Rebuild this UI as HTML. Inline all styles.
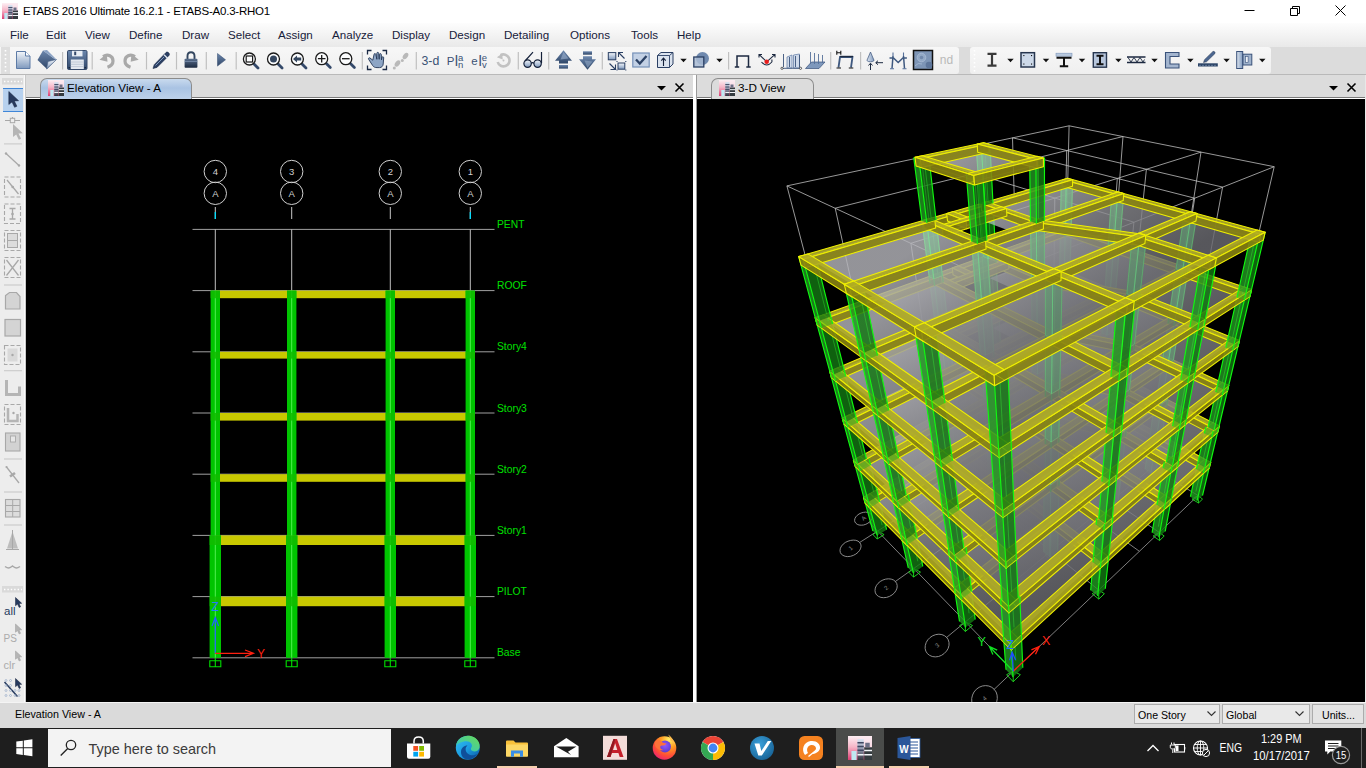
<!DOCTYPE html><html><head><meta charset="utf-8"><title>ETABS 2016 Ultimate 16.2.1 - ETABS-A0.3-RHO1</title><style>
*{box-sizing:border-box}
html,body{margin:0;padding:0}
body{width:1366px;height:768px;overflow:hidden;position:relative;background:#dcdcdc;font-family:"Liberation Sans",sans-serif;color:#000}
.abs{position:absolute}
#title{left:0;top:0;width:1366px;height:23px;background:#fff}
#title .t{left:23px;top:4.5px;font-size:11.5px;white-space:nowrap;color:#000;letter-spacing:-.216px}
#menu{left:0;top:23px;width:1366px;height:24px;background:linear-gradient(#fdfdfd,#f3f3f3 50%,#e9e9e9)}
#menu span{position:absolute;top:4.5px;font-size:11.6px;white-space:nowrap;color:#16203a;transform-origin:0 50%}
#tbar{left:0;top:47px;width:1366px;height:27px;background:#dcdcdc}
#tb1{left:0;top:0;width:959px;height:27px;background:linear-gradient(#f7f7f7,#efefef);border-radius:0 3px 3px 0}
#tb2{left:970px;top:0;width:301px;height:27px;background:linear-gradient(#f7f7f7,#efefef);border-radius:3px}
#tabline{left:0;top:74px;width:1366px;height:1px;background:#b9b9b9}
#strip{left:0;top:75px;width:1366px;height:24px;background:#dcdcdc}
.view{background:#000;overflow:hidden}
#lv{left:26px;top:99px;width:667px;height:603px}
#rv{left:697px;top:99px;width:668px;height:603px}
#split{left:693px;top:75px;width:4px;height:627px;background:#fff}
.tab{height:21px;top:78px;border:1px solid #8c8c8c;border-bottom:none;border-radius:7px 7px 0 0;font-size:11.7px;white-space:nowrap}
.tab span{position:absolute;top:1.5px}
#status{left:0;top:702px;width:1366px;height:26px;background:#dadada;border-top:1px solid #f4f4f4}
#task{left:0;top:728px;width:1366px;height:40px;background:#1e1e1e}
.cb{top:1px;height:20px;background:#e9e9e9;border:1px solid #acacac;font-size:10.6px;padding:3.5px 0 0 3px;white-space:nowrap}
</style></head><body>
<div id="title" class="abs"><svg class="abs" style="left:2px;top:3px" width="16" height="16" viewBox="0 0 16 16"><linearGradient id="ai" x1="0" y1="0" x2="0" y2="1"><stop offset="0" stop-color="#fdf0f4"/><stop offset=".45" stop-color="#f6b6c8"/><stop offset="1" stop-color="#de3f74"/></linearGradient><linearGradient id="aj" x1="0" y1="0" x2="0" y2="1"><stop offset="0" stop-color="#dfe8f6"/><stop offset=".5" stop-color="#8d93aa"/><stop offset="1" stop-color="#33363f"/></linearGradient><rect width="16" height="16" fill="url(#ai)"/><rect x="8" y="0" width="8" height="9" fill="#fbeaf1" opacity=".7"/><rect x="2.300" y="10" width="3.400" height="6" fill="#bfe8f2"/><rect x="6.300" y="2" width="4.200" height="14" fill="url(#aj)"/><rect x="10.800" y="7.500" width="5.200" height="8.500" fill="#343b3f"/><rect x="11.500" y="4.500" width="3" height="3" fill="#6c6f86"/><path d="M6.300 4.500h4.200M6.300 7h4.200M6.300 9.500h4.200" stroke="#3f4560" stroke-width=".9"/><path d="M10.800 9.700h5.200M10.800 12.500h5.200M6.300 12.500h4.200" stroke="#f2f4f8" stroke-width="1"/></svg><span class="abs t">ETABS 2016 Ultimate 16.2.1 - ETABS-A0.3-RHO1</span>
<svg class="abs" style="left:1220px;top:0" width="146" height="23"><path d="M24.5 10.5h10M70.5 8.5h7v7h-7zM72.5 8.5v-2h7v7h-2M115.5 5.5l10 10M125.5 5.5l-10 10" fill="none" stroke="#000" stroke-width="1"/></svg>
</div>
<div id="menu" class="abs"><span style="left:10px">File</span><span style="left:46px">Edit</span><span style="left:85px">View</span><span style="left:129px">Define</span><span style="left:182px">Draw</span><span style="left:228px">Select</span><span style="left:278px">Assign</span><span style="left:332px">Analyze</span><span style="left:392px">Display</span><span style="left:449px">Design</span><span style="left:504px">Detailing</span><span style="left:570px">Options</span><span style="left:631px">Tools</span><span style="left:677px">Help</span></div>
<div id="tbar" class="abs"><div id="tb1" class="abs"></div><div id="tb2" class="abs"></div><svg class="abs" style="left:0;top:0" width="1366" height="27" viewBox="0 47 1366 27" font-family="Liberation Sans, sans-serif"><defs>
<linearGradient id="sg" x1="0" y1="0" x2="0" y2="1"><stop offset="0" stop-color="#f4f7fb"/><stop offset="1" stop-color="#7f99bd"/></linearGradient>
<linearGradient id="sd" x1="0" y1="0" x2="0" y2="1"><stop offset="0" stop-color="#6c87ad"/><stop offset="1" stop-color="#2f4668"/></linearGradient>
<linearGradient id="sh" x1="0" y1="0" x2="1" y2="0"><stop offset="0" stop-color="#dfe7f1"/><stop offset="1" stop-color="#7f99bd"/></linearGradient>
<linearGradient id="sk" x1="0" y1="0" x2="0" y2="1"><stop offset="0" stop-color="#5a6f8e"/><stop offset="1" stop-color="#1c2a40"/></linearGradient><path id="dd" d="M-3.2 -1.6h6.4l-3.2 3.4z" fill="#111"/>
<g id="mag"><path d="M4.6 4.9l4 4" stroke="#34496a" stroke-width="2.8" stroke-linecap="round"/><circle r="6" fill="#fbfcfd" stroke="#1a1a1a" stroke-width="1.3"/></g>
<path id="ptr" d="M0 0v13l3.2-2.6l2.6 5.4l2.3-1.1l-2.6-5.2l4.3-.3z"/>
</defs><rect x="1" y="47" width="9" height="27" fill="#dedede"/><path d="M5.5 50v22" stroke="#fff" stroke-width="1.6" stroke-dasharray="1.6 2.4"/><path d="M974.5 50v22" stroke="#fff" stroke-width="1.6" stroke-dasharray="1.6 2.4"/><path d="M62.6 52v17.5" stroke="#c0c0c0" stroke-width="1.2"/><path d="M92.2 52v17.5" stroke="#c0c0c0" stroke-width="1.2"/><path d="M146.5 52v17.5" stroke="#c0c0c0" stroke-width="1.2"/><path d="M176.5 52v17.5" stroke="#c0c0c0" stroke-width="1.2"/><path d="M206.3 52v17.5" stroke="#c0c0c0" stroke-width="1.2"/><path d="M236.2 52v17.5" stroke="#c0c0c0" stroke-width="1.2"/><path d="M362.3 52v17.5" stroke="#c0c0c0" stroke-width="1.2"/><path d="M416.3 52v17.5" stroke="#c0c0c0" stroke-width="1.2"/><path d="M518.3 52v17.5" stroke="#c0c0c0" stroke-width="1.2"/><path d="M548.7 52v17.5" stroke="#c0c0c0" stroke-width="1.2"/><path d="M602.3 52v17.5" stroke="#c0c0c0" stroke-width="1.2"/><path d="M728.6 52v17.5" stroke="#c0c0c0" stroke-width="1.2"/><path d="M830.7 52v17.5" stroke="#c0c0c0" stroke-width="1.2"/><path d="M860.6 52v17.5" stroke="#c0c0c0" stroke-width="1.2"/><path d="M16.5 51.5h9l4.5 4.5v12.5h-13.5z" fill="url(#sg)" stroke="#5d7ba6" stroke-width="1"/><path d="M25.5 51.5v4.5h4.5" fill="#fff" stroke="#5d7ba6" stroke-width="1"/><path d="M37.5 60l5.5-9.5l13 9.5l-9 9z" fill="url(#sd)"/><path d="M43 50.5l4-.5l9.5 9.5l-.5 .5z" fill="#8aa2c4"/><path d="M46.5 69l1.5-7.5l8.5-2z" fill="url(#sg)" stroke="#4a6388" stroke-width=".6"/><rect x="67.5" y="50.5" width="19.5" height="19" rx="1.2" fill="url(#sd)" stroke="#34496a" stroke-width="1"/><rect x="72" y="50.8" width="10.5" height="5.6" fill="#e9eef5"/><rect x="74.2" y="51.6" width="2" height="3.6" fill="#34496a"/><rect x="70.8" y="59.5" width="13" height="9.5" fill="#e4e9f0"/><path d="M70.8 62h13M70.8 64.3h13M70.8 66.6h13" stroke="#b8c2d0" stroke-width=".8"/><rect x="68.6" y="67" width="1.3" height="1.3" fill="#16243a"/><rect x="84.6" y="67" width="1.3" height="1.3" fill="#16243a"/><path d="M103 56.5c5-3 10-.5 10 4.500c0 3-2 5-5.500 6.200" fill="none" stroke="#a9a9a9" stroke-width="3.2"/><path d="M99.500 59.800l7.200-6l.8 8z" fill="#a9a9a9"/><path d="M135 56.500c-5-3-10-.5-10 4.500c0 3 2 5 5.500 6.200" fill="none" stroke="#a9a9a9" stroke-width="3.200"/><path d="M138.700 59.800l-7.200-6l-.8 8z" fill="#a9a9a9"/><path d="M153 68.500l1.200-3.800l11.800-12.200c1.600-1.500 4.500 1.300 3 2.900l-12 12z" fill="#2b3f63" stroke="#1c2c48" stroke-width=".6"/><path d="M164 54.800l3.500 3.400" stroke="#dfe7f2" stroke-width="1.300"/><path d="M155.500 65.500l8.500-8.500" stroke="#7f97ba" stroke-width="1"/><path d="M187.500 59v-3c0-5 7-5 7 0v3" fill="none" stroke="#33465f" stroke-width="1.900"/><rect x="184.600" y="58.700" width="12.800" height="9" rx=".8" fill="url(#sk)"/><path d="M184.600 61.500h12.800" stroke="#8fa5c4" stroke-width=".8" opacity=".7"/><path d="M217.500 53.500l8 6.300l-8 6.300z" fill="url(#sd)" stroke="#30486c" stroke-width=".5"/><use href="#mag" x="249.400" y="59"/><rect x="246.200" y="56" width="6.400" height="6" fill="none" stroke="#1a1a1a" stroke-width="1.200"/><use href="#mag" x="273.500" y="59"/><circle cx="273.500" cy="59" r="3.500" fill="#34465f"/><use href="#mag" x="297.400" y="59"/><path d="M293 59l4-3.600v2.100h4.200v3h-4.200v2.100z" fill="#34465f"/><use href="#mag" x="321.700" y="58.700"/><path d="M317.900 58.700h7.600M321.700 54.900v7.600" stroke="#1a1a1a" stroke-width="1.300"/><use href="#mag" x="345.800" y="58.700"/><path d="M342 58.700h7.600" stroke="#1a1a1a" stroke-width="1.300"/><path d="M367.500 54.500v-4h4M382.500 50.500h4v4M386.500 65.500v4h-4M371.500 69.500h-4v-4" fill="none" stroke="#1b2a45" stroke-width="1.300"/><path d="M372.800 60.200l-2.800-2.200c-1-.7-2 .4-1.300 1.400l4 6.200c1 1.500 2.300 2 4.300 2h2.500c2.300 0 3.500-1.600 3.700-3.600l.5-6.200c.1-1.300-1.600-1.500-1.800-.2l-.4 2.300l-.2-5.300c0-1.300-1.800-1.300-1.900 0l-.2 4.700l-.5-6c-.1-1.300-1.900-1.200-1.900 .1l.1 5.900l-1.100-5c-.3-1.200-2-.8-1.800 .4z" fill="#8da5c5" stroke="#233655" stroke-width=".9"/><g fill="#b9b9b9"><ellipse cx="397.500" cy="63.500" rx="2.300" ry="3.600" transform="rotate(35 397.500 63.500)"/><circle cx="394.300" cy="68" r="1.500"/><ellipse cx="405.500" cy="56" rx="2.300" ry="3.600" transform="rotate(35 405.500 56)"/><circle cx="402.300" cy="60.500" r="1.500"/></g><text x="421.500" y="64.800" font-size="12.300" fill="#3b5275">3-d</text><text x="446.800" y="64.800" font-size="11.500" fill="#3b5275">P</text><text x="454.800" y="66.300" font-size="15" fill="#3b5275">l</text><text x="458" y="60.600" font-size="9.500" fill="#3b5275">a</text><text x="458" y="68.300" font-size="9.500" fill="#3b5275">n</text><text x="471.300" y="64.800" font-size="11.500" fill="#3b5275">e</text><text x="478.500" y="66.300" font-size="15" fill="#3b5275">l</text><text x="481.800" y="60.600" font-size="9.500" fill="#3b5275">e</text><text x="482" y="68.300" font-size="9.500" fill="#3b5275">v</text><path d="M500.500 55.200a6 6 0 1 1 -2.800 6.800" fill="none" stroke="#c2c2c2" stroke-width="2.600"/><path d="M496.800 57.300l5.500-3.800l.4 6z" fill="#c2c2c2"/><circle cx="503.500" cy="60.500" r="1" fill="#c2c2c2"/><circle cx="527.600" cy="63.600" r="3.700" fill="url(#sg)" stroke="#14203a" stroke-width="1.200"/><circle cx="537.600" cy="63.600" r="3.700" fill="url(#sg)" stroke="#14203a" stroke-width="1.200"/><path d="M531.300 63.300q1.300-1.300 2.600 0M525 61l8-8.800M541.500 63v-11" fill="none" stroke="#14203a" stroke-width="1.200"/><path d="M563.500 50.300l8.500 10.400h-4v2.800h-9v-2.800h-4z" fill="url(#sd)"/><rect x="559" y="65" width="9" height="3.600" fill="url(#sd)"/><path d="M563.500 52l5 6.500l-8 1z" fill="#9db3d0" opacity=".6"/><path d="M587.500 69.700l8.500-10.400h-4v-3h-9v3h-4z" fill="url(#sd)"/><rect x="583" y="51.300" width="9" height="3.400" fill="url(#sd)"/><path d="M587.500 68l5-6.500l-8-1z" fill="#9db3d0" opacity=".5"/><rect x="608.300" y="52.600" width="7.500" height="7.200" fill="url(#sg)" stroke="#2a3f63" stroke-width="1"/><rect x="618" y="63" width="6.800" height="6.200" fill="url(#sg)" stroke="#2a3f63" stroke-width="1"/><path d="M624.500 58.500l-5.500-5.500M618.500 57v-4.500h4.500M609.500 63.500l5.500 5.500M615.500 64.500v5h-5M617 62v-1M625.800 62v-1M617 70.500v-1M625.800 70.500v-1" fill="none" stroke="#2a3f63" stroke-width="1.100"/><rect x="632.800" y="53" width="16.400" height="14" fill="#c3d1e5" stroke="#7691b8" stroke-width="1.200"/><path d="M636 59.500l3.800 4l6.700-7.600" fill="none" stroke="#2c4265" stroke-width="2.300"/><path d="M657.500 55.500l3.500-3h12v11.500l-3.500 3.500h-12z" fill="#dbe3ee" stroke="#2a3f63" stroke-width="1"/><path d="M657.500 55.500h12v12M669.500 55.500l3.500-3" fill="none" stroke="#2a3f63" stroke-width=".9"/><path d="M663.500 66v-7M661.300 60.700l2.200-2.500l2.200 2.500" fill="none" stroke="#14203a" stroke-width="1.100"/><use href="#dd" x="683.500" y="60.400"/><circle cx="702.500" cy="58.500" r="6.500" fill="#6f89ae"/><rect x="693.800" y="57" width="10" height="10" fill="#a9bbd3" fill-opacity=".85" stroke="#2a3f63" stroke-width="1.300"/><use href="#dd" x="719.500" y="60.400"/><path d="M737 67v-11h11.500v11M734.800 67h4.400M746.300 67h4.400" fill="none" stroke="#1c2940" stroke-width="1.500"/><path d="M759.500 54.800l7.200 7l7.800-7M759 57.500v-3h3M772 54.500h3v3M761.500 62q5.200 6 10.400 0M771.900 62v-2.500" fill="none" stroke="#1c2940" stroke-width="1.100"/><circle cx="766.700" cy="61.800" r="2.300" fill="#e81c1c"/><path d="M787 68v-11l5-2v13zM793.500 68v-13l6-1v14z" fill="#cfdaea" stroke="#6d87ad" stroke-width=".8"/><path d="M782 68.300h18.500M783.500 54v13M789.500 57v10M795.500 56v11M799.500 55v12" fill="none" stroke="#3a527a" stroke-width=".9"/><circle cx="782" cy="68.300" r="1.100" fill="#fff" stroke="#222" stroke-width=".7"/><circle cx="800.500" cy="68.300" r="1.100" fill="#fff" stroke="#222" stroke-width=".7"/><path d="M805.500 68.500l6-6.500h13.500l-6 6.500z" fill="#7e98bc" stroke="#3a527a" stroke-width=".7"/><path d="M810.500 52v12M814.500 53v11M818.500 54v10M822.500 55v8" stroke="#56709a" stroke-width=".9"/><path d="M836.800 50.800v4M840.800 50.800v4M836.800 52.800h4" stroke="#111" stroke-width="1.100" fill="none"/><path d="M838.500 67.500l1.500-10.500h12.500l-1.500 10.500" fill="none" stroke="#3e587f" stroke-width="1.800"/><path d="M840 56.500h13" stroke="#1c2940" stroke-width="1.400"/><path d="M836.500 68h4.500M848.800 68h4.500" stroke="#111" stroke-width="1.200"/><path d="M870.500 52l3.600 8.500c-1.500 1.800-5.700 1.800-7.200 0z" fill="url(#sh)" stroke="#3a527a" stroke-width=".7"/><path d="M870.500 70v-6.500M868.500 65.500l2-2.300l2 2.300M883 62.700h-7M878 60.700l-2.300 2l2.300 2" fill="none" stroke="#1c2940" stroke-width="1"/><path d="M892 68.500l1-12.500M904.500 68.500l-1-12.500M889.500 58h4l4.700 4.500l4.700-4.500h4" fill="none" stroke="#3e587f" stroke-width="1.500"/><path d="M893 56v-3.500M903.500 56v-3.500M890 68.700h4M902.500 68.700h4" stroke="#56709a" stroke-width="1.100"/><rect x="913.500" y="50.500" width="19" height="19" fill="#7d95b6" stroke="#111" stroke-width="1.500"/><circle cx="921.500" cy="57.500" r="4.300" fill="#93a9c6" stroke="#a9bcd5" stroke-width=".8"/><circle cx="921.500" cy="57.500" r="1.800" fill="#7189ac"/><circle cx="929" cy="65" r="3.300" fill="#5e769b"/><path d="M915 66q3-4 7-2" stroke="#a9bcd5" stroke-width=".8" fill="none"/><text x="939.800" y="63.800" font-size="12" fill="#b9b9b9">nd</text><path d="M992 54v11.500M987.500 53.800h9M987.500 65.700h9" stroke="#3a3a3a" stroke-width="2.200" fill="none"/><use href="#dd" x="1010.500" y="60.400"/><rect x="1021" y="52.700" width="13.500" height="14.300" fill="#cdd9e9" stroke="#27364f" stroke-width="1.500"/><g fill="#111"><rect x="1023.300" y="55" width="1.100" height="1.100"/><rect x="1031" y="55" width="1.100" height="1.100"/><rect x="1023.300" y="63.500" width="1.100" height="1.100"/><rect x="1031" y="63.500" width="1.100" height="1.100"/></g><use href="#dd" x="1046" y="60.400"/><rect x="1056" y="53.200" width="16" height="3" fill="#b9c9de" stroke="#7e97bb" stroke-width=".6"/><path d="M1056.500 57.700h15M1064 58v8M1059.800 66.200h8.400" stroke="#111" stroke-width="2" fill="none"/><use href="#dd" x="1082" y="60.400"/><rect x="1093.300" y="52.700" width="13.200" height="14.500" fill="#b7c6dc" stroke="#27364f" stroke-width="1.400"/><path d="M1100 56v8M1096.500 55.800h7M1096.500 64.200h7" stroke="#111" stroke-width="2" fill="none"/><use href="#dd" x="1118.400" y="60.400"/><path d="M1127 57h18.500M1127 62.500h18.500" stroke="#1c2940" stroke-width="1.300"/><path d="M1128 57.500l3 4.500l3-4.500l3 4.500l3-4.500l3 4.500l1.500-2.500" fill="none" stroke="#1c2940" stroke-width=".9"/><use href="#dd" x="1154.500" y="60.400"/><path d="M1165.500 52.500h13.500v4h-9v7.500h9v4h-13.500z" fill="#a3b5cf" stroke="#3a527a" stroke-width="1.100"/><use href="#dd" x="1190.400" y="60.400"/><rect x="1198" y="63.300" width="19.800" height="3.200" fill="#2c4467"/><path d="M1200 66v-1.200M1203 66v-1.200M1206 66v-1.200M1209 66v-1.200M1212 66v-1.200M1215 66v-1.200" stroke="#9fb4d0" stroke-width=".8"/><path d="M1203.500 62.500l1-2.800l8.200-8c1.200-1.100 3.200 .8 2.100 2l-8.300 8.100z" fill="#4b6690" stroke="#27364f" stroke-width=".5"/><use href="#dd" x="1226.600" y="60.400"/><rect x="1236.700" y="51.500" width="6" height="17" fill="url(#sh)" stroke="#3a527a" stroke-width="1"/><rect x="1243" y="54.200" width="8.800" height="10.800" fill="#9fb2cc" stroke="#3a527a" stroke-width="1"/><rect x="1245.500" y="56.500" width="2.600" height="6" fill="#eef2f8" stroke="#3a527a" stroke-width=".6"/><use href="#dd" x="1262.300" y="60.400"/></svg></div>
<div id="tabline" class="abs"></div><div id="strip" class="abs"></div>
<div class="abs" style="left:0;top:75px;width:26px;height:627px;background:#e4e4e4"></div>
<svg class="abs" style="left:0;top:75px" width="26" height="627" viewBox="0 75 26 627" font-family="Liberation Sans, sans-serif"><rect x="0" y="75" width="25" height="627" fill="#ededed"/><path d="M24.500 75v627" stroke="#fafafa"/><path d="M25.500 75v627" stroke="#c8c8c8"/><rect x="2" y="78" width="21" height="6.500" fill="#dadada"/><path d="M4 81.500h18" stroke="#fff" stroke-width="1.400" stroke-dasharray="1.400 2"/><rect x="2" y="586" width="21" height="6.500" fill="#dadada"/><path d="M4 589.500h18" stroke="#fff" stroke-width="1.400" stroke-dasharray="1.400 2"/><rect x="3" y="88.500" width="20" height="23" fill="#b7d1ee"/><path d="M3 88.500h20M3 111.500h20" stroke="#3f86d8" stroke-width="1"/><use href="#ptr" x="8.800" y="91.500" fill="#263a5e" stroke="#16233d" stroke-width=".5"/><path d="M5 120.500h15M12.500 117v3" stroke="#a8a8a8" stroke-width="1.100"/><rect x="10.300" y="118.300" width="4.400" height="4.400" fill="#ededed" stroke="#a8a8a8"/><use href="#ptr" x="13" y="124" fill="#b5b5b5" transform="scale(1)" /><path d="M4 143.9h18" stroke="#c9c9c9" stroke-width="1.100"/><path d="M4 285.0h18" stroke="#c9c9c9" stroke-width="1.100"/><path d="M4 370.7h18" stroke="#c9c9c9" stroke-width="1.100"/><path d="M4 459.0h18" stroke="#c9c9c9" stroke-width="1.100"/><path d="M4 492.0h18" stroke="#c9c9c9" stroke-width="1.100"/><path d="M4 525.0h18" stroke="#c9c9c9" stroke-width="1.100"/><path d="M6 153.500l13 12" stroke="#a8a8a8" stroke-width="1.300"/><circle cx="6" cy="153.500" r="1.200" fill="#a8a8a8"/><circle cx="19" cy="165.500" r="1.200" fill="#a8a8a8"/><rect x="4.500" y="177.0" width="16" height="20.0" fill="none" stroke="#a8a8a8" stroke-width="1.100" stroke-dasharray="4 2"/><path d="M7 180l11.500 14" stroke="#a8a8a8" stroke-width="1.300"/><circle cx="12.700" cy="187" r="1.300" fill="#a8a8a8"/><rect x="4.500" y="204.0" width="16" height="19.5" fill="none" stroke="#a8a8a8" stroke-width="1.100" stroke-dasharray="4 2"/><path d="M12.500 208.500v10.500M9.500 208.500h6M9.500 219h6" stroke="#a8a8a8" stroke-width="1.300"/><circle cx="12.500" cy="214" r="1.300" fill="#a8a8a8"/><rect x="4.500" y="230.5" width="16" height="20.0" fill="none" stroke="#a8a8a8" stroke-width="1.100" stroke-dasharray="4 2"/><rect x="7.500" y="233.500" width="10" height="14" fill="#dcdcdc" stroke="#a8a8a8"/><path d="M7.500 240.500h10" stroke="#a8a8a8"/><rect x="4.500" y="257.5" width="16" height="20.0" fill="none" stroke="#a8a8a8" stroke-width="1.100" stroke-dasharray="4 2"/><path d="M6.500 260l12 15.500M18.500 260l-12 15.500" stroke="#a8a8a8" stroke-width="1.300"/><path d="M5.500 309v-13.500l4-3h7l3.500 4v12.500z" fill="#d4d4d4" stroke="#a8a8a8" stroke-width="1.200"/><rect x="5" y="319.500" width="15.500" height="16.500" fill="#d4d4d4" stroke="#a8a8a8" stroke-width="1.200"/><rect x="4.500" y="345.5" width="16" height="19.0" fill="none" stroke="#a8a8a8" stroke-width="1.100" stroke-dasharray="4 2"/><rect x="7.500" y="348.500" width="10" height="13" fill="#d9d9d9"/><circle cx="12.500" cy="355" r="1.200" fill="#a8a8a8"/><path d="M6.500 380v14.500h13v-8" fill="none" stroke="#b5b5b5" stroke-width="3"/><rect x="4.500" y="404.5" width="16" height="20.0" fill="none" stroke="#a8a8a8" stroke-width="1.100" stroke-dasharray="4 2"/><path d="M8 408v13h9.500v-7" fill="none" stroke="#b5b5b5" stroke-width="2.500"/><circle cx="13.500" cy="413" r="1.200" fill="#a8a8a8"/><rect x="5.500" y="433" width="14.500" height="18" fill="#d2d2d2" stroke="#a8a8a8" stroke-width="1.100"/><rect x="10.500" y="436" width="5" height="6" fill="#e6e6e6" stroke="#a8a8a8" stroke-width=".9"/><path d="M6.500 467l12.500 16" stroke="#a8a8a8" stroke-width="1.300"/><path d="M10 476.500l5-3.500" stroke="#a8a8a8" stroke-width="2.600"/><circle cx="6.500" cy="467" r="1.100" fill="#a8a8a8"/><rect x="5.500" y="499.500" width="14.500" height="17.500" fill="#dcdcdc" stroke="#a8a8a8" stroke-width="1.100"/><path d="M12.700 499.500v17.500M5.500 505.500h14.500M5.500 511.500h14.500" stroke="#a8a8a8" stroke-width="1"/><path d="M12.500 531.500l5.500 17h-11z" fill="#bdbdbd"/><path d="M12.500 530v20M6 549.500h13" stroke="#a8a8a8" stroke-width="1"/><path d="M5 566.500c3 2 4.500 2 7.500-.5c3 2.500 4.500 2.500 7.500 .5" fill="none" stroke="#a8a8a8" stroke-width="1.500"/><text x="4" y="615" font-size="11.500" fill="#263a5e">all</text><path d="M15.500 597.5v8.200l2-1.600l1.700 3.400l1.400-.7l-1.600-3.300l2.700-.2z" fill="#263a5e" stroke="#16233d" stroke-width=".5"/><text x="3.500" y="641.500" font-size="10" fill="#ababab">PS</text><path d="M15.500 624.0v8.200l2-1.600l1.700 3.400l1.400-.7l-1.600-3.300l2.700-.2z" fill="#b5b5b5" stroke="#9a9a9a" stroke-width=".5"/><text x="3.500" y="668.500" font-size="11" fill="#ababab">clr</text><path d="M15.500 651.0v8.200l2-1.600l1.700 3.400l1.400-.7l-1.600-3.300l2.700-.2z" fill="#b5b5b5" stroke="#9a9a9a" stroke-width=".5"/><path d="M4.500 682l13 14.500" stroke="#263a5e" stroke-width="1.500"/><g fill="none" stroke="#8fa5c4" stroke-width=".6"><circle cx="6" cy="680.500" r="1"/><circle cx="10.500" cy="680.500" r="1"/><circle cx="6" cy="685.500" r="1"/><circle cx="10.500" cy="685.500" r="1"/><circle cx="6" cy="690.500" r="1"/><circle cx="10.500" cy="690.500" r="1"/><circle cx="15" cy="690.500" r="1"/><circle cx="6" cy="695.500" r="1"/><circle cx="10.500" cy="695.500" r="1"/><circle cx="15" cy="695.500" r="1"/><circle cx="19" cy="695.500" r="1"/><circle cx="19" cy="690.500" r="1"/></g><path d="M15.500 678.5v8.200l2-1.600l1.700 3.400l1.400-.7l-1.600-3.300l2.700-.2z" fill="#263a5e" stroke="#16233d" stroke-width=".5"/></svg>
<div class="abs" style="left:26px;top:97px;width:667px;height:2px;background:#fff;border-top:1px solid #7a7a7a"></div>
<div class="abs" style="left:697px;top:97px;width:669px;height:2px;background:#fff;border-top:1px solid #7a7a7a"></div>
<div id="split" class="abs"></div><div class="abs" style="left:696px;top:75px;width:1px;height:627px;background:#9a9a9a"></div>
<div class="abs tab" style="left:40px;width:152px;background:linear-gradient(#c9daee,#a9c3e3 45%,#bcd1ea)"><svg class="abs" style="left:7px;top:0.5px" width="16" height="16" viewBox="0 0 16 16"><linearGradient id="ai" x1="0" y1="0" x2="0" y2="1"><stop offset="0" stop-color="#fdf0f4"/><stop offset=".45" stop-color="#f6b6c8"/><stop offset="1" stop-color="#de3f74"/></linearGradient><linearGradient id="aj" x1="0" y1="0" x2="0" y2="1"><stop offset="0" stop-color="#dfe8f6"/><stop offset=".5" stop-color="#8d93aa"/><stop offset="1" stop-color="#33363f"/></linearGradient><rect width="16" height="16" fill="url(#ai)"/><rect x="8" y="0" width="8" height="9" fill="#fbeaf1" opacity=".7"/><rect x="2.300" y="10" width="3.400" height="6" fill="#bfe8f2"/><rect x="6.300" y="2" width="4.200" height="14" fill="url(#aj)"/><rect x="10.800" y="7.500" width="5.200" height="8.500" fill="#343b3f"/><rect x="11.500" y="4.500" width="3" height="3" fill="#6c6f86"/><path d="M6.300 4.500h4.200M6.300 7h4.200M6.300 9.500h4.200" stroke="#3f4560" stroke-width=".9"/><path d="M10.800 9.700h5.200M10.800 12.500h5.200M6.300 12.500h4.200" stroke="#f2f4f8" stroke-width="1"/></svg><span style="left:26px">Elevation View - A</span></div>
<div class="abs tab" style="left:711px;width:103px;background:#dcdcdc"><svg class="abs" style="left:7px;top:0.5px" width="16" height="16" viewBox="0 0 16 16"><linearGradient id="ai" x1="0" y1="0" x2="0" y2="1"><stop offset="0" stop-color="#fdf0f4"/><stop offset=".45" stop-color="#f6b6c8"/><stop offset="1" stop-color="#de3f74"/></linearGradient><linearGradient id="aj" x1="0" y1="0" x2="0" y2="1"><stop offset="0" stop-color="#dfe8f6"/><stop offset=".5" stop-color="#8d93aa"/><stop offset="1" stop-color="#33363f"/></linearGradient><rect width="16" height="16" fill="url(#ai)"/><rect x="8" y="0" width="8" height="9" fill="#fbeaf1" opacity=".7"/><rect x="2.300" y="10" width="3.400" height="6" fill="#bfe8f2"/><rect x="6.300" y="2" width="4.200" height="14" fill="url(#aj)"/><rect x="10.800" y="7.500" width="5.200" height="8.500" fill="#343b3f"/><rect x="11.500" y="4.500" width="3" height="3" fill="#6c6f86"/><path d="M6.300 4.500h4.200M6.300 7h4.200M6.300 9.500h4.200" stroke="#3f4560" stroke-width=".9"/><path d="M10.800 9.700h5.200M10.800 12.500h5.200M6.300 12.500h4.200" stroke="#f2f4f8" stroke-width="1"/></svg><span style="left:26px">3-D View</span></div>
<svg class="abs" style="left:650px;top:80px" width="40" height="16"><path d="M7 6h9l-4.5 4.5z" fill="#000"/><path d="M25.5 3.5l8 8M33.5 3.5l-8 8" stroke="#000" stroke-width="1.6" fill="none"/></svg>
<svg class="abs" style="left:1322px;top:80px" width="40" height="16"><path d="M7 6h9l-4.5 4.5z" fill="#000"/><path d="M25.5 3.5l8 8M33.5 3.5l-8 8" stroke="#000" stroke-width="1.6" fill="none"/></svg>
<div id="lv" class="abs view"><svg class="ev" width="667" height="603" viewBox="26 99 667 603">
<style>.el{stroke:#a0a0a0;stroke-width:1}.et{font:10.3px "Liberation Sans",sans-serif;fill:#00e000}.bb{fill:none;stroke:#d0d0d0;stroke-width:1}.bt2{font:9.5px "Liberation Sans",sans-serif;fill:#d0d0d0;text-anchor:middle}</style>
<line class="el" x1="192.5" x2="494.5" y1="229.4" y2="229.4"/>
<line class="el" x1="192.5" x2="494.5" y1="290.6" y2="290.6"/>
<line class="el" x1="192.5" x2="494.5" y1="351.8" y2="351.8"/>
<line class="el" x1="192.5" x2="494.5" y1="413.0" y2="413.0"/>
<line class="el" x1="192.5" x2="494.5" y1="474.2" y2="474.2"/>
<line class="el" x1="192.5" x2="494.5" y1="535.4" y2="535.4"/>
<line class="el" x1="192.5" x2="494.5" y1="596.6" y2="596.6"/>
<line class="el" x1="192.5" x2="494.5" y1="657.8" y2="657.8"/>
<line class="el" x1="215.3" x2="215.3" y1="229.4" y2="657.8" style="stroke:#c0c0c0"/>
<line class="el" x1="291.7" x2="291.7" y1="229.4" y2="657.8" style="stroke:#c0c0c0"/>
<line class="el" x1="390.3" x2="390.3" y1="229.4" y2="657.8" style="stroke:#c0c0c0"/>
<line class="el" x1="470.3" x2="470.3" y1="229.4" y2="657.8" style="stroke:#c0c0c0"/>
<rect x="215.3" y="290.6" width="255.0" height="7.6" fill="#c8c800"/>
<rect x="215.3" y="351.8" width="255.0" height="6.8" fill="#c8c800"/>
<rect x="215.3" y="413.0" width="255.0" height="7.6" fill="#c8c800"/>
<rect x="215.3" y="474.2" width="255.0" height="7.6" fill="#c8c800"/>
<rect x="215.3" y="535.4" width="255.0" height="9.6" fill="#c8c800"/>
<rect x="215.3" y="596.6" width="255.0" height="9.6" fill="#c8c800"/>
<rect x="210.6" y="290.6" width="9.4" height="244.8" fill="#00c400"/>
<rect x="209.6" y="535.4" width="11.4" height="122.4" fill="#00c400"/>
<line x1="215.3" x2="215.3" y1="290.6" y2="657.8" stroke="#50f050" stroke-width="1"/>
<path d="M215.3 657.8v3M209.8 660.8h11v6h-11zM215.3 660.8v6" fill="none" stroke="#00e000" stroke-width="1.1"/>
<rect x="287.0" y="290.6" width="9.4" height="244.8" fill="#00c400"/>
<rect x="286.0" y="535.4" width="11.4" height="122.4" fill="#00c400"/>
<line x1="291.7" x2="291.7" y1="290.6" y2="657.8" stroke="#50f050" stroke-width="1"/>
<path d="M291.7 657.8v3M286.2 660.8h11v6h-11zM291.7 660.8v6" fill="none" stroke="#00e000" stroke-width="1.1"/>
<rect x="385.6" y="290.6" width="9.4" height="244.8" fill="#00c400"/>
<rect x="384.6" y="535.4" width="11.4" height="122.4" fill="#00c400"/>
<line x1="390.3" x2="390.3" y1="290.6" y2="657.8" stroke="#50f050" stroke-width="1"/>
<path d="M390.3 657.8v3M384.8 660.8h11v6h-11zM390.3 660.8v6" fill="none" stroke="#00e000" stroke-width="1.1"/>
<rect x="465.6" y="290.6" width="9.4" height="244.8" fill="#00c400"/>
<rect x="464.6" y="535.4" width="11.4" height="122.4" fill="#00c400"/>
<line x1="470.3" x2="470.3" y1="290.6" y2="657.8" stroke="#50f050" stroke-width="1"/>
<path d="M470.3 657.8v3M464.8 660.8h11v6h-11zM470.3 660.8v6" fill="none" stroke="#00e000" stroke-width="1.1"/>
<rect x="210.6" y="290.6" width="9.4" height="7.6" fill="#10bc00" opacity=".85"/>
<rect x="287.0" y="290.6" width="9.4" height="7.6" fill="#10bc00" opacity=".85"/>
<rect x="385.6" y="290.6" width="9.4" height="7.6" fill="#10bc00" opacity=".85"/>
<rect x="465.6" y="290.6" width="9.4" height="7.6" fill="#10bc00" opacity=".85"/>
<rect x="210.6" y="351.8" width="9.4" height="6.8" fill="#10bc00" opacity=".85"/>
<rect x="287.0" y="351.8" width="9.4" height="6.8" fill="#10bc00" opacity=".85"/>
<rect x="385.6" y="351.8" width="9.4" height="6.8" fill="#10bc00" opacity=".85"/>
<rect x="465.6" y="351.8" width="9.4" height="6.8" fill="#10bc00" opacity=".85"/>
<rect x="210.6" y="413.0" width="9.4" height="7.6" fill="#10bc00" opacity=".85"/>
<rect x="287.0" y="413.0" width="9.4" height="7.6" fill="#10bc00" opacity=".85"/>
<rect x="385.6" y="413.0" width="9.4" height="7.6" fill="#10bc00" opacity=".85"/>
<rect x="465.6" y="413.0" width="9.4" height="7.6" fill="#10bc00" opacity=".85"/>
<rect x="210.6" y="474.2" width="9.4" height="7.6" fill="#10bc00" opacity=".85"/>
<rect x="287.0" y="474.2" width="9.4" height="7.6" fill="#10bc00" opacity=".85"/>
<rect x="385.6" y="474.2" width="9.4" height="7.6" fill="#10bc00" opacity=".85"/>
<rect x="465.6" y="474.2" width="9.4" height="7.6" fill="#10bc00" opacity=".85"/>
<rect x="209.6" y="535.4" width="11.4" height="9.6" fill="#10bc00" opacity=".85"/>
<rect x="286.0" y="535.4" width="11.4" height="9.6" fill="#10bc00" opacity=".85"/>
<rect x="384.6" y="535.4" width="11.4" height="9.6" fill="#10bc00" opacity=".85"/>
<rect x="464.6" y="535.4" width="11.4" height="9.6" fill="#10bc00" opacity=".85"/>
<rect x="209.6" y="596.6" width="11.4" height="9.6" fill="#10bc00" opacity=".85"/>
<rect x="286.0" y="596.6" width="11.4" height="9.6" fill="#10bc00" opacity=".85"/>
<rect x="384.6" y="596.6" width="11.4" height="9.6" fill="#10bc00" opacity=".85"/>
<rect x="464.6" y="596.6" width="11.4" height="9.6" fill="#10bc00" opacity=".85"/>
<circle class="bb" cx="215.3" cy="171.5" r="11.2"/><circle class="bb" cx="215.3" cy="193.3" r="11.2"/>
<text class="bt2" x="215.3" y="174.9">4</text><text class="bt2" x="215.3" y="196.7">A</text>
<line x1="215.3" x2="215.3" y1="207" y2="219" stroke="#c8c8c8" stroke-width="1"/>
<circle class="bb" cx="291.7" cy="171.5" r="11.2"/><circle class="bb" cx="291.7" cy="193.3" r="11.2"/>
<text class="bt2" x="291.7" y="174.9">3</text><text class="bt2" x="291.7" y="196.7">A</text>
<line x1="291.7" x2="291.7" y1="207" y2="219" stroke="#c8c8c8" stroke-width="1"/>
<circle class="bb" cx="390.3" cy="171.5" r="11.2"/><circle class="bb" cx="390.3" cy="193.3" r="11.2"/>
<text class="bt2" x="390.3" y="174.9">2</text><text class="bt2" x="390.3" y="196.7">A</text>
<line x1="390.3" x2="390.3" y1="207" y2="219" stroke="#c8c8c8" stroke-width="1"/>
<circle class="bb" cx="470.3" cy="171.5" r="11.2"/><circle class="bb" cx="470.3" cy="193.3" r="11.2"/>
<text class="bt2" x="470.3" y="174.9">1</text><text class="bt2" x="470.3" y="196.7">A</text>
<line x1="470.3" x2="470.3" y1="207" y2="219" stroke="#c8c8c8" stroke-width="1"/>
<line x1="215.3" x2="215.3" y1="212" y2="219" stroke="#00e0ff" stroke-width="1.3"/>
<line x1="470.3" x2="470.3" y1="212" y2="219" stroke="#00e0ff" stroke-width="1.3"/>
<text class="et" x="497" y="227.9">PENT</text>
<text class="et" x="497" y="289.1">ROOF</text>
<text class="et" x="497" y="350.3">Story4</text>
<text class="et" x="497" y="411.5">Story3</text>
<text class="et" x="497" y="472.7">Story2</text>
<text class="et" x="497" y="533.9">Story1</text>
<text class="et" x="497" y="595.1">PILOT</text>
<text class="et" x="497" y="656.3">Base</text>
<path d="M215.3 653.3V618M212.0 626l3.3-8.5l3.3 8.5" fill="none" stroke="#2060ff" stroke-width="1.2"/>
<path d="M215.3 653.3H253M245 650.0l8.5 3.3l-8.5 3.3" fill="none" stroke="#ff2010" stroke-width="1.2"/>
<text x="211.5" y="611" style="font:12px 'Liberation Sans',sans-serif;fill:#2878ff">Z</text>
<text x="257" y="658" style="font:12px 'Liberation Sans',sans-serif;fill:#ff2010">Y</text>
</svg></div>
<div id="rv" class="abs view"><svg class="v3" width="669" height="603" viewBox="697 99 669 603"><style>
.gw{stroke:#bebebe;stroke-width:.8}
.gg{stroke:#8c8c8c;stroke-width:.9}
.cs{fill:rgba(34,150,34,.82)}
.ce{fill:rgba(18,118,18,.82)}
.cv{fill:none;stroke:#10f810;stroke-width:1.15}
.ct{fill:rgba(60,170,60,.8);stroke:#14f514;stroke-width:.9;stroke-linejoin:round}
.ch{fill:none;stroke:rgba(60,255,60,.45);stroke-width:.8}
.bs{fill:rgba(135,130,18,.9);stroke:#f0f000;stroke-width:1.05;stroke-linejoin:round}
.bt{fill:rgba(176,172,36,.9);stroke:#f0f000;stroke-width:1.05;stroke-linejoin:round}
.bh{fill:none;stroke:rgba(240,240,0,.4);stroke-width:.8}
.sl{fill-opacity:.82;stroke:none}
.bu{fill:none;stroke:#9a9a9a;stroke-width:.9}
.bx{font:6px "Liberation Sans",sans-serif;fill:#8a8a8a}
.su{fill:none;stroke:#20e020;stroke-width:.9}
.ax{font:12.5px "Liberation Sans",sans-serif}
.cj{fill:rgba(40,170,30,.5)}
.cg{fill:rgba(90,240,140,.15);stroke:rgba(120,255,160,.25);stroke-width:.8}
</style>
<line class="gw" x1="989.1" y1="279.6" x2="786.9" y2="185.9"/>
<line class="gw" x1="1133.9" y1="222.2" x2="921.3" y2="157.3"/>
<line class="gw" x1="1194.7" y1="198.2" x2="983" y2="144.1"/>
<line class="gw" x1="1222.6" y1="187.1" x2="1012.5" y2="137.8"/>
<line class="gw" x1="1274.2" y1="166.7" x2="1069.1" y2="125.8"/>
<line class="gw" x1="989.1" y1="279.6" x2="1274.2" y2="166.7"/>
<line class="gw" x1="910.9" y1="243.3" x2="1201" y2="152.1"/>
<line class="gw" x1="835.2" y1="208.2" x2="1123" y2="136.5"/>
<line class="gw" x1="786.9" y1="185.9" x2="1069.1" y2="125.8"/>
<line class="gw" x1="994.7" y1="369.8" x2="989.1" y2="279.6"/>
<line class="gw" x1="923" y1="326.9" x2="910.9" y2="243.3"/>
<line class="gw" x1="851.8" y1="284.3" x2="835.2" y2="208.2"/>
<line class="gw" x1="805.5" y1="256.6" x2="786.9" y2="185.9"/>
<line class="gw" x1="1126.3" y1="301.2" x2="1133.9" y2="222.2"/>
<line class="gw" x1="1054" y1="271.6" x2="1054.8" y2="198.1"/>
<line class="gw" x1="979.2" y1="241" x2="974.5" y2="173.5"/>
<line class="gw" x1="929" y1="220.4" x2="921.3" y2="157.3"/>
<line class="gw" x1="1183.2" y1="271.7" x2="1194.7" y2="198.2"/>
<line class="gw" x1="1112.2" y1="247" x2="1117.3" y2="178.4"/>
<line class="gw" x1="1037.5" y1="221.2" x2="1037.1" y2="157.9"/>
<line class="gw" x1="986.5" y1="203.5" x2="983" y2="144.1"/>
<line class="gw" x1="1209.6" y1="257.9" x2="1222.6" y2="187.1"/>
<line class="gw" x1="1139.5" y1="235.5" x2="1146.4" y2="169.3"/>
<line class="gw" x1="1065.3" y1="211.7" x2="1066.7" y2="150.5"/>
<line class="gw" x1="1014.2" y1="195.4" x2="1012.5" y2="137.8"/>
<line class="gw" x1="1259" y1="232.2" x2="1274.2" y2="166.7"/>
<line class="gw" x1="1191.4" y1="213.6" x2="1201" y2="152.1"/>
<line class="gw" x1="1118.6" y1="193.6" x2="1123" y2="136.5"/>
<line class="gw" x1="1067.8" y1="179.7" x2="1069.1" y2="125.8"/>
<line class="gg" x1="1013.3" y1="671.2" x2="869.2" y2="522.4"/>
<line class="gg" x1="1098.7" y1="590" x2="960.4" y2="478.3"/>
<line class="gg" x1="1139.4" y1="551.3" x2="1001.3" y2="452.1"/>
<line class="gg" x1="1159.3" y1="532.4" x2="1021.7" y2="439.2"/>
<line class="gg" x1="1198.1" y1="495.5" x2="1062.1" y2="413.4"/>
<line class="gg" x1="993.8" y1="689.7" x2="1198.1" y2="495.5"/>
<line class="gg" x1="946.3" y1="637.7" x2="1151.9" y2="467.6"/>
<line class="gg" x1="895.1" y1="581.7" x2="1099.8" y2="436.2"/>
<line class="gg" x1="859.3" y1="542.7" x2="1062.1" y2="413.4"/>
<polygon class="bu" points="994.2,689.3 991.8,687.3 988.8,686 985.6,685.6 982.3,686 979.1,687.3 976.3,689.3 974,692 972.5,695.1 971.7,698.5 971.8,702 972.8,705.2 974.5,708 977,710.2 980.1,711.5 983.4,712 986.8,711.5 990.1,710.1 992.9,708 995.2,705.2 996.7,701.9 997.3,698.5 997.1,695.1 996.1,692"/><text class="bx" x="983" y="700.5" transform="rotate(-42 984.5 698.5)">4</text>
<polygon class="bu" points="946.7,637.4 944.5,635.7 941.9,634.6 938.9,634.2 935.8,634.6 932.8,635.7 930.1,637.5 927.8,639.8 926.2,642.5 925.3,645.4 925.1,648.3 925.8,651.1 927.3,653.5 929.5,655.3 932.2,656.5 935.3,656.9 938.5,656.5 941.6,655.3 944.3,653.4 946.6,651 948.2,648.3 949,645.3 949,642.4 948.2,639.7"/><text class="bx" x="935.6" y="647.4" transform="rotate(-42 937.1 645.4)">3</text>
<polygon class="bu" points="895.4,581.5 893.6,580 891.2,579.1 888.5,578.8 885.7,579.1 882.9,580 880.2,581.5 878,583.4 876.3,585.7 875.3,588.1 875,590.6 875.4,592.9 876.6,594.9 878.5,596.4 880.9,597.4 883.6,597.7 886.6,597.4 889.5,596.4 892.1,594.9 894.4,592.9 896,590.5 897,588.1 897.2,585.7 896.7,583.4"/><text class="bx" x="884.6" y="590.1" transform="rotate(-42 886.1 588.1)">2</text>
<polygon class="bu" points="859.6,542.4 858,541.1 855.8,540.3 853.3,540.1 850.7,540.4 848,541.2 845.4,542.4 843.2,544.1 841.5,546.1 840.4,548.2 840,550.4 840.3,552.4 841.3,554.1 843,555.4 845.2,556.3 847.7,556.6 850.5,556.3 853.3,555.4 855.8,554.1 858,552.3 859.7,550.3 860.7,548.2 861.1,546.1 860.7,544.1"/><text class="bx" x="849.1" y="550.2" transform="rotate(-42 850.6 548.2)">1</text>
<polygon class="bu" points="870.9,514 869.5,513 867.6,512.4 865.6,512.1 863.3,512.4 861.1,513 859,514 857.2,515.4 855.8,516.9 854.9,518.6 854.6,520.3 854.9,521.9 855.8,523.2 857.2,524.3 859,525 861.2,525.2 863.5,525 865.8,524.3 867.9,523.2 869.7,521.9 871,520.3 871.9,518.6 872.1,516.9 871.8,515.3"/><text class="bx" x="861.9" y="520.6" transform="rotate(-42 863.4 518.6)">A</text>
<path class="su" d="M1013.2 681.7L1020.4 674.7L1013.3 671.2L1013.2 681.7L1006.6 674.7L1013.3 671.2"/>
<path class="su" d="M965.3 631.5L972.5 625.5L965.5 621.9L965.3 631.5L959.6 625.5L965.5 621.9"/>
<path class="su" d="M913.5 577.1L920.5 572.1L913.8 568.4L913.5 577.1L908.7 572.1L913.8 568.4"/>
<path class="su" d="M877.2 539L884.1 534.6L877.6 531L877.2 539L873 534.6L877.6 531"/>
<path class="su" d="M1098.8 599.1L1104.4 593.7L1098.7 590L1098.8 599.1L1092.2 593.7L1098.7 590"/>
<path class="su" d="M1050.8 559.7L1056.4 555L1050.8 551.3L1050.8 559.7L1045 555L1050.8 551.3"/>
<path class="su" d="M997.8 516.3L1003.5 512.2L997.9 508.6L997.8 516.3L992.9 512.2L997.9 508.6"/>
<path class="su" d="M960.2 485.4L965.8 481.8L960.4 478.3L960.2 485.4L955.8 481.8L960.4 478.3"/>
<path class="su" d="M1198.5 503L1202.5 499.1L1198.1 495.5L1198.5 503L1192.1 499.1L1198.1 495.5"/>
<path class="su" d="M1152.1 474.6L1156.2 471.1L1151.9 467.6L1152.1 474.6L1146.5 471.2L1151.9 467.6"/>
<path class="su" d="M1099.9 442.7L1104.1 439.7L1099.8 436.2L1099.9 442.7L1095 439.7L1099.8 436.2"/>
<path class="su" d="M1062.1 419.6L1066.3 416.8L1062.1 413.4L1062.1 419.6L1057.6 416.8L1062.1 413.4"/>
<path class="su" d="M1159.6 540.5L1164.2 536L1159.3 532.4L1159.6 540.5L1153.1 536L1159.3 532.4"/>
<path class="su" d="M1112.3 508L1117 504.1L1112.2 500.5L1112.3 508L1106.6 504.1L1112.2 500.5"/>
<path class="su" d="M1039.2 486.5L1044.2 482.9L1039.2 479.3L1039.2 486.5L1034.2 482.9L1039.2 479.3"/>
<path class="su" d="M1001.3 458.9L1006.3 455.6L1001.3 452.1L1001.3 458.9L996.8 455.6L1001.3 452.1"/>
<polygon class="cs" points="1056.2,414.8 1060.9,417.7 1061.7,386.6 1056.7,383.8"/><polygon class="ce" points="1060.9,417.7 1066.7,414 1067.6,383 1061.7,386.6"/><path class="cv" d="M1056.2 414.8L1056.7 383.8M1060.9 417.7L1061.7 386.6M1066.7 414L1067.6 383"/><path class="ch" d="M1062 411.2L1062.7 380.3"/>
<polygon class="cs" points="1093.3,437.4 1098.5,440.6 1100.9,408.9 1095.5,405.8"/><polygon class="ce" points="1098.5,440.6 1104.2,436.5 1106.9,404.9 1100.9,408.9"/><path class="cv" d="M1093.3 437.4L1095.5 405.8M1098.5 440.6L1100.9 408.9M1104.2 436.5L1106.9 404.9"/><path class="ch" d="M1099 433.4L1101.4 401.8"/>
<polygon class="cs" points="996,453 1000.7,456.4 998.8,424.2 993.9,420.8"/><polygon class="ce" points="1000.7,456.4 1007.5,452 1005.9,419.9 998.8,424.2"/><path class="cv" d="M996 453L993.9 420.8M1000.7 456.4L998.8 424.2M1007.5 452L1005.9 419.9"/><path class="ch" d="M1002.8 448.6L1001 416.6"/>
<polygon class="cs" points="1145.1,469 1151,472.6 1156.1,440.1 1149.8,436.5"/><polygon class="ce" points="1151,472.6 1156.6,468 1161.9,435.5 1156.1,440.1"/><path class="cv" d="M1145.1 469L1149.8 436.5M1151 472.6L1156.1 440.1M1156.6 468L1161.9 435.5"/><path class="ch" d="M1150.7 464.4L1155.6 432"/>
<polygon class="cs" points="954.7,479.2 959.3,483 955.2,450.1 950.4,446.4"/><polygon class="ce" points="959.3,483 966.9,478.1 963.3,445.4 955.2,450.1"/><path class="cv" d="M954.7 479.2L950.4 446.4M959.3 483L955.2 450.1M966.9 478.1L963.3 445.4"/><path class="ch" d="M962.3 474.3L958.4 441.7"/>
<polygon class="cs" points="1190.4,496.7 1197.1,500.7 1204.8,467.6 1197.7,463.6"/><polygon class="ce" points="1197.1,500.7 1202.5,495.5 1210.4,462.5 1204.8,467.6"/><path class="cv" d="M1190.4 496.7L1197.7 463.6M1197.1 500.7L1204.8 467.6M1202.5 495.5L1210.4 462.5"/><path class="ch" d="M1195.9 491.5L1203.4 458.6"/>
<polygon class="cs" points="1033.1,479.9 1038.4,483.7 1038.1,450.9 1032.6,447.1"/><polygon class="ce" points="1038.4,483.7 1045.2,478.8 1045.3,446.1 1038.1,450.9"/><path class="cv" d="M1033.1 479.9L1032.6 447.1M1038.4 483.7L1038.1 450.9M1045.2 478.8L1045.3 446.1"/><path class="ch" d="M1040 475L1039.8 442.4"/>
<polygon class="cs" points="1105.9,501.1 1112,505.2 1115.5,472 1109.1,467.9"/><polygon class="ce" points="1112,505.2 1118.4,499.9 1122.1,466.8 1115.5,472"/><path class="cv" d="M1105.9 501.1L1109.1 467.9M1112 505.2L1115.5 472M1118.4 499.9L1122.1 466.8"/><path class="ch" d="M1112.3 495.8L1115.7 462.8"/>
<polygon class="cs" points="872.9,531 877.3,535.6 868.4,502 863.8,497.4"/><polygon class="ce" points="877.3,535.6 886.6,529.7 878.3,496.1 868.4,502"/><path class="cv" d="M872.9 531L863.8 497.4M877.3 535.6L868.4 502M886.6 529.7L878.3 496.1"/><path class="ch" d="M882.1 525.1L873.6 491.6"/>
<polygon class="cs" points="991.5,509.2 996.7,513.5 994.3,480.2 988.8,476"/><polygon class="ce" points="996.7,513.5 1004.4,508 1002.4,474.8 994.3,480.2"/><path class="cv" d="M991.5 509.2L988.8 476M996.7 513.5L994.3 480.2M1004.4 508L1002.4 474.8"/><path class="ch" d="M999.2 503.8L996.9 470.6"/>
<polygon class="cs" points="1152.1,532.6 1158.9,537.3 1165.1,503.7 1157.9,499.1"/><polygon class="ce" points="1158.9,537.3 1165.2,531.3 1171.6,497.7 1165.1,503.7"/><path class="cv" d="M1152.1 532.6L1157.9 499.1M1158.9 537.3L1165.1 503.7M1165.2 531.3L1171.6 497.7"/><path class="ch" d="M1158.4 526.7L1164.4 493.2"/>
<polygon class="cs" points="908.3,567.9 913.4,573.2 905.9,539.3 900.6,534.1"/><polygon class="ce" points="913.4,573.2 922.8,566.4 916,532.6 905.9,539.3"/><path class="cv" d="M908.3 567.9L900.6 534.1M913.4 573.2L905.9 539.3M922.8 566.4L916 532.6"/><path class="ch" d="M917.8 561.3L910.7 527.4"/>
<polygon class="cs" points="1043.8,552 1050,557 1050.3,523.2 1043.8,518.3"/><polygon class="ce" points="1050,557 1057.7,550.6 1058.4,516.9 1050.3,523.2"/><path class="cv" d="M1043.8 552L1043.8 518.3M1050 557L1050.3 523.2M1057.7 550.6L1058.4 516.9"/><path class="ch" d="M1051.5 545.7L1052 512"/>
<polygon class="cs" points="1090.7,590.3 1097.7,596 1100.9,562.1 1093.5,556.4"/><polygon class="ce" points="1097.7,596 1105.3,588.7 1108.9,554.8 1100.9,562.1"/><path class="cv" d="M1090.7 590.3L1093.5 556.4M1097.7 596L1100.9 562.1M1105.3 588.7L1108.9 554.8"/><path class="ch" d="M1098.3 583.1L1101.5 549.2"/>
<polygon class="cs" points="959.5,621.3 965.5,627.6 960.6,593.8 954.2,587.4"/><polygon class="ce" points="965.5,627.6 975.2,619.5 970.9,585.6 960.6,593.8"/><path class="cv" d="M959.5 621.3L954.2 587.4M965.5 627.6L960.6 593.8M975.2 619.5L970.9 585.6"/><path class="ch" d="M969.1 613.3L964.5 579.5"/>
<polygon class="cs" points="1006,669.8 1013,677.1 1010.9,643.9 1003.5,636.5"/><polygon class="ce" points="1013,677.1 1022.8,667.7 1021.4,634.4 1010.9,643.9"/><path class="cv" d="M1006 669.8L1003.5 636.5M1013 677.1L1010.9 643.9M1022.8 667.7L1021.4 634.4"/><path class="ch" d="M1015.8 660.6L1014 627.2"/>
<clipPath id="k1"><polygon points="1011.2,637.9 1205.8,462.5 1156.9,435.2 960.7,588"/><polygon points="960.7,588 1051.1,517.6 995.6,475.4 906.4,534.6"/><polygon points="1051.1,517.6 1115.6,467.4 1156.9,435.2 1102.3,404.6 1039,446.6 995.6,475.4"/><polygon points="906.4,534.6 995.6,475.4 956.4,445.5 868.8,497.4"/><polygon points="1039,446.6 1102.3,404.6 1062.8,382.5 999.4,420.1"/><polygon points="1017.7,460.7 1039,446.6 1021.6,434.9 1000.4,448.3"/></clipPath>
<linearGradient id="g1" gradientUnits="userSpaceOnUse" x1="996.6" y1="421.7" x2="1059.6" y2="594.3"><stop offset="0" stop-color="#b4b4ba"/><stop offset=".55" stop-color="#85858a"/><stop offset="1" stop-color="#6a6a70"/></linearGradient>
<g class="sl" fill="url(#g1)"><polygon points="1011.2,637.9 1205.8,462.5 1156.9,435.2 960.7,588"/><polygon points="960.7,588 1051.1,517.6 995.6,475.4 906.4,534.6"/><polygon points="1051.1,517.6 1115.6,467.4 1156.9,435.2 1102.3,404.6 1039,446.6 995.6,475.4"/><polygon points="906.4,534.6 995.6,475.4 956.4,445.5 868.8,497.4"/><polygon points="1039,446.6 1102.3,404.6 1062.8,382.5 999.4,420.1"/><polygon points="1017.7,460.7 1039,446.6 1021.6,434.9 1000.4,448.3"/></g>
<g class="cg" clip-path="url(#k1)"><polygon points="1013,677.1 1022.8,667.7 1021.4,634.4 1010.9,643.9"/><polygon points="1006,669.8 1013,677.1 1010.9,643.9 1003.5,636.5"/><polygon points="965.5,627.6 975.2,619.5 970.9,585.6 960.6,593.8"/><polygon points="959.5,621.3 965.5,627.6 960.6,593.8 954.2,587.4"/><polygon points="913.4,573.2 922.8,566.4 916,532.6 905.9,539.3"/><polygon points="908.3,567.9 913.4,573.2 905.9,539.3 900.6,534.1"/><polygon points="877.3,535.6 886.6,529.7 878.3,496.1 868.4,502"/><polygon points="872.9,531 877.3,535.6 868.4,502 863.8,497.4"/><polygon points="1097.7,596 1105.3,588.7 1108.9,554.8 1100.9,562.1"/><polygon points="1090.7,590.3 1097.7,596 1100.9,562.1 1093.5,556.4"/><polygon points="1050,557 1057.7,550.6 1058.4,516.9 1050.3,523.2"/><polygon points="1043.8,552 1050,557 1050.3,523.2 1043.8,518.3"/><polygon points="996.7,513.5 1004.4,508 1002.4,474.8 994.3,480.2"/><polygon points="991.5,509.2 996.7,513.5 994.3,480.2 988.8,476"/><polygon points="959.3,483 966.9,478.1 963.3,445.4 955.2,450.1"/><polygon points="954.7,479.2 959.3,483 955.2,450.1 950.4,446.4"/><polygon points="1197.1,500.7 1202.5,495.5 1210.4,462.5 1204.8,467.6"/><polygon points="1190.4,496.7 1197.1,500.7 1204.8,467.6 1197.7,463.6"/><polygon points="1151,472.6 1156.6,468 1161.9,435.5 1156.1,440.1"/><polygon points="1145.1,469 1151,472.6 1156.1,440.1 1149.8,436.5"/><polygon points="1098.5,440.6 1104.2,436.5 1106.9,404.9 1100.9,408.9"/><polygon points="1093.3,437.4 1098.5,440.6 1100.9,408.9 1095.5,405.8"/><polygon points="1060.9,417.7 1066.7,414 1067.6,383 1061.7,386.6"/><polygon points="1056.2,414.8 1060.9,417.7 1061.7,386.6 1056.7,383.8"/><polygon points="1158.9,537.3 1165.2,531.3 1171.6,497.7 1165.1,503.7"/><polygon points="1152.1,532.6 1158.9,537.3 1165.1,503.7 1157.9,499.1"/><polygon points="1112,505.2 1118.4,499.9 1122.1,466.8 1115.5,472"/><polygon points="1105.9,501.1 1112,505.2 1115.5,472 1109.1,467.9"/><polygon points="1038.4,483.7 1045.2,478.8 1045.3,446.1 1038.1,450.9"/><polygon points="1033.1,479.9 1038.4,483.7 1038.1,450.9 1032.6,447.1"/><polygon points="1000.7,456.4 1007.5,452 1005.9,419.9 998.8,424.2"/><polygon points="996,453 1000.7,456.4 998.8,424.2 993.9,420.8"/></g>
<path class="bh" d="M1062.6 385.4L1058.6 387.7M1062.6 385.4L1106.2 409.9M1062.6 385.4L1062.7 380.2"/><polygon class="bs" points="1058.6,387.7 1102.2,412.6 1102.6,407.2 1058.7,382.5"/><polygon class="bt" points="1106.6,404.6 1062.7,380.2 1058.7,382.5 1102.6,407.2"/>
<path class="bh" d="M1062.6 385.4L995.3 425.5M1062.6 385.4L1066.8 387.7M1062.6 385.4L1062.7 380.2"/><polygon class="bs" points="999.5,428.3 1066.8,387.7 1066.9,382.5 999.1,422.9"/><polygon class="bt" points="999.1,422.9 1066.9,382.5 1062.7,380.2 994.9,420.1"/>
<path class="bh" d="M1101.5 407.3L1097.6 409.9M1101.5 407.3L1160.7 440.7M1101.5 407.3L1101.9 402"/><polygon class="bs" points="1097.6,409.9 1156.8,443.7 1157.7,438.2 1098,404.6"/><polygon class="bt" points="1161.6,435.2 1101.9,402 1098,404.6 1157.7,438.2"/>
<path class="bh" d="M1101.5 407.3L1034.3 452.2M1101.5 407.3L1106.2 409.9M1101.5 407.3L1101.9 402"/><polygon class="bs" points="1039,455.4 1106.2,409.9 1106.6,404.6 1038.9,449.8"/><polygon class="bt" points="1038.9,449.8 1106.6,404.6 1101.9,402 1034.2,446.6"/>
<path class="bh" d="M1000 422.7L952.3 451.1M1000 422.7L1004.2 425.5M1000 422.7L999.7 417.3"/><polygon class="bs" points="956.5,454.3 1004.2,425.5 1003.9,420.1 955.8,448.7"/><polygon class="bt" points="955.8,448.7 1003.9,420.1 999.7,417.3 951.6,445.5"/>
<path class="bh" d="M1000 422.7L995.3 425.5M1000 422.7L1043.7 452.2M1000 422.7L999.7 417.3"/><polygon class="bs" points="995.3,425.5 1039,455.4 1038.9,449.8 994.9,420.1"/><polygon class="bt" points="1043.7,446.6 999.7,417.3 994.9,420.1 1038.9,449.8"/>
<path class="bh" d="M1155.3 437.7L1151.5 440.7M1155.3 437.7L1209.3 468.1M1155.3 437.7L1156.2 432.2"/><polygon class="bs" points="1151.5,440.7 1205.6,471.5 1206.9,465.9 1152.3,435.2"/><polygon class="bt" points="1210.7,462.5 1156.2,432.2 1152.3,435.2 1206.9,465.9"/>
<path class="bh" d="M974.7 437.8L969.7 440.8M974.7 437.8L990.2 449M974.7 437.8L974.2 432.3"/><polygon class="bs" points="969.7,440.8 985.1,452.1 984.7,446.6 969.1,435.3"/><polygon class="bt" points="989.8,443.4 974.2,432.3 969.1,435.3 984.7,446.6"/>
<path class="bh" d="M1011.3 430.3L963.5 459.7M1011.3 430.3L1015.6 433.2M1011.3 430.3L1011 424.8"/><polygon class="bs" points="967.7,463 1015.6,433.2 1015.4,427.7 967.1,457.4"/><polygon class="bt" points="967.1,457.4 1015.4,427.7 1011,424.8 962.8,454.1"/>
<path class="bh" d="M1155.3 437.7L1110.1 473M1155.3 437.7L1160.7 440.7M1155.3 437.7L1156.2 432.2"/><polygon class="bs" points="1115.5,476.5 1160.7,440.7 1161.6,435.2 1116.1,470.8"/><polygon class="bt" points="1116.1,470.8 1161.6,435.2 1156.2,432.2 1110.6,467.4"/>
<path class="bh" d="M1037.2 449.2L1034.6 453.4M1037.2 449.2L1119.3 471.7M1037.2 449.2L1037.2 443.7"/><polygon class="bs" points="1034.6,453.4 1117.4,476.2 1118,470.6 1034.6,447.8"/><polygon class="bt" points="1034.6,447.8 1118,470.6 1119.9,466 1037.2,443.7"/>
<path class="bh" d="M957.6 448L952.3 451.1M957.6 448L1001 481M957.6 448L957 442.4"/><polygon class="bs" points="952.3,451.1 995.7,484.6 995.3,479 951.6,445.5"/><polygon class="bt" points="1000.7,475.4 957,442.4 951.6,445.5 995.3,479"/>
<path class="bh" d="M957.6 448L865 503.1M957.6 448L961.8 451.1M957.6 448L957 442.4"/><polygon class="bs" points="869,507.1 961.8,451.1 961.1,445.5 867.4,501.3"/><polygon class="bt" points="867.4,501.3 961.1,445.5 957,442.4 863.5,497.4"/>
<path class="bh" d="M1039 449L991 481M1039 449L1043.7 452.2M1039 449L1039 443.4"/><polygon class="bs" points="995.7,484.6 1043.7,452.2 1043.7,446.6 995.3,479"/><polygon class="bt" points="995.3,479 1043.7,446.6 1039,443.4 990.6,475.4"/>
<path class="bh" d="M1203.4 464.7L1159.2 504.6M1203.4 464.7L1209.3 468.1M1203.4 464.7L1204.6 459.1"/><polygon class="bs" points="1165.3,508.5 1209.3,468.1 1210.7,462.5 1166.4,502.8"/><polygon class="bt" points="1166.4,502.8 1210.7,462.5 1204.6,459.1 1160.2,498.8"/>
<path class="bh" d="M1114.5 469.6L1110.1 473M1114.5 469.6L1169.6 504.6M1114.5 469.6L1115.1 463.9"/><polygon class="bs" points="1110.1,473 1165.3,508.5 1166.4,502.8 1110.6,467.4"/><polygon class="bt" points="1170.7,498.8 1115.1,463.9 1110.6,467.4 1166.4,502.8"/>
<path class="bh" d="M1114.5 469.6L1045.7 523.3M1114.5 469.6L1119.9 473M1114.5 469.6L1115.1 463.9"/><polygon class="bs" points="1051.1,527.6 1119.9,473 1120.6,467.4 1051.2,521.8"/><polygon class="bt" points="1051.2,521.8 1120.6,467.4 1115.1,463.9 1045.7,517.6"/>
<path class="bh" d="M871.6 499.3L865 503.1M871.6 499.3L913.3 540.3M871.6 499.3L870.1 493.5"/><polygon class="bs" points="865,503.1 906.6,544.9 905.3,539.1 863.5,497.4"/><polygon class="bt" points="912.1,534.5 870.1,493.5 863.5,497.4 905.3,539.1"/>
<path class="bh" d="M996.4 477.5L991 481M996.4 477.5L1056.5 523.3M996.4 477.5L996 471.8"/><polygon class="bs" points="991,481 1051.1,527.6 1051.2,521.8 990.6,475.4"/><polygon class="bt" points="1056.6,517.6 996,471.8 990.6,475.4 1051.2,521.8"/>
<path class="bh" d="M996.4 477.5L902.1 540.4M996.4 477.5L1001 481M996.4 477.5L996 471.8"/><polygon class="bs" points="906.6,544.9 1001,481 1000.7,475.4 905.3,539.1"/><polygon class="bt" points="905.3,539.1 1000.7,475.4 996,471.8 900.8,534.6"/>
<path class="bh" d="M1163.5 500.7L1095.5 562M1163.5 500.7L1169.6 504.6M1163.5 500.7L1164.5 494.9"/><polygon class="bs" points="1101.8,566.8 1169.6,504.6 1170.7,498.8 1102.4,561"/><polygon class="bt" points="1102.4,561 1170.7,498.8 1164.5,494.9 1096,556.1"/>
<path class="bh" d="M1051 519.1L1045.7 523.3M1051 519.1L1107.2 561.9M1051 519.1L1051.1 513.4"/><polygon class="bs" points="1045.7,523.3 1101.8,566.8 1102.4,561 1045.7,517.6"/><polygon class="bt" points="1107.8,556.1 1051.1,513.4 1045.7,517.6 1102.4,561"/>
<path class="bh" d="M908.8 535.9L902.1 540.4M908.8 535.9L967.6 593.8M908.8 535.9L907.5 530.1"/><polygon class="bs" points="902.1,540.4 960.8,599.3 959.9,593.5 900.8,534.6"/><polygon class="bt" points="966.9,588 907.5,530.1 900.8,534.6 959.9,593.5"/>
<path class="bh" d="M1051 519.1L955.4 593.9M1051 519.1L1056.5 523.3M1051 519.1L1051.1 513.4"/><polygon class="bs" points="960.8,599.3 1056.5,523.3 1056.6,517.6 959.9,593.5"/><polygon class="bt" points="959.9,593.5 1056.6,517.6 1051.1,513.4 954.5,588"/>
<path class="bh" d="M1100.9 557.1L1005 643.7M1100.9 557.1L1107.2 561.9M1100.9 557.1L1101.4 551.3"/><polygon class="bs" points="1011.3,650 1107.2,561.9 1107.8,556.1 1010.9,644.3"/><polygon class="bt" points="1010.9,644.3 1107.8,556.1 1101.4,551.3 1004.5,637.9"/>
<path class="bh" d="M962.2 588.5L955.4 593.9M962.2 588.5L1018.2 643.6M962.2 588.5L961.4 582.7"/><polygon class="bs" points="955.4,593.9 1011.3,650 1010.9,644.3 954.5,588"/><polygon class="bt" points="1017.9,637.9 961.4,582.7 954.5,588 1010.9,644.3"/>
<polygon class="cj" points="1056.6,389.1 1061.5,391.9 1061.7,386.6 1056.7,383.8"/><polygon class="cj" points="1061.5,391.9 1067.5,388.3 1067.6,383 1061.7,386.6"/><path class="cv" d="M1056.6 389.1L1056.7 383.8M1061.5 391.9L1061.7 386.6M1067.5 388.3L1067.6 383"/><path class="ch" d="M1062.6 385.5L1062.7 380.3"/><polygon class="cj" points="1095.1,411.1 1100.5,414.2 1100.9,408.9 1095.5,405.8"/><polygon class="cj" points="1100.5,414.2 1106.4,410.2 1106.9,404.9 1100.9,408.9"/><path class="cv" d="M1095.1 411.1L1095.5 405.8M1100.5 414.2L1100.9 408.9M1106.4 410.2L1106.9 404.9"/><path class="ch" d="M1101 407.2L1101.4 401.8"/><polygon class="cj" points="994.2,426.3 999.1,429.6 998.8,424.2 993.9,420.8"/><polygon class="cj" points="999.1,429.6 1006.2,425.3 1005.9,419.9 998.8,424.2"/><path class="cv" d="M994.2 426.3L993.9 420.8M999.1 429.6L998.8 424.2M1006.2 425.3L1005.9 419.9"/><path class="ch" d="M1001.3 422.1L1001 416.6"/><polygon class="cj" points="1149,442 1155.2,445.6 1156.1,440.1 1149.8,436.5"/><polygon class="cj" points="1155.2,445.6 1161,441 1161.9,435.5 1156.1,440.1"/><path class="cv" d="M1149 442L1149.8 436.5M1155.2 445.6L1156.1 440.1M1161 441L1161.9 435.5"/><path class="ch" d="M1154.8 437.5L1155.6 432"/><polygon class="cj" points="951.1,452 955.9,455.7 955.2,450.1 950.4,446.4"/><polygon class="cj" points="955.9,455.7 963.9,450.9 963.3,445.4 955.2,450.1"/><path class="cv" d="M951.1 452L950.4 446.4M955.9 455.7L955.2 450.1M963.9 450.9L963.3 445.4"/><path class="ch" d="M959.1 447.3L958.4 441.7"/><polygon class="cj" points="1196.4,469.2 1203.4,473.2 1204.8,467.6 1197.7,463.6"/><polygon class="cj" points="1203.4,473.2 1209.1,468.1 1210.4,462.5 1204.8,467.6"/><path class="cv" d="M1196.4 469.2L1197.7 463.6M1203.4 473.2L1204.8 467.6M1209.1 468.1L1210.4 462.5"/><path class="ch" d="M1202.1 464.2L1203.4 458.6"/><polygon class="cj" points="1032.7,452.7 1038.2,456.4 1038.1,450.9 1032.6,447.1"/><polygon class="cj" points="1038.2,456.4 1045.3,451.6 1045.3,446.1 1038.1,450.9"/><path class="cv" d="M1032.7 452.7L1032.6 447.1M1038.2 456.4L1038.1 450.9M1045.3 451.6L1045.3 446.1"/><path class="ch" d="M1039.8 448L1039.8 442.4"/><polygon class="cj" points="1108.5,473.6 1114.9,477.7 1115.5,472 1109.1,467.9"/><polygon class="cj" points="1114.9,477.7 1121.5,472.4 1122.1,466.8 1115.5,472"/><path class="cv" d="M1108.5 473.6L1109.1 467.9M1114.9 477.7L1115.5 472M1121.5 472.4L1122.1 466.8"/><path class="ch" d="M1115.2 468.4L1115.7 462.8"/><polygon class="cj" points="865.3,503.1 869.9,507.7 868.4,502 863.8,497.4"/><polygon class="cj" points="869.9,507.7 879.7,501.8 878.3,496.1 868.4,502"/><path class="cv" d="M865.3 503.1L863.8 497.4M869.9 507.7L868.4 502M879.7 501.8L878.3 496.1"/><path class="ch" d="M875.1 497.3L873.6 491.6"/><polygon class="cj" points="989.3,481.6 994.7,485.9 994.3,480.2 988.8,476"/><polygon class="cj" points="994.7,485.9 1002.7,480.4 1002.4,474.8 994.3,480.2"/><path class="cv" d="M989.3 481.6L988.8 476M994.7 485.9L994.3 480.2M1002.7 480.4L1002.4 474.8"/><path class="ch" d="M997.3 476.3L996.9 470.6"/><polygon class="cj" points="1156.9,504.8 1164.1,509.4 1165.1,503.7 1157.9,499.1"/><polygon class="cj" points="1164.1,509.4 1170.5,503.5 1171.6,497.7 1165.1,503.7"/><path class="cv" d="M1156.9 504.8L1157.9 499.1M1164.1 509.4L1165.1 503.7M1170.5 503.5L1171.6 497.7"/><path class="ch" d="M1163.4 498.9L1164.4 493.2"/><polygon class="cj" points="901.9,539.9 907.2,545.1 905.9,539.3 900.6,534.1"/><polygon class="cj" points="907.2,545.1 917.2,538.3 916,532.6 905.9,539.3"/><path class="cv" d="M901.9 539.9L900.6 534.1M907.2 545.1L905.9 539.3M917.2 538.3L916 532.6"/><path class="ch" d="M911.9 533.2L910.7 527.4"/><polygon class="cj" points="1043.8,524 1050.2,529 1050.3,523.2 1043.8,518.3"/><polygon class="cj" points="1050.2,529 1058.3,522.6 1058.4,516.9 1050.3,523.2"/><path class="cv" d="M1043.8 524L1043.8 518.3M1050.2 529L1050.3 523.2M1058.3 522.6L1058.4 516.9"/><path class="ch" d="M1051.9 517.8L1052 512"/><polygon class="cj" points="1093,562.2 1100.3,567.9 1100.9,562.1 1093.5,556.4"/><polygon class="cj" points="1100.3,567.9 1108.3,560.6 1108.9,554.8 1100.9,562.1"/><path class="cv" d="M1093 562.2L1093.5 556.4M1100.3 567.9L1100.9 562.1M1108.3 560.6L1108.9 554.8"/><path class="ch" d="M1101 555L1101.5 549.2"/><polygon class="cj" points="955.1,593.3 961.4,599.6 960.6,593.8 954.2,587.4"/><polygon class="cj" points="961.4,599.6 971.7,591.5 970.9,585.6 960.6,593.8"/><path class="cv" d="M955.1 593.3L954.2 587.4M961.4 599.6L960.6 593.8M971.7 591.5L970.9 585.6"/><path class="ch" d="M965.3 585.3L964.5 579.5"/><polygon class="cj" points="1003.9,642.3 1011.3,649.7 1010.9,643.9 1003.5,636.5"/><polygon class="cj" points="1011.3,649.7 1021.7,640.2 1021.4,634.4 1010.9,643.9"/><path class="cv" d="M1003.9 642.3L1003.5 636.5M1011.3 649.7L1010.9 643.9M1021.7 640.2L1021.4 634.4"/><path class="ch" d="M1014.3 633L1014 627.2"/>
<polygon class="cs" points="1056.7,383.8 1061.7,386.6 1062.4,352.8 1057.3,350.2"/><polygon class="ce" points="1061.7,386.6 1067.6,383 1068.7,349.4 1062.4,352.8"/><path class="cv" d="M1056.7 383.8L1057.3 350.2M1061.7 386.6L1062.4 352.8M1067.6 383L1068.7 349.4"/><path class="ch" d="M1062.7 380.3L1063.5 346.8"/>
<polygon class="cs" points="1095.5,405.8 1100.9,408.9 1103.6,374.2 1097.8,371.2"/><polygon class="ce" points="1100.9,408.9 1106.9,404.9 1109.8,370.3 1103.6,374.2"/><path class="cv" d="M1095.5 405.8L1097.8 371.2M1100.9 408.9L1103.6 374.2M1106.9 404.9L1109.8 370.3"/><path class="ch" d="M1101.4 401.8L1104 367.4"/>
<polygon class="cs" points="993.9,420.8 998.8,424.2 996.6,388.9 991.5,385.7"/><polygon class="ce" points="998.8,424.2 1005.9,419.9 1004.1,384.8 996.6,388.9"/><path class="cv" d="M993.9 420.8L991.5 385.7M998.8 424.2L996.6 388.9M1005.9 419.9L1004.1 384.8"/><path class="ch" d="M1001 416.6L999 381.6"/>
<polygon class="cs" points="1149.8,436.5 1156.1,440.1 1161.7,404.3 1155,400.8"/><polygon class="ce" points="1156.1,440.1 1161.9,435.5 1167.7,399.8 1161.7,404.3"/><path class="cv" d="M1149.8 436.5L1155 400.8M1156.1 440.1L1161.7 404.3M1161.9 435.5L1167.7 399.8"/><path class="ch" d="M1155.6 432L1161.1 396.5"/>
<polygon class="cs" points="950.4,446.4 955.2,450.1 950.8,414 945.7,410.4"/><polygon class="ce" points="955.2,450.1 963.3,445.4 959.2,409.4 950.8,414"/><path class="cv" d="M950.4 446.4L945.7 410.4M955.2 450.1L950.8 414M963.3 445.4L959.2 409.4"/><path class="ch" d="M958.4 441.7L954.2 405.8"/>
<polygon class="cs" points="1197.7,463.6 1204.8,467.6 1213.2,431 1205.7,427.1"/><polygon class="ce" points="1204.8,467.6 1210.4,462.5 1219.1,426 1213.2,431"/><path class="cv" d="M1197.7 463.6L1205.7 427.1M1204.8 467.6L1213.2 431M1210.4 462.5L1219.1 426"/><path class="ch" d="M1203.4 458.6L1211.6 422.2"/>
<polygon class="cs" points="1032.6,447.1 1038.1,450.9 1037.9,414.7 1032.1,411.1"/><polygon class="ce" points="1038.1,450.9 1045.3,446.1 1045.4,410.1 1037.9,414.7"/><path class="cv" d="M1032.6 447.1L1032.1 411.1M1038.1 450.9L1037.9 414.7M1045.3 446.1L1045.4 410.1"/><path class="ch" d="M1039.8 442.4L1039.6 406.5"/>
<polygon class="cs" points="1109.1,467.9 1115.5,472 1119.3,435.3 1112.5,431.3"/><polygon class="ce" points="1115.5,472 1122.1,466.8 1126.2,430.2 1119.3,435.3"/><path class="cv" d="M1109.1 467.9L1112.5 431.3M1115.5 472L1119.3 435.3M1122.1 466.8L1126.2 430.2"/><path class="ch" d="M1115.7 462.8L1119.5 426.3"/>
<polygon class="cs" points="863.8,497.4 868.4,502 858.5,464.6 853.7,460.1"/><polygon class="ce" points="868.4,502 878.3,496.1 869,458.8 858.5,464.6"/><path class="cv" d="M863.8 497.4L853.7 460.1M868.4 502L858.5 464.6M878.3 496.1L869 458.8"/><path class="ch" d="M873.6 491.6L864.2 454.4"/>
<polygon class="cs" points="988.8,476 994.3,480.2 991.6,443.2 985.9,439.1"/><polygon class="ce" points="994.3,480.2 1002.4,474.8 1000.2,437.9 991.6,443.2"/><path class="cv" d="M988.8 476L985.9 439.1M994.3 480.2L991.6 443.2M1002.4 474.8L1000.2 437.9"/><path class="ch" d="M996.9 470.6L994.4 433.9"/>
<polygon class="cs" points="1157.9,499.1 1165.1,503.7 1172,466.2 1164.3,461.7"/><polygon class="ce" points="1165.1,503.7 1171.6,497.7 1178.8,460.4 1172,466.2"/><path class="cv" d="M1157.9 499.1L1164.3 461.7M1165.1 503.7L1172 466.2M1171.6 497.7L1178.8 460.4"/><path class="ch" d="M1164.4 493.2L1171.1 456"/>
<polygon class="cs" points="900.6,534.1 905.9,539.3 897.5,501.3 892,496.1"/><polygon class="ce" points="905.9,539.3 916,532.6 908.3,494.6 897.5,501.3"/><path class="cv" d="M900.6 534.1L892 496.1M905.9 539.3L897.5 501.3M916 532.6L908.3 494.6"/><path class="ch" d="M910.7 527.4L902.7 489.5"/>
<polygon class="cs" points="1043.8,518.3 1050.3,523.2 1050.7,485.4 1043.9,480.6"/><polygon class="ce" points="1050.3,523.2 1058.4,516.9 1059.3,479.2 1050.7,485.4"/><path class="cv" d="M1043.8 518.3L1043.9 480.6M1050.3 523.2L1050.7 485.4M1058.4 516.9L1059.3 479.2"/><path class="ch" d="M1052 512L1052.4 474.4"/>
<polygon class="cs" points="1093.5,556.4 1100.9,562.1 1104.5,523.9 1096.6,518.2"/><polygon class="ce" points="1100.9,562.1 1108.9,554.8 1113,516.6 1104.5,523.9"/><path class="cv" d="M1093.5 556.4L1096.6 518.2M1100.9 562.1L1104.5 523.9M1108.9 554.8L1113 516.6"/><path class="ch" d="M1101.5 549.2L1105.1 511.1"/>
<polygon class="cs" points="954.2,587.4 960.6,593.8 955,555.5 948.2,549.1"/><polygon class="ce" points="960.6,593.8 970.9,585.6 966.1,547.3 955,555.5"/><path class="cv" d="M954.2 587.4L948.2 549.1M960.6 593.8L955 555.5M970.9 585.6L966.1 547.3"/><path class="ch" d="M964.5 579.5L959.4 541.2"/>
<polygon class="cs" points="1003.5,636.5 1010.9,643.9 1008.5,605.9 1000.6,598.4"/><polygon class="ce" points="1010.9,643.9 1021.4,634.4 1019.8,596.3 1008.5,605.9"/><path class="cv" d="M1003.5 636.5L1000.6 598.4M1010.9 643.9L1008.5 605.9M1021.4 634.4L1019.8 596.3"/><path class="ch" d="M1014 627.2L1011.8 589"/>
<clipPath id="k2"><polygon points="1008.9,599.8 1214.2,426 1162.5,399.5 955.1,549.7"/><polygon points="955.1,549.7 1051.6,479.9 993,438.5 898.1,496.6"/><polygon points="1051.6,479.9 1119.4,430.8 1162.5,399.5 1104.9,370.1 1038.7,410.6 993,438.5"/><polygon points="898.1,496.6 993,438.5 952,409.5 858.9,460.1"/><polygon points="1038.7,410.6 1104.9,370.1 1063.7,348.9 997.3,384.9"/><polygon points="1016.4,424.3 1038.7,410.6 1020.5,399.3 998.2,412.3"/></clipPath>
<linearGradient id="g2" gradientUnits="userSpaceOnUse" x1="994.4" y1="386.5" x2="1060.7" y2="556"><stop offset="0" stop-color="#b4b4ba"/><stop offset=".55" stop-color="#85858a"/><stop offset="1" stop-color="#6a6a70"/></linearGradient>
<g class="sl" fill="url(#g2)"><polygon points="1008.9,599.8 1214.2,426 1162.5,399.5 955.1,549.7"/><polygon points="955.1,549.7 1051.6,479.9 993,438.5 898.1,496.6"/><polygon points="1051.6,479.9 1119.4,430.8 1162.5,399.5 1104.9,370.1 1038.7,410.6 993,438.5"/><polygon points="898.1,496.6 993,438.5 952,409.5 858.9,460.1"/><polygon points="1038.7,410.6 1104.9,370.1 1063.7,348.9 997.3,384.9"/><polygon points="1016.4,424.3 1038.7,410.6 1020.5,399.3 998.2,412.3"/></g>
<g class="cg" clip-path="url(#k2)"><polygon points="1010.9,643.9 1021.4,634.4 1019.8,596.3 1008.5,605.9"/><polygon points="1003.5,636.5 1010.9,643.9 1008.5,605.9 1000.6,598.4"/><polygon points="960.6,593.8 970.9,585.6 966.1,547.3 955,555.5"/><polygon points="954.2,587.4 960.6,593.8 955,555.5 948.2,549.1"/><polygon points="905.9,539.3 916,532.6 908.3,494.6 897.5,501.3"/><polygon points="900.6,534.1 905.9,539.3 897.5,501.3 892,496.1"/><polygon points="868.4,502 878.3,496.1 869,458.8 858.5,464.6"/><polygon points="863.8,497.4 868.4,502 858.5,464.6 853.7,460.1"/><polygon points="1100.9,562.1 1108.9,554.8 1113,516.6 1104.5,523.9"/><polygon points="1093.5,556.4 1100.9,562.1 1104.5,523.9 1096.6,518.2"/><polygon points="1050.3,523.2 1058.4,516.9 1059.3,479.2 1050.7,485.4"/><polygon points="1043.8,518.3 1050.3,523.2 1050.7,485.4 1043.9,480.6"/><polygon points="994.3,480.2 1002.4,474.8 1000.2,437.9 991.6,443.2"/><polygon points="988.8,476 994.3,480.2 991.6,443.2 985.9,439.1"/><polygon points="955.2,450.1 963.3,445.4 959.2,409.4 950.8,414"/><polygon points="950.4,446.4 955.2,450.1 950.8,414 945.7,410.4"/><polygon points="1204.8,467.6 1210.4,462.5 1219.1,426 1213.2,431"/><polygon points="1197.7,463.6 1204.8,467.6 1213.2,431 1205.7,427.1"/><polygon points="1156.1,440.1 1161.9,435.5 1167.7,399.8 1161.7,404.3"/><polygon points="1149.8,436.5 1156.1,440.1 1161.7,404.3 1155,400.8"/><polygon points="1100.9,408.9 1106.9,404.9 1109.8,370.3 1103.6,374.2"/><polygon points="1095.5,405.8 1100.9,408.9 1103.6,374.2 1097.8,371.2"/><polygon points="1061.7,386.6 1067.6,383 1068.7,349.4 1062.4,352.8"/><polygon points="1056.7,383.8 1061.7,386.6 1062.4,352.8 1057.3,350.2"/><polygon points="1165.1,503.7 1171.6,497.7 1178.8,460.4 1172,466.2"/><polygon points="1157.9,499.1 1165.1,503.7 1172,466.2 1164.3,461.7"/><polygon points="1115.5,472 1122.1,466.8 1126.2,430.2 1119.3,435.3"/><polygon points="1109.1,467.9 1115.5,472 1119.3,435.3 1112.5,431.3"/><polygon points="1038.1,450.9 1045.3,446.1 1045.4,410.1 1037.9,414.7"/><polygon points="1032.6,447.1 1038.1,450.9 1037.9,414.7 1032.1,411.1"/><polygon points="998.8,424.2 1005.9,419.9 1004.1,384.8 996.6,388.9"/><polygon points="993.9,420.8 998.8,424.2 996.6,388.9 991.5,385.7"/></g>
<path class="bh" d="M1063.4 352.4L1059.3 354.6M1063.4 352.4L1109 375.9M1063.4 352.4L1063.5 346.7"/><polygon class="bt" points="1109.5,370.1 1063.5,346.7 1059.4,348.9 1105.3,372.6"/><polygon class="bs" points="1059.3,354.6 1104.9,378.5 1105.3,372.6 1059.4,348.9"/>
<path class="bh" d="M1063.4 352.4L993 390.9M1063.4 352.4L1067.8 354.6M1063.4 352.4L1063.5 346.7"/><polygon class="bs" points="997.4,393.6 1067.8,354.6 1067.9,348.9 997,387.7"/><polygon class="bt" points="997,387.7 1067.9,348.9 1063.5,346.7 992.6,384.9"/>
<path class="bh" d="M1104.1 373.4L1100 375.9M1104.1 373.4L1166.4 405.6M1104.1 373.4L1104.5 367.6"/><polygon class="bt" points="1167.3,399.5 1104.5,367.6 1100.4,370.1 1163.3,402.5"/><polygon class="bs" points="1100,375.9 1162.4,408.5 1163.3,402.5 1100.4,370.1"/>
<path class="bh" d="M1104.1 373.4L1033.8 416.7M1104.1 373.4L1109 375.9M1104.1 373.4L1104.5 367.6"/><polygon class="bs" points="1038.7,419.8 1109,375.9 1109.5,370.1 1038.7,413.7"/><polygon class="bt" points="1038.7,413.7 1109.5,370.1 1104.5,367.6 1033.7,410.6"/>
<path class="bh" d="M998 388.2L947.8 415.7M998 388.2L1002.3 390.9M998 388.2L997.6 382.2"/><polygon class="bs" points="952.1,418.8 1002.3,390.9 1002,384.9 951.3,412.6"/><polygon class="bt" points="951.3,412.6 1002,384.9 997.6,382.2 947,409.5"/>
<path class="bh" d="M998 388.2L993 390.9M998 388.2L1043.7 416.7M998 388.2L997.6 382.2"/><polygon class="bs" points="993,390.9 1038.7,419.8 1038.7,413.7 992.6,384.9"/><polygon class="bt" points="1043.7,410.6 997.6,382.2 992.6,384.9 1038.7,413.7"/>
<path class="bh" d="M1160.7 402.7L1156.7 405.6M1160.7 402.7L1217.9 432.2M1160.7 402.7L1161.7 396.6"/><polygon class="bt" points="1219.4,426 1161.7,396.6 1157.6,399.5 1215.5,429.3"/><polygon class="bs" points="1156.7,405.6 1214,435.6 1215.5,429.3 1157.6,399.5"/>
<path class="bh" d="M971.4 402.7L966.1 405.7M971.4 402.7L987.6 413.6M971.4 402.7L970.8 396.7"/><polygon class="bs" points="966.1,405.7 982.2,416.7 981.7,410.6 965.5,399.6"/><polygon class="bt" points="987.1,407.5 970.8,396.7 965.5,399.6 981.7,410.6"/>
<path class="bh" d="M1009.7 395.5L959.4 424M1009.7 395.5L1014.2 398.3M1009.7 395.5L1009.5 389.5"/><polygon class="bs" points="963.8,427.2 1014.2,398.3 1014,392.3 963.2,421"/><polygon class="bt" points="963.2,421 1014,392.3 1009.5,389.5 958.7,417.8"/>
<path class="bh" d="M1160.7 402.7L1113.6 437M1160.7 402.7L1166.4 405.6M1160.7 402.7L1161.7 396.6"/><polygon class="bs" points="1119.3,440.4 1166.4,405.6 1167.3,399.5 1120,434.1"/><polygon class="bt" points="1120,434.1 1167.3,399.5 1161.7,396.6 1114.2,430.8"/>
<path class="bh" d="M1036.9 413.9L1034.2 417.9M1036.9 413.9L1123.3 435.7M1036.9 413.9L1036.8 407.8"/><polygon class="bt" points="1034.1,411.8 1122,433.9 1123.9,429.4 1036.8,407.8"/><polygon class="bs" points="1034.2,417.9 1121.3,440.1 1122,433.9 1034.1,411.8"/>
<path class="bh" d="M953.4 412.6L947.8 415.7M953.4 412.6L998.8 444.8M953.4 412.6L952.6 406.5"/><polygon class="bs" points="947.8,415.7 993.1,448.3 992.7,442 947,409.5"/><polygon class="bt" points="998.4,438.5 952.6,406.5 947,409.5 992.7,442"/>
<path class="bh" d="M953.4 412.6L855.1 466.4M953.4 412.6L957.7 415.7M953.4 412.6L952.6 406.5"/><polygon class="bs" points="859.2,470.3 957.7,415.7 957,409.5 857.5,463.9"/><polygon class="bt" points="857.5,463.9 957,409.5 952.6,406.5 853.4,460.1"/>
<path class="bh" d="M1038.8 413.6L988.2 444.8M1038.8 413.6L1043.7 416.7M1038.8 413.6L1038.8 407.5"/><polygon class="bs" points="993.1,448.3 1043.7,416.7 1043.7,410.6 992.7,442"/><polygon class="bt" points="992.7,442 1043.7,410.6 1038.8,407.5 987.7,438.5"/>
<path class="bh" d="M1211.5 428.9L1165.6 467.9M1211.5 428.9L1217.9 432.2M1211.5 428.9L1212.9 422.7"/><polygon class="bs" points="1172.1,471.8 1217.9,432.2 1219.4,426 1173.3,465.4"/><polygon class="bt" points="1173.3,465.4 1219.4,426 1212.9,422.7 1166.7,461.5"/>
<path class="bh" d="M1118.2 433.6L1113.6 437M1118.2 433.6L1176.6 467.9M1118.2 433.6L1118.8 427.4"/><polygon class="bs" points="1113.6,437 1172.1,471.8 1173.3,465.4 1114.2,430.8"/><polygon class="bt" points="1177.9,461.5 1118.8,427.4 1114.2,430.8 1173.3,465.4"/>
<path class="bh" d="M1118.2 433.6L1045.8 486.3M1118.2 433.6L1123.9 437M1118.2 433.6L1118.8 427.4"/><polygon class="bs" points="1051.6,490.5 1123.9,437 1124.6,430.7 1051.7,484"/><polygon class="bt" points="1051.7,484 1124.6,430.7 1118.8,427.4 1045.8,479.9"/>
<path class="bh" d="M862.1 462.6L855.1 466.4M862.1 462.6L905.5 503.1M862.1 462.6L860.4 456.3"/><polygon class="bs" points="855.1,466.4 898.3,507.6 896.9,501.1 853.4,460.1"/><polygon class="bt" points="904.1,496.6 860.4,456.3 853.4,460.1 896.9,501.1"/>
<path class="bh" d="M993.9 441.3L988.2 444.8M993.9 441.3L1057.2 486.3M993.9 441.3L993.4 435.1"/><polygon class="bs" points="988.2,444.8 1051.6,490.5 1051.7,484 987.7,438.5"/><polygon class="bt" points="1057.4,479.9 993.4,435.1 987.7,438.5 1051.7,484"/>
<path class="bh" d="M993.9 441.3L893.6 503.1M993.9 441.3L998.8 444.8M993.9 441.3L993.4 435.1"/><polygon class="bs" points="898.3,507.6 998.8,444.8 998.4,438.5 896.9,501.1"/><polygon class="bt" points="896.9,501.1 998.4,438.5 993.4,435.1 892.1,496.6"/>
<path class="bh" d="M1170.1 464L1098.8 524.5M1170.1 464L1176.6 467.9M1170.1 464L1171.3 457.7"/><polygon class="bs" points="1105.5,529.4 1176.6,467.9 1177.9,461.5 1106.1,522.8"/><polygon class="bt" points="1106.1,522.8 1177.9,461.5 1171.3,457.7 1099.3,518"/>
<path class="bh" d="M1051.4 482.2L1045.8 486.3M1051.4 482.2L1111.1 524.5M1051.4 482.2L1051.5 475.7"/><polygon class="bs" points="1045.8,486.3 1105.5,529.4 1106.1,522.8 1045.8,479.9"/><polygon class="bt" points="1111.8,518 1051.5,475.7 1045.8,479.9 1106.1,522.8"/>
<path class="bh" d="M900.8 498.7L893.6 503.1M900.8 498.7L962.6 556.3M900.8 498.7L899.4 492.2"/><polygon class="bs" points="893.6,503.1 955.3,561.8 954.3,555.2 892.1,496.6"/><polygon class="bt" points="961.7,549.7 899.4,492.2 892.1,496.6 954.3,555.2"/>
<path class="bh" d="M1051.4 482.2L949.5 556.3M1051.4 482.2L1057.2 486.3M1051.4 482.2L1051.5 475.7"/><polygon class="bs" points="955.3,561.8 1057.2,486.3 1057.4,479.9 954.3,555.2"/><polygon class="bt" points="954.3,555.2 1057.4,479.9 1051.5,475.7 948.5,549.7"/>
<path class="bh" d="M1104.4 519.8L1002.2 606.4M1104.4 519.8L1111.1 524.5M1104.4 519.8L1105 513.2"/><polygon class="bs" points="1008.9,612.9 1111.1,524.5 1111.8,518 1008.5,606.3"/><polygon class="bt" points="1008.5,606.3 1111.8,518 1105,513.2 1001.7,599.8"/>
<path class="bh" d="M956.9 551L949.5 556.3M956.9 551L1016.4 606.4M956.9 551L956 544.4"/><polygon class="bs" points="949.5,556.3 1008.9,612.9 1008.5,606.3 948.5,549.7"/><polygon class="bt" points="1016.1,599.8 956,544.4 948.5,549.7 1008.5,606.3"/>
<polygon class="cj" points="1057.2,355.9 1062.3,358.6 1062.4,352.8 1057.3,350.2"/><polygon class="cj" points="1062.3,358.6 1068.5,355.1 1068.7,349.4 1062.4,352.8"/><path class="cv" d="M1057.2 355.9L1057.3 350.2M1062.3 358.6L1062.4 352.8M1068.5 355.1L1068.7 349.4"/><path class="ch" d="M1063.4 352.5L1063.5 346.8"/><polygon class="cj" points="1097.4,377.1 1103.1,380 1103.6,374.2 1097.8,371.2"/><polygon class="cj" points="1103.1,380 1109.3,376.2 1109.8,370.3 1103.6,374.2"/><path class="cv" d="M1097.4 377.1L1097.8 371.2M1103.1 380L1103.6 374.2M1109.3 376.2L1109.8 370.3"/><path class="ch" d="M1103.6 373.3L1104 367.4"/><polygon class="cj" points="991.9,391.7 997,394.9 996.6,388.9 991.5,385.7"/><polygon class="cj" points="997,394.9 1004.4,390.7 1004.1,384.8 996.6,388.9"/><path class="cv" d="M991.9 391.7L991.5 385.7M997 394.9L996.6 388.9M1004.4 390.7L1004.1 384.8"/><path class="ch" d="M999.3 387.6L999 381.6"/><polygon class="cj" points="1154.1,406.9 1160.7,410.4 1161.7,404.3 1155,400.8"/><polygon class="cj" points="1160.7,410.4 1166.7,405.9 1167.7,399.8 1161.7,404.3"/><path class="cv" d="M1154.1 406.9L1155 400.8M1160.7 410.4L1161.7 404.3M1166.7 405.9L1167.7 399.8"/><path class="ch" d="M1160.2 402.5L1161.1 396.5"/><polygon class="cj" points="946.5,416.5 951.5,420.2 950.8,414 945.7,410.4"/><polygon class="cj" points="951.5,420.2 959.9,415.5 959.2,409.4 950.8,414"/><path class="cv" d="M946.5 416.5L945.7 410.4M951.5 420.2L950.8 414M959.9 415.5L959.2 409.4"/><path class="ch" d="M954.9 411.9L954.2 405.8"/><polygon class="cj" points="1204.4,433.3 1211.8,437.2 1213.2,431 1205.7,427.1"/><polygon class="cj" points="1211.8,437.2 1217.6,432.2 1219.1,426 1213.2,431"/><path class="cv" d="M1204.4 433.3L1205.7 427.1M1211.8 437.2L1213.2 431M1217.6 432.2L1219.1 426"/><path class="ch" d="M1210.2 428.4L1211.6 422.2"/><polygon class="cj" points="1032.2,417.2 1037.9,420.9 1037.9,414.7 1032.1,411.1"/><polygon class="cj" points="1037.9,420.9 1045.4,416.2 1045.4,410.1 1037.9,414.7"/><path class="cv" d="M1032.2 417.2L1032.1 411.1M1037.9 420.9L1037.9 414.7M1045.4 416.2L1045.4 410.1"/><path class="ch" d="M1039.6 412.6L1039.6 406.5"/><polygon class="cj" points="1111.9,437.6 1118.6,441.6 1119.3,435.3 1112.5,431.3"/><polygon class="cj" points="1118.6,441.6 1125.5,436.4 1126.2,430.2 1119.3,435.3"/><path class="cv" d="M1111.9 437.6L1112.5 431.3M1118.6 441.6L1119.3 435.3M1125.5 436.4L1126.2 430.2"/><path class="ch" d="M1118.8 432.5L1119.5 426.3"/><polygon class="cj" points="855.4,466.4 860.2,471 858.5,464.6 853.7,460.1"/><polygon class="cj" points="860.2,471 870.6,465.2 869,458.8 858.5,464.6"/><path class="cv" d="M855.4 466.4L853.7 460.1M860.2 471L858.5 464.6M870.6 465.2L869 458.8"/><path class="ch" d="M865.8 460.7L864.2 454.4"/><polygon class="cj" points="986.4,445.4 992.1,449.5 991.6,443.2 985.9,439.1"/><polygon class="cj" points="992.1,449.5 1000.6,444.2 1000.2,437.9 991.6,443.2"/><path class="cv" d="M986.4 445.4L985.9 439.1M992.1 449.5L991.6 443.2M1000.6 444.2L1000.2 437.9"/><path class="ch" d="M994.9 440.2L994.4 433.9"/><polygon class="cj" points="1163.2,468.1 1170.8,472.6 1172,466.2 1164.3,461.7"/><polygon class="cj" points="1170.8,472.6 1177.6,466.8 1178.8,460.4 1172,466.2"/><path class="cv" d="M1163.2 468.1L1164.3 461.7M1170.8 472.6L1172 466.2M1177.6 466.8L1178.8 460.4"/><path class="ch" d="M1170 462.4L1171.1 456"/><polygon class="cj" points="893.4,502.6 898.9,507.8 897.5,501.3 892,496.1"/><polygon class="cj" points="898.9,507.8 909.6,501.1 908.3,494.6 897.5,501.3"/><path class="cv" d="M893.4 502.6L892 496.1M898.9 507.8L897.5 501.3M909.6 501.1L908.3 494.6"/><path class="ch" d="M904.1 496L902.7 489.5"/><polygon class="cj" points="1043.9,487 1050.6,491.9 1050.7,485.4 1043.9,480.6"/><polygon class="cj" points="1050.6,491.9 1059.1,485.6 1059.3,479.2 1050.7,485.4"/><path class="cv" d="M1043.9 487L1043.9 480.6M1050.6 491.9L1050.7 485.4M1059.1 485.6L1059.3 479.2"/><path class="ch" d="M1052.4 480.8L1052.4 474.4"/><polygon class="cj" points="1096.1,524.8 1103.9,530.5 1104.5,523.9 1096.6,518.2"/><polygon class="cj" points="1103.9,530.5 1112.3,523.2 1113,516.6 1104.5,523.9"/><path class="cv" d="M1096.1 524.8L1096.6 518.2M1103.9 530.5L1104.5 523.9M1112.3 523.2L1113 516.6"/><path class="ch" d="M1104.5 517.7L1105.1 511.1"/><polygon class="cj" points="949.3,555.7 955.9,562.1 955,555.5 948.2,549.1"/><polygon class="cj" points="955.9,562.1 966.9,553.9 966.1,547.3 955,555.5"/><path class="cv" d="M949.3 555.7L948.2 549.1M955.9 562.1L955 555.5M966.9 553.9L966.1 547.3"/><path class="ch" d="M960.2 547.8L959.4 541.2"/><polygon class="cj" points="1001.1,605 1009,612.5 1008.5,605.9 1000.6,598.4"/><polygon class="cj" points="1009,612.5 1020.1,602.9 1019.8,596.3 1008.5,605.9"/><path class="cv" d="M1001.1 605L1000.6 598.4M1009 612.5L1008.5 605.9M1020.1 602.9L1019.8 596.3"/><path class="ch" d="M1012.2 595.6L1011.8 589"/>
<polygon class="cs" points="1058.2,349.7 1062.4,351.8 1063.2,315 1058.9,313"/><polygon class="ce" points="1062.4,351.8 1067.7,348.9 1068.8,312.3 1063.2,315"/><path class="cv" d="M1058.2 349.7L1058.9 313M1062.4 351.8L1063.2 315M1067.7 348.9L1068.8 312.3"/><path class="ch" d="M1063.5 346.8L1064.4 310.3"/>
<polygon class="cs" points="1099.3,370.9 1103.9,373.3 1106.8,335.3 1102,333.1"/><polygon class="ce" points="1103.9,373.3 1109.2,370.1 1112.3,332.3 1106.8,335.3"/><path class="cv" d="M1099.3 370.9L1102 333.1M1103.9 373.3L1106.8 335.3M1109.2 370.1L1112.3 332.3"/><path class="ch" d="M1104.6 367.7L1107.5 330"/>
<polygon class="cs" points="992.1,385.4 996.2,388 993.8,349.2 989.5,346.8"/><polygon class="ce" points="996.2,388 1002.6,384.5 1000.5,345.9 993.8,349.2"/><path class="cv" d="M992.1 385.4L989.5 346.8M996.2 388L993.8 349.2M1002.6 384.5L1000.5 345.9"/><path class="ch" d="M998.4 381.9L996.2 343.5"/>
<polygon class="cs" points="1156.5,400.5 1161.9,403.3 1168.1,363.8 1162.4,361.2"/><polygon class="ce" points="1161.9,403.3 1167.1,399.5 1173.4,360.2 1168.1,363.8"/><path class="cv" d="M1156.5 400.5L1162.4 361.2M1161.9 403.3L1168.1 363.8M1167.1 399.5L1173.4 360.2"/><path class="ch" d="M1161.7 396.8L1167.7 357.6"/>
<polygon class="cs" points="946.3,410.1 950.4,413 945.5,373 941.2,370.2"/><polygon class="ce" points="950.4,413 957.6,409 953.1,369.3 945.5,373"/><path class="cv" d="M946.3 410.1L941.2 370.2M950.4 413L945.5 373M957.6 409L953.1 369.3"/><path class="ch" d="M953.5 406.2L948.8 366.5"/>
<polygon class="cs" points="1208,427.1 1214.1,430.2 1223.6,389.6 1217.1,386.6"/><polygon class="ce" points="1214.1,430.2 1219.1,426 1228.7,385.5 1223.6,389.6"/><path class="cv" d="M1208 427.1L1217.1 386.6M1214.1 430.2L1223.6 389.6M1219.1 426L1228.7 385.5"/><path class="ch" d="M1213 422.9L1222.2 382.6"/>
<polygon class="cs" points="1033.2,411.1 1037.9,414 1037.5,374 1032.6,371.2"/><polygon class="ce" points="1037.9,414 1044.3,410.1 1044.3,370.2 1037.5,374"/><path class="cv" d="M1033.2 411.1L1032.6 371.2M1037.9 414L1037.5 374M1044.3 410.1L1044.3 370.2"/><path class="ch" d="M1039.6 407.2L1039.4 367.5"/>
<polygon class="cs" points="1113.7,431.3 1119.1,434.5 1123.4,393.7 1117.6,390.6"/><polygon class="ce" points="1119.1,434.5 1125.1,430.2 1129.6,389.5 1123.4,393.7"/><path class="cv" d="M1113.7 431.3L1117.6 390.6M1119.1 434.5L1123.4 393.7M1125.1 430.2L1129.6 389.5"/><path class="ch" d="M1119.6 427L1123.8 386.5"/>
<polygon class="cs" points="853.7,460.1 857.5,463.7 846.4,421.8 842.4,418.3"/><polygon class="ce" points="857.5,463.7 866.5,458.8 856,417 846.4,421.8"/><path class="cv" d="M853.7 460.1L842.4 418.3M857.5 463.7L846.4 421.8M866.5 458.8L856 417"/><path class="ch" d="M862.7 455.2L852 413.6"/>
<polygon class="cs" points="987.1,439.1 991.7,442.4 988.8,401.3 983.9,398.1"/><polygon class="ce" points="991.7,442.4 999,437.9 996.5,397 988.8,401.3"/><path class="cv" d="M987.1 439.1L983.9 398.1M991.7 442.4L988.8 401.3M999 437.9L996.5 397"/><path class="ch" d="M994.3 434.7L991.6 393.8"/>
<polygon class="cs" points="1166.3,462.1 1172.5,465.8 1180.3,423.9 1173.6,420.3"/><polygon class="ce" points="1172.5,465.8 1178.3,460.8 1186.3,419.1 1180.3,423.9"/><path class="cv" d="M1166.3 462.1L1173.6 420.3M1172.5 465.8L1180.3 423.9M1178.3 460.8L1186.3 419.1"/><path class="ch" d="M1172.1 457.3L1179.7 415.6"/>
<polygon class="cs" points="892.5,496.6 896.9,500.8 887.4,457.9 882.8,453.7"/><polygon class="ce" points="896.9,500.8 906.2,495.1 897.4,452.3 887.4,457.9"/><path class="cv" d="M892.5 496.6L882.8 453.7M896.9 500.8L887.4 457.9M906.2 495.1L897.4 452.3"/><path class="ch" d="M901.7 491L892.7 448.3"/>
<polygon class="cs" points="1045.1,480.6 1050.7,484.5 1051.1,442 1045.2,438.2"/><polygon class="ce" points="1050.7,484.5 1058,479.2 1058.9,436.8 1051.1,442"/><path class="cv" d="M1045.1 480.6L1045.2 438.2M1050.7 484.5L1051.1 442M1058 479.2L1058.9 436.8"/><path class="ch" d="M1052.5 475.3L1053 433"/>
<polygon class="cs" points="1098.7,518.8 1105.1,523.4 1109.3,480 1102.4,475.5"/><polygon class="ce" points="1105.1,523.4 1112.4,517.2 1117,473.9 1109.3,480"/><path class="cv" d="M1098.7 518.8L1102.4 475.5M1105.1 523.4L1109.3 480M1112.4 517.2L1117 473.9"/><path class="ch" d="M1106 512.7L1110.1 469.5"/>
<polygon class="cs" points="948.9,549.7 954.3,554.9 947.9,511 942.1,505.9"/><polygon class="ce" points="954.3,554.9 963.8,547.9 958.1,504.2 947.9,511"/><path class="cv" d="M948.9 549.7L942.1 505.9M954.3 554.9L947.9 511M963.8 547.9L958.1 504.2"/><path class="ch" d="M958.4 542.9L952.4 499.2"/>
<polygon class="cs" points="1002.1,599.8 1008.5,605.9 1005.8,561.9 998.8,555.8"/><polygon class="ce" points="1008.5,605.9 1018.2,597.7 1016.2,553.7 1005.8,561.9"/><path class="cv" d="M1002.1 599.8L998.8 555.8M1008.5 605.9L1005.8 561.9M1018.2 597.7L1016.2 553.7"/><path class="ch" d="M1011.7 591.8L1009.2 547.8"/>
<clipPath id="k3"><polygon points="1006.2,555.8 1223.6,385.5 1168.6,360.2 948.8,505.9"/><polygon points="948.8,505.9 1052.1,437.5 990.2,397.5 888.8,453.7"/><polygon points="1052.1,437.5 1123.6,390.1 1168.6,360.2 1107.9,332.3 1038.5,370.7 990.2,397.5"/><polygon points="888.8,453.7 990.2,397.5 947.2,369.7 848,418.3"/><polygon points="1038.5,370.7 1107.9,332.3 1064.5,312.3 995,346.3"/><polygon points="1014.9,383.8 1038.5,370.7 1019.3,360 995.7,372.3"/></clipPath>
<linearGradient id="g3" gradientUnits="userSpaceOnUse" x1="991.9" y1="347.8" x2="1061.9" y2="512.2"><stop offset="0" stop-color="#b4b4ba"/><stop offset=".55" stop-color="#85858a"/><stop offset="1" stop-color="#6a6a70"/></linearGradient>
<g class="sl" fill="url(#g3)"><polygon points="1006.2,555.8 1223.6,385.5 1168.6,360.2 948.8,505.9"/><polygon points="948.8,505.9 1052.1,437.5 990.2,397.5 888.8,453.7"/><polygon points="1052.1,437.5 1123.6,390.1 1168.6,360.2 1107.9,332.3 1038.5,370.7 990.2,397.5"/><polygon points="888.8,453.7 990.2,397.5 947.2,369.7 848,418.3"/><polygon points="1038.5,370.7 1107.9,332.3 1064.5,312.3 995,346.3"/><polygon points="1014.9,383.8 1038.5,370.7 1019.3,360 995.7,372.3"/></g>
<g class="cg" clip-path="url(#k3)"><polygon points="1008.5,605.9 1018.2,597.7 1016.2,553.7 1005.8,561.9"/><polygon points="1002.1,599.8 1008.5,605.9 1005.8,561.9 998.8,555.8"/><polygon points="954.3,554.9 963.8,547.9 958.1,504.2 947.9,511"/><polygon points="948.9,549.7 954.3,554.9 947.9,511 942.1,505.9"/><polygon points="896.9,500.8 906.2,495.1 897.4,452.3 887.4,457.9"/><polygon points="892.5,496.6 896.9,500.8 887.4,457.9 882.8,453.7"/><polygon points="857.5,463.7 866.5,458.8 856,417 846.4,421.8"/><polygon points="853.7,460.1 857.5,463.7 846.4,421.8 842.4,418.3"/><polygon points="1105.1,523.4 1112.4,517.2 1117,473.9 1109.3,480"/><polygon points="1098.7,518.8 1105.1,523.4 1109.3,480 1102.4,475.5"/><polygon points="1050.7,484.5 1058,479.2 1058.9,436.8 1051.1,442"/><polygon points="1045.1,480.6 1050.7,484.5 1051.1,442 1045.2,438.2"/><polygon points="991.7,442.4 999,437.9 996.5,397 988.8,401.3"/><polygon points="987.1,439.1 991.7,442.4 988.8,401.3 983.9,398.1"/><polygon points="950.4,413 957.6,409 953.1,369.3 945.5,373"/><polygon points="946.3,410.1 950.4,413 945.5,373 941.2,370.2"/><polygon points="1214.1,430.2 1219.1,426 1228.7,385.5 1223.6,389.6"/><polygon points="1208,427.1 1214.1,430.2 1223.6,389.6 1217.1,386.6"/><polygon points="1161.9,403.3 1167.1,399.5 1173.4,360.2 1168.1,363.8"/><polygon points="1156.5,400.5 1161.9,403.3 1168.1,363.8 1162.4,361.2"/><polygon points="1103.9,373.3 1109.2,370.1 1112.3,332.3 1106.8,335.3"/><polygon points="1099.3,370.9 1103.9,373.3 1106.8,335.3 1102,333.1"/><polygon points="1062.4,351.8 1067.7,348.9 1068.8,312.3 1063.2,315"/><polygon points="1058.2,349.7 1062.4,351.8 1063.2,315 1058.9,313"/><polygon points="1172.5,465.8 1178.3,460.8 1186.3,419.1 1180.3,423.9"/><polygon points="1166.3,462.1 1172.5,465.8 1180.3,423.9 1173.6,420.3"/><polygon points="1119.1,434.5 1125.1,430.2 1129.6,389.5 1123.4,393.7"/><polygon points="1113.7,431.3 1119.1,434.5 1123.4,393.7 1117.6,390.6"/><polygon points="1037.9,414 1044.3,410.1 1044.3,370.2 1037.5,374"/><polygon points="1033.2,411.1 1037.9,414 1037.5,374 1032.6,371.2"/><polygon points="996.2,388 1002.6,384.5 1000.5,345.9 993.8,349.2"/><polygon points="992.1,385.4 996.2,388 993.8,349.2 989.5,346.8"/></g>
<path class="bh" d="M1064.3 315.3L1060.2 317.3M1064.3 315.3L1111.9 337.4M1064.3 315.3L1064.4 310.3"/><polygon class="bt" points="1112.3,332.3 1064.4,310.3 1060.3,312.3 1108.3,334.5"/><polygon class="bs" points="1060.2,317.3 1107.9,339.7 1108.3,334.5 1060.3,312.3"/>
<path class="bh" d="M1064.3 315.3L990.7 351.6M1064.3 315.3L1068.6 317.3M1064.3 315.3L1064.4 310.3"/><polygon class="bt" points="994.7,348.8 1068.8,312.3 1064.4,310.3 990.4,346.3"/><polygon class="bs" points="995,354.1 1068.6,317.3 1068.8,312.3 994.7,348.8"/>
<path class="bh" d="M1107.1 335.2L1103 337.4M1107.1 335.2L1172.6 365.6M1107.1 335.2L1107.5 330"/><polygon class="bt" points="1173.4,360.2 1107.5,330 1103.4,332.3 1169.5,362.9"/><polygon class="bs" points="1103,337.4 1168.6,368.2 1169.5,362.9 1103.4,332.3"/>
<path class="bh" d="M1107.1 335.2L1033.6 376.2M1107.1 335.2L1111.9 337.4M1107.1 335.2L1107.5 330"/><polygon class="bt" points="1038.4,373.5 1112.3,332.3 1107.5,330 1033.5,370.7"/><polygon class="bs" points="1038.5,379 1111.9,337.4 1112.3,332.3 1038.4,373.5"/>
<path class="bh" d="M995.7 349.2L942.9 375.2M995.7 349.2L1000 351.6M995.7 349.2L995.3 343.9"/><polygon class="bt" points="946.5,372.5 999.7,346.3 995.3,343.9 942.2,369.7"/><polygon class="bs" points="947.1,378 1000,351.6 999.7,346.3 946.5,372.5"/>
<path class="bh" d="M995.7 349.2L990.7 351.6M995.7 349.2L1043.4 376.2M995.7 349.2L995.3 343.9"/><polygon class="bt" points="1043.4,370.7 995.3,343.9 990.4,346.3 1038.4,373.5"/><polygon class="bs" points="990.7,351.6 1038.5,379 1038.4,373.5 990.4,346.3"/>
<path class="bh" d="M1166.9 363L1163 365.6M1166.9 363L1227.4 391.1M1166.9 363L1167.7 357.6"/><polygon class="bt" points="1228.7,385.5 1167.7,357.6 1163.8,360.2 1224.9,388.5"/><polygon class="bs" points="1163,365.6 1223.6,394.1 1224.9,388.5 1163.8,360.2"/>
<path class="bh" d="M967.6 363L962.3 365.6M967.6 363L984.3 373.2M967.6 363L967.1 357.6"/><polygon class="bs" points="962.3,365.6 978.9,376 978.5,370.5 961.7,360.3"/><polygon class="bt" points="983.8,367.8 967.1,357.6 961.7,360.3 978.5,370.5"/>
<path class="bh" d="M1008 356.1L955 383.2M1008 356.1L1012.4 358.6M1008 356.1L1007.7 350.8"/><polygon class="bt" points="958.8,380.6 1012.2,353.3 1007.7,350.8 954.4,377.7"/><polygon class="bs" points="959.4,386.1 1012.4,358.6 1012.2,353.3 958.8,380.6"/>
<path class="bh" d="M1166.9 363L1117.8 395.6M1166.9 363L1172.6 365.6M1166.9 363L1167.7 357.6"/><polygon class="bs" points="1123.6,398.7 1172.6,365.6 1173.4,360.2 1124.2,393.1"/><polygon class="bt" points="1124.2,393.1 1173.4,360.2 1167.7,357.6 1118.4,390.1"/>
<path class="bh" d="M1036.6 373.6L1033.9 377.3M1036.6 373.6L1127.5 394.4M1036.6 373.6L1036.6 368.2"/><polygon class="bt" points="1033.9,371.8 1126.2,392.9 1128.1,388.9 1036.6,368.2"/><polygon class="bs" points="1033.9,377.3 1125.6,398.5 1126.2,392.9 1033.9,371.8"/>
<path class="bh" d="M948.5 372.4L942.9 375.2M948.5 372.4L995.8 403.1M948.5 372.4L947.8 367"/><polygon class="bs" points="942.9,375.2 990.2,406.3 989.8,400.7 942.2,369.7"/><polygon class="bt" points="995.5,397.5 947.8,367 942.2,369.7 989.8,400.7"/>
<path class="bh" d="M948.5 372.4L843.9 424M948.5 372.4L952.7 375.2M948.5 372.4L947.8 367"/><polygon class="bt" points="846.4,421.8 952.1,369.7 947.8,367 842.4,418.3"/><polygon class="bs" points="847.9,427.5 952.7,375.2 952.1,369.7 846.4,421.8"/>
<path class="bh" d="M1038.5 373.4L985.3 403.1M1038.5 373.4L1043.4 376.2M1038.5 373.4L1038.5 368"/><polygon class="bt" points="989.8,400.7 1043.4,370.7 1038.5,368 984.9,397.5"/><polygon class="bs" points="990.2,406.3 1043.4,376.2 1043.4,370.7 989.8,400.7"/>
<path class="bh" d="M1221 388.1L1173.4 425.4M1221 388.1L1227.4 391.1M1221 388.1L1222.2 382.6"/><polygon class="bs" points="1180,429 1227.4,391.1 1228.7,385.5 1181.1,423.2"/><polygon class="bt" points="1181.1,423.2 1228.7,385.5 1222.2,382.6 1174.4,419.7"/>
<path class="bh" d="M1122.4 392.6L1117.8 395.6M1122.4 392.6L1184.4 425.4M1122.4 392.6L1123 387"/><polygon class="bt" points="1185.5,419.7 1123,387 1118.4,390.1 1181.1,423.2"/><polygon class="bs" points="1117.8,395.6 1180,429 1181.1,423.2 1118.4,390.1"/>
<path class="bh" d="M1122.4 392.6L1046.2 443.3M1122.4 392.6L1128.2 395.6M1122.4 392.6L1123 387"/><polygon class="bs" points="1052.1,447.2 1128.2,395.6 1128.8,390.1 1052.1,441.3"/><polygon class="bt" points="1052.1,441.3 1128.8,390.1 1123,387 1046.3,437.5"/>
<path class="bh" d="M851 420.5L843.9 424M851 420.5L896 459.6M851 420.5L849.5 414.8"/><polygon class="bs" points="843.9,424 888.7,463.8 887.4,457.9 842.4,418.3"/><polygon class="bt" points="894.8,453.7 849.5,414.8 842.4,418.3 887.4,457.9"/>
<path class="bh" d="M991 400L985.3 403.1M991 400L1057.8 443.3M991 400L990.6 394.4"/><polygon class="bs" points="985.3,403.1 1052.1,447.2 1052.1,441.3 984.9,397.5"/><polygon class="bt" points="1057.9,437.5 990.6,394.4 984.9,397.5 1052.1,441.3"/>
<path class="bh" d="M991 400L884.1 459.7M991 400L995.8 403.1M991 400L990.6 394.4"/><polygon class="bt" points="887.4,457.9 995.5,397.5 990.6,394.4 882.8,453.7"/><polygon class="bs" points="888.7,463.8 995.8,403.1 995.5,397.5 887.4,457.9"/>
<path class="bh" d="M1177.8 421.9L1102.9 480.7M1177.8 421.9L1184.4 425.4M1177.8 421.9L1178.9 416.2"/><polygon class="bs" points="1109.7,485.2 1184.4,425.4 1185.5,419.7 1110.3,479.2"/><polygon class="bt" points="1110.3,479.2 1185.5,419.7 1178.9,416.2 1103.4,474.7"/>
<path class="bh" d="M1051.9 439.5L1046.2 443.3M1051.9 439.5L1115.4 480.7M1051.9 439.5L1052 433.7"/><polygon class="bs" points="1046.2,443.3 1109.7,485.2 1110.3,479.2 1046.3,437.5"/><polygon class="bt" points="1116,474.7 1052,433.7 1046.3,437.5 1110.3,479.2"/>
<path class="bh" d="M891.4 455.6L884.1 459.7M891.4 455.6L956.3 512M891.4 455.6L890.1 449.7"/><polygon class="bs" points="884.1,459.7 948.8,517.1 947.9,511 882.8,453.7"/><polygon class="bt" points="955.5,505.9 890.1,449.7 882.8,453.7 947.9,511"/>
<path class="bh" d="M1051.9 439.5L943.1 512M1051.9 439.5L1057.8 443.3M1051.9 439.5L1052 433.7"/><polygon class="bs" points="948.8,517.1 1057.8,443.3 1057.9,437.5 947.9,511"/><polygon class="bt" points="947.9,511 1057.9,437.5 1052,433.7 942.1,505.9"/>
<path class="bh" d="M1108.6 476.3L999.3 562M1108.6 476.3L1115.4 480.7M1108.6 476.3L1109.1 470.3"/><polygon class="bs" points="1006.1,568.1 1115.4,480.7 1116,474.7 1005.8,561.9"/><polygon class="bt" points="1005.8,561.9 1116,474.7 1109.1,470.3 998.8,555.8"/>
<path class="bh" d="M950.6 507L943.1 512M950.6 507L1013.8 561.9M950.6 507L949.7 501"/><polygon class="bs" points="943.1,512 1006.1,568.1 1005.8,561.9 942.1,505.9"/><polygon class="bt" points="1013.5,555.8 949.7,501 942.1,505.9 1005.8,561.9"/>
<polygon class="cj" points="1058.8,318 1063.1,320 1063.2,315 1058.9,313"/><polygon class="cj" points="1063.1,320 1068.6,317.3 1068.8,312.3 1063.2,315"/><path class="cv" d="M1058.8 318L1058.9 313M1063.1 320L1063.2 315M1068.6 317.3L1068.8 312.3"/><path class="ch" d="M1064.3 315.3L1064.4 310.3"/><polygon class="cj" points="1101.6,338.2 1106.4,340.5 1106.8,335.3 1102,333.1"/><polygon class="cj" points="1106.4,340.5 1111.9,337.4 1112.3,332.3 1106.8,335.3"/><path class="cv" d="M1101.6 338.2L1102 333.1M1106.4 340.5L1106.8 335.3M1111.9 337.4L1112.3 332.3"/><path class="ch" d="M1107.1 335.2L1107.5 330"/><polygon class="cj" points="989.8,352 994.1,354.5 993.8,349.2 989.5,346.8"/><polygon class="cj" points="994.1,354.5 1000.8,351.2 1000.5,345.9 993.8,349.2"/><path class="cv" d="M989.8 352L989.5 346.8M994.1 354.5L993.8 349.2M1000.8 351.2L1000.5 345.9"/><path class="ch" d="M996.5 348.7L996.2 343.5"/><polygon class="cj" points="1161.6,366.5 1167.2,369.2 1168.1,363.8 1162.4,361.2"/><polygon class="cj" points="1167.2,369.2 1172.6,365.6 1173.4,360.2 1168.1,363.8"/><path class="cv" d="M1161.6 366.5L1162.4 361.2M1167.2 369.2L1168.1 363.8M1172.6 365.6L1173.4 360.2"/><path class="ch" d="M1166.9 363L1167.7 357.6"/><polygon class="cj" points="941.9,375.7 946.1,378.5 945.5,373 941.2,370.2"/><polygon class="cj" points="946.1,378.5 953.7,374.7 953.1,369.3 945.5,373"/><path class="cv" d="M941.9 375.7L941.2 370.2M946.1 378.5L945.5 373M953.7 374.7L953.1 369.3"/><path class="ch" d="M949.5 371.9L948.8 366.5"/><polygon class="cj" points="1215.8,392.1 1222.3,395.2 1223.6,389.6 1217.1,386.6"/><polygon class="cj" points="1222.3,395.2 1227.4,391.1 1228.7,385.5 1223.6,389.6"/><path class="cv" d="M1215.8 392.1L1217.1 386.6M1222.3 395.2L1223.6 389.6M1227.4 391.1L1228.7 385.5"/><path class="ch" d="M1221 388.1L1222.2 382.6"/><polygon class="cj" points="1032.7,376.7 1037.6,379.5 1037.5,374 1032.6,371.2"/><polygon class="cj" points="1037.6,379.5 1044.3,375.7 1044.3,370.2 1037.5,374"/><path class="cv" d="M1032.7 376.7L1032.6 371.2M1037.6 379.5L1037.5 374M1044.3 375.7L1044.3 370.2"/><path class="ch" d="M1039.4 372.9L1039.4 367.5"/><polygon class="cj" points="1117,396.2 1122.8,399.3 1123.4,393.7 1117.6,390.6"/><polygon class="cj" points="1122.8,399.3 1129,395.1 1129.6,389.5 1123.4,393.7"/><path class="cv" d="M1117 396.2L1117.6 390.6M1122.8 399.3L1123.4 393.7M1129 395.1L1129.6 389.5"/><path class="ch" d="M1123.2 392.1L1123.8 386.5"/><polygon class="cj" points="843.9,424 847.9,427.5 846.4,421.8 842.4,418.3"/><polygon class="cj" points="847.9,427.5 857.5,422.8 856,417 846.4,421.8"/><path class="cv" d="M843.9 424L842.4 418.3M847.9 427.5L846.4 421.8M857.5 422.8L856 417"/><path class="ch" d="M853.5 419.3L852 413.6"/><polygon class="cj" points="984.3,403.7 989.2,406.9 988.8,401.3 983.9,398.1"/><polygon class="cj" points="989.2,406.9 996.8,402.6 996.5,397 988.8,401.3"/><path class="cv" d="M984.3 403.7L983.9 398.1M989.2 406.9L988.8 401.3M996.8 402.6L996.5 397"/><path class="ch" d="M992 399.4L991.6 393.8"/><polygon class="cj" points="1172.6,426.1 1179.2,429.6 1180.3,423.9 1173.6,420.3"/><polygon class="cj" points="1179.2,429.6 1185.2,424.8 1186.3,419.1 1180.3,423.9"/><path class="cv" d="M1172.6 426.1L1173.6 420.3M1179.2 429.6L1180.3 423.9M1185.2 424.8L1186.3 419.1"/><path class="ch" d="M1178.6 421.3L1179.7 415.6"/><polygon class="cj" points="884.1,459.7 888.7,463.8 887.4,457.9 882.8,453.7"/><polygon class="cj" points="888.7,463.8 898.6,458.2 897.4,452.3 887.4,457.9"/><path class="cv" d="M884.1 459.7L882.8 453.7M888.7 463.8L887.4 457.9M898.6 458.2L897.4 452.3"/><path class="ch" d="M893.9 454.2L892.7 448.3"/><polygon class="cj" points="1045.2,444 1051.1,447.8 1051.1,442 1045.2,438.2"/><polygon class="cj" points="1051.1,447.8 1058.8,442.6 1058.9,436.8 1051.1,442"/><path class="cv" d="M1045.2 444L1045.2 438.2M1051.1 447.8L1051.1 442M1058.8 442.6L1058.9 436.8"/><path class="ch" d="M1052.9 438.9L1053 433"/><polygon class="cj" points="1101.9,481.5 1108.7,486 1109.3,480 1102.4,475.5"/><polygon class="cj" points="1108.7,486 1116.4,479.9 1117,473.9 1109.3,480"/><path class="cv" d="M1101.9 481.5L1102.4 475.5M1108.7 486L1109.3 480M1116.4 479.9L1117 473.9"/><path class="ch" d="M1109.5 475.5L1110.1 469.5"/><polygon class="cj" points="943.1,512 948.8,517.1 947.9,511 942.1,505.9"/><polygon class="cj" points="948.8,517.1 958.9,510.2 958.1,504.2 947.9,511"/><path class="cv" d="M943.1 512L942.1 505.9M948.8 517.1L947.9 511M958.9 510.2L958.1 504.2"/><path class="ch" d="M953.2 505.3L952.4 499.2"/><polygon class="cj" points="999.3,562 1006.1,568.1 1005.8,561.9 998.8,555.8"/><polygon class="cj" points="1006.1,568.1 1016.4,559.8 1016.2,553.7 1005.8,561.9"/><path class="cv" d="M999.3 562L998.8 555.8M1006.1 568.1L1005.8 561.9M1016.4 559.8L1016.2 553.7"/><path class="ch" d="M1009.6 553.9L1009.2 547.8"/>
<polygon class="cs" points="1058.9,313 1063.2,315 1064.2,274.8 1059.6,272.9"/><polygon class="ce" points="1063.2,315 1068.8,312.3 1069.9,272.3 1064.2,274.8"/><path class="cv" d="M1058.9 313L1059.6 272.9M1063.2 315L1064.2 274.8M1068.8 312.3L1069.9 272.3"/><path class="ch" d="M1064.4 310.3L1065.4 270.4"/>
<polygon class="cs" points="1102,333.1 1106.8,335.3 1110,293.5 1104.9,291.4"/><polygon class="ce" points="1106.8,335.3 1112.3,332.3 1115.8,290.7 1110,293.5"/><path class="cv" d="M1102 333.1L1104.9 291.4M1106.8 335.3L1110 293.5M1112.3 332.3L1115.8 290.7"/><path class="ch" d="M1107.5 330L1110.6 288.6"/>
<polygon class="cs" points="989.5,346.8 993.8,349.2 991.2,306.4 986.7,304.1"/><polygon class="ce" points="993.8,349.2 1000.5,345.9 998.3,303.3 991.2,306.4"/><path class="cv" d="M989.5 346.8L986.7 304.1M993.8 349.2L991.2 306.4M1000.5 345.9L998.3 303.3"/><path class="ch" d="M996.2 343.5L993.8 301.1"/>
<polygon class="cs" points="1162.4,361.2 1168.1,363.8 1174.9,320 1168.8,317.5"/><polygon class="ce" points="1168.1,363.8 1173.4,360.2 1180.5,316.7 1174.9,320"/><path class="cv" d="M1162.4 361.2L1168.8 317.5M1168.1 363.8L1174.9 320M1173.4 360.2L1180.5 316.7"/><path class="ch" d="M1167.7 357.6L1174.4 314.2"/>
<polygon class="cs" points="941.2,370.2 945.5,373 939.9,328.6 935.5,326"/><polygon class="ce" points="945.5,373 953.1,369.3 948,325 939.9,328.6"/><path class="cv" d="M941.2 370.2L935.5 326M945.5 373L939.9 328.6M953.1 369.3L948 325"/><path class="ch" d="M948.8 366.5L943.6 322.5"/>
<polygon class="cs" points="1217.1,386.6 1223.6,389.6 1234.1,344.2 1227.2,341.3"/><polygon class="ce" points="1223.6,389.6 1228.7,385.5 1239.4,340.4 1234.1,344.2"/><path class="cv" d="M1217.1 386.6L1227.2 341.3M1223.6 389.6L1234.1 344.2M1228.7 385.5L1239.4 340.4"/><path class="ch" d="M1222.2 382.6L1232.5 337.6"/>
<polygon class="cs" points="1032.6,371.2 1037.5,374 1037.2,329.5 1032,326.9"/><polygon class="ce" points="1037.5,374 1044.3,370.2 1044.3,326 1037.2,329.5"/><path class="cv" d="M1032.6 371.2L1032 326.9M1037.5 374L1037.2 329.5M1044.3 370.2L1044.3 326"/><path class="ch" d="M1039.4 367.5L1039.1 323.4"/>
<polygon class="cs" points="1117.6,390.6 1123.4,393.7 1128.1,348 1121.9,345.1"/><polygon class="ce" points="1123.4,393.7 1129.6,389.5 1134.6,344.1 1128.1,348"/><path class="cv" d="M1117.6 390.6L1121.9 345.1M1123.4 393.7L1128.1 348M1129.6 389.5L1134.6 344.1"/><path class="ch" d="M1123.8 386.5L1128.5 341.3"/>
<polygon class="cs" points="842.4,418.3 846.4,421.8 833.8,374.5 829.7,371.2"/><polygon class="ce" points="846.4,421.8 856,417 844.2,370 833.8,374.5"/><path class="cv" d="M842.4 418.3L829.7 371.2M846.4 421.8L833.8 374.5M856 417L844.2 370"/><path class="ch" d="M852 413.6L840 366.7"/>
<polygon class="cs" points="983.9,398.1 988.8,401.3 985.4,355.1 980.3,352.1"/><polygon class="ce" points="988.8,401.3 996.5,397 993.7,351.1 985.4,355.1"/><path class="cv" d="M983.9 398.1L980.3 352.1M988.8 401.3L985.4 355.1M996.5 397L993.7 351.1"/><path class="ch" d="M991.6 393.8L988.5 348.1"/>
<polygon class="cs" points="1173.6,420.3 1180.3,423.9 1189,376.5 1181.8,373.2"/><polygon class="ce" points="1180.3,423.9 1186.3,419.1 1195.3,372 1189,376.5"/><path class="cv" d="M1173.6 420.3L1181.8 373.2M1180.3 423.9L1189 376.5M1186.3 419.1L1195.3 372"/><path class="ch" d="M1179.7 415.6L1188.2 368.7"/>
<polygon class="cs" points="882.8,453.7 887.4,457.9 876.6,409 871.7,405"/><polygon class="ce" points="887.4,457.9 897.4,452.3 887.4,403.6 876.6,409"/><path class="cv" d="M882.8 453.7L871.7 405M887.4 457.9L876.6 409M897.4 452.3L887.4 403.6"/><path class="ch" d="M892.7 448.3L882.4 399.8"/>
<polygon class="cs" points="1045.2,438.2 1051.1,442 1051.6,393.8 1045.3,390.1"/><polygon class="ce" points="1051.1,442 1058.9,436.8 1059.9,388.9 1051.6,393.8"/><path class="cv" d="M1045.2 438.2L1045.3 390.1M1051.1 442L1051.6 393.8M1058.9 436.8L1059.9 388.9"/><path class="ch" d="M1053 433L1053.6 385.3"/>
<polygon class="cs" points="1102.4,475.5 1109.3,480 1114.1,430.3 1106.6,425.9"/><polygon class="ce" points="1109.3,480 1117,473.9 1122.3,424.4 1114.1,430.3"/><path class="cv" d="M1102.4 475.5L1106.6 425.9M1109.3 480L1114.1 430.3M1117 473.9L1122.3 424.4"/><path class="ch" d="M1110.1 469.5L1114.8 420.2"/>
<polygon class="cs" points="942.1,505.9 947.9,511 940.4,460.4 934.3,455.4"/><polygon class="ce" points="947.9,511 958.1,504.2 951.6,453.7 940.4,460.4"/><path class="cv" d="M942.1 505.9L934.3 455.4M947.9 511L940.4 460.4M958.1 504.2L951.6 453.7"/><path class="ch" d="M952.4 499.2L945.4 448.9"/>
<polygon class="cs" points="998.8,555.8 1005.8,561.9 1002.5,510.3 995,504.3"/><polygon class="ce" points="1005.8,561.9 1016.2,553.7 1013.8,502.2 1002.5,510.3"/><path class="cv" d="M998.8 555.8L995 504.3M1005.8 561.9L1002.5 510.3M1016.2 553.7L1013.8 502.2"/><path class="ch" d="M1009.2 547.8L1006.4 496.4"/>
<clipPath id="k4"><polygon points="1003,504.3 1234,340.4 1175.4,316.7 941.5,455.4"/><polygon points="941.5,455.4 1052.6,389.5 987,351.6 878.1,405"/><polygon points="1052.6,389.5 1128.3,344.6 1175.4,316.7 1111.1,290.7 1038.2,326.5 987,351.6"/><polygon points="878.1,405 987,351.6 941.8,325.5 835.6,371.2"/><polygon points="1038.2,326.5 1111.1,290.7 1065.5,272.3 992.5,303.7"/><polygon points="1013.2,338.7 1038.2,326.5 1018,316.4 993.1,327.9"/></clipPath>
<linearGradient id="g4" gradientUnits="userSpaceOnUse" x1="989.2" y1="305.1" x2="1063.3" y2="461.5"><stop offset="0" stop-color="#b4b4ba"/><stop offset=".55" stop-color="#85858a"/><stop offset="1" stop-color="#6a6a70"/></linearGradient>
<g class="sl" fill="url(#g4)"><polygon points="1003,504.3 1234,340.4 1175.4,316.7 941.5,455.4"/><polygon points="941.5,455.4 1052.6,389.5 987,351.6 878.1,405"/><polygon points="1052.6,389.5 1128.3,344.6 1175.4,316.7 1111.1,290.7 1038.2,326.5 987,351.6"/><polygon points="878.1,405 987,351.6 941.8,325.5 835.6,371.2"/><polygon points="1038.2,326.5 1111.1,290.7 1065.5,272.3 992.5,303.7"/><polygon points="1013.2,338.7 1038.2,326.5 1018,316.4 993.1,327.9"/></g>
<g class="cg" clip-path="url(#k4)"><polygon points="1005.8,561.9 1016.2,553.7 1013.8,502.2 1002.5,510.3"/><polygon points="998.8,555.8 1005.8,561.9 1002.5,510.3 995,504.3"/><polygon points="947.9,511 958.1,504.2 951.6,453.7 940.4,460.4"/><polygon points="942.1,505.9 947.9,511 940.4,460.4 934.3,455.4"/><polygon points="887.4,457.9 897.4,452.3 887.4,403.6 876.6,409"/><polygon points="882.8,453.7 887.4,457.9 876.6,409 871.7,405"/><polygon points="846.4,421.8 856,417 844.2,370 833.8,374.5"/><polygon points="842.4,418.3 846.4,421.8 833.8,374.5 829.7,371.2"/><polygon points="1109.3,480 1117,473.9 1122.3,424.4 1114.1,430.3"/><polygon points="1102.4,475.5 1109.3,480 1114.1,430.3 1106.6,425.9"/><polygon points="1051.1,442 1058.9,436.8 1059.9,388.9 1051.6,393.8"/><polygon points="1045.2,438.2 1051.1,442 1051.6,393.8 1045.3,390.1"/><polygon points="988.8,401.3 996.5,397 993.7,351.1 985.4,355.1"/><polygon points="983.9,398.1 988.8,401.3 985.4,355.1 980.3,352.1"/><polygon points="945.5,373 953.1,369.3 948,325 939.9,328.6"/><polygon points="941.2,370.2 945.5,373 939.9,328.6 935.5,326"/><polygon points="1223.6,389.6 1228.7,385.5 1239.4,340.4 1234.1,344.2"/><polygon points="1217.1,386.6 1223.6,389.6 1234.1,344.2 1227.2,341.3"/><polygon points="1168.1,363.8 1173.4,360.2 1180.5,316.7 1174.9,320"/><polygon points="1162.4,361.2 1168.1,363.8 1174.9,320 1168.8,317.5"/><polygon points="1106.8,335.3 1112.3,332.3 1115.8,290.7 1110,293.5"/><polygon points="1102,333.1 1106.8,335.3 1110,293.5 1104.9,291.4"/><polygon points="1063.2,315 1068.8,312.3 1069.9,272.3 1064.2,274.8"/><polygon points="1058.9,313 1063.2,315 1064.2,274.8 1059.6,272.9"/><polygon points="1180.3,423.9 1186.3,419.1 1195.3,372 1189,376.5"/><polygon points="1173.6,420.3 1180.3,423.9 1189,376.5 1181.8,373.2"/><polygon points="1123.4,393.7 1129.6,389.5 1134.6,344.1 1128.1,348"/><polygon points="1117.6,390.6 1123.4,393.7 1128.1,348 1121.9,345.1"/><polygon points="1037.5,374 1044.3,370.2 1044.3,326 1037.2,329.5"/><polygon points="1032.6,371.2 1037.5,374 1037.2,329.5 1032,326.9"/><polygon points="993.8,349.2 1000.5,345.9 998.3,303.3 991.2,306.4"/><polygon points="989.5,346.8 993.8,349.2 991.2,306.4 986.7,304.1"/></g>
<path class="bh" d="M1065.3 275.9L1061 277.7M1065.3 275.9L1115.3 296.3M1065.3 275.9L1065.4 270.4"/><polygon class="bt" points="1115.8,290.7 1065.4,270.4 1061.1,272.3 1111.5,292.8"/><polygon class="bs" points="1061,277.7 1111.1,298.5 1111.5,292.8 1061.1,272.3"/>
<path class="bh" d="M1065.3 275.9L988 309.5M1065.3 275.9L1069.8 277.7M1065.3 275.9L1065.4 270.4"/><polygon class="bt" points="992.1,306 1069.9,272.3 1065.4,270.4 987.6,303.7"/><polygon class="bs" points="992.5,311.8 1069.8,277.7 1069.9,272.3 992.1,306"/>
<path class="bh" d="M1110.2 294.3L1106 296.3M1110.2 294.3L1179.5 322.6M1110.2 294.3L1110.6 288.6"/><polygon class="bt" points="1180.5,316.7 1110.6,288.6 1106.4,290.7 1176.3,319.1"/><polygon class="bs" points="1106,296.3 1175.4,325.1 1176.3,319.1 1106.4,290.7"/>
<path class="bh" d="M1110.2 294.3L1033 332.5M1110.2 294.3L1115.3 296.3M1110.2 294.3L1110.6 288.6"/><polygon class="bt" points="1038.1,329.1 1115.8,290.7 1110.6,288.6 1032.9,326.5"/><polygon class="bs" points="1038.2,335.2 1115.3,296.3 1115.8,290.7 1038.1,329.1"/>
<path class="bh" d="M993.2 307.2L937.3 331.6M993.2 307.2L997.7 309.5M993.2 307.2L992.8 301.4"/><polygon class="bt" points="941,328.1 997.4,303.7 992.8,301.4 936.5,325.5"/><polygon class="bs" points="941.8,334.2 997.7,309.5 997.4,303.7 941,328.1"/>
<path class="bh" d="M993.2 307.2L988 309.5M993.2 307.2L1043.4 332.5M993.2 307.2L992.8 301.4"/><polygon class="bt" points="1043.4,326.5 992.8,301.4 987.6,303.7 1038.1,329.1"/><polygon class="bs" points="988,309.5 1038.2,335.2 1038.1,329.1 987.6,303.7"/>
<path class="bh" d="M1173.5 320.2L1169.4 322.6M1173.5 320.2L1238 346.6M1173.5 320.2L1174.4 314.2"/><polygon class="bt" points="1239.4,340.4 1174.4,314.2 1170.3,316.7 1235.5,343.2"/><polygon class="bs" points="1169.4,322.6 1234.1,349.4 1235.5,343.2 1170.3,316.7"/>
<path class="bh" d="M963.5 320.2L957.9 322.6M963.5 320.2L981 329.7M963.5 320.2L963 314.2"/><polygon class="bt" points="980.5,323.7 963,314.2 957.3,316.6 974.8,326.3"/><polygon class="bs" points="957.9,322.6 975.3,332.3 974.8,326.3 957.3,316.6"/>
<path class="bh" d="M1006.1 313.7L950 339.1M1006.1 313.7L1010.8 316.1M1006.1 313.7L1005.8 307.9"/><polygon class="bt" points="954,335.6 1010.5,310.2 1005.8,307.9 949.3,332.9"/><polygon class="bs" points="954.6,341.8 1010.8,316.1 1010.5,310.2 954,335.6"/>
<path class="bh" d="M1173.5 320.2L1122.2 350.8M1173.5 320.2L1179.5 322.6M1173.5 320.2L1174.4 314.2"/><polygon class="bt" points="1129,347.5 1180.5,316.7 1174.4,314.2 1122.8,344.6"/><polygon class="bs" points="1128.3,353.8 1179.5,322.6 1180.5,316.7 1129,347.5"/>
<path class="bh" d="M1036.2 330.1L1033.4 333.5M1036.2 330.1L1132.4 349.7M1036.2 330.1L1036.2 324.1"/><polygon class="bt" points="1033.3,327.5 1131.1,347.3 1133.1,343.5 1036.2,324.1"/><polygon class="bs" points="1033.4,333.5 1130.4,353.5 1131.1,347.3 1033.3,327.5"/>
<path class="bh" d="M943.3 329L937.3 331.6M943.3 329L993 357.9M943.3 329L942.5 322.9"/><polygon class="bt" points="992.6,351.6 942.5,322.9 936.5,325.5 986.5,354.6"/><polygon class="bs" points="937.3,331.6 987,360.9 986.5,354.6 936.5,325.5"/>
<path class="bh" d="M943.3 329L831.4 377.7M943.3 329L947.7 331.6M943.3 329L942.5 322.9"/><polygon class="bt" points="833.8,374.5 947,325.5 942.5,322.9 829.7,371.2"/><polygon class="bs" points="835.6,381 947.7,331.6 947,325.5 833.8,374.5"/>
<path class="bh" d="M1038.3 329.9L981.8 357.9M1038.3 329.9L1043.4 332.5M1038.3 329.9L1038.2 323.9"/><polygon class="bt" points="986.5,354.6 1043.4,326.5 1038.2,323.9 981.3,351.6"/><polygon class="bs" points="987,360.9 1043.4,332.5 1043.4,326.5 986.5,354.6"/>
<path class="bh" d="M1231.1 343.7L1181.5 379.1M1231.1 343.7L1238 346.6M1231.1 343.7L1232.5 337.6"/><polygon class="bs" points="1188.6,382.5 1238,346.6 1239.4,340.4 1189.8,375.9"/><polygon class="bt" points="1189.8,375.9 1239.4,340.4 1232.5,337.6 1182.7,372.6"/>
<path class="bh" d="M1127 348L1122.2 350.8M1127 348L1193.3 379.1M1127 348L1127.6 341.8"/><polygon class="bt" points="1194.5,372.6 1127.6,341.8 1122.8,344.6 1189.8,375.9"/><polygon class="bs" points="1122.2,350.8 1188.6,382.5 1189.8,375.9 1122.8,344.6"/>
<path class="bh" d="M1127 348L1046.4 396.1M1127 348L1133.1 350.8M1127 348L1127.6 341.8"/><polygon class="bt" points="1052.7,393.1 1133.8,344.6 1127.6,341.8 1046.4,389.5"/><polygon class="bs" points="1052.6,399.8 1133.1,350.8 1133.8,344.6 1052.7,393.1"/>
<path class="bh" d="M839 374.4L831.4 377.7M839 374.4L886 411.8M839 374.4L837.4 367.9"/><polygon class="bs" points="831.4,377.7 878.1,415.7 876.6,409 829.7,371.2"/><polygon class="bt" points="884.6,405 837.4,367.9 829.7,371.2 876.6,409"/>
<path class="bh" d="M987.9 354.9L981.8 357.9M987.9 354.9L1058.7 396.1M987.9 354.9L987.4 348.6"/><polygon class="bt" points="1058.8,389.5 987.4,348.6 981.3,351.6 1052.7,393.1"/><polygon class="bs" points="981.8,357.9 1052.6,399.8 1052.7,393.1 981.3,351.6"/>
<path class="bh" d="M987.9 354.9L873.2 411.8M987.9 354.9L993 357.9M987.9 354.9L987.4 348.6"/><polygon class="bt" points="876.6,409 992.6,351.6 987.4,348.6 871.7,405"/><polygon class="bs" points="878.1,415.7 993,357.9 992.6,351.6 876.6,409"/>
<path class="bh" d="M1186.2 375.8L1107.1 432.1M1186.2 375.8L1193.3 379.1M1186.2 375.8L1187.4 369.3"/><polygon class="bs" points="1114.5,436.4 1193.3,379.1 1194.5,372.6 1115.2,429.5"/><polygon class="bt" points="1115.2,429.5 1194.5,372.6 1187.4,369.3 1107.7,425.2"/>
<path class="bh" d="M1052.5 392.5L1046.4 396.1M1052.5 392.5L1120.5 432.1M1052.5 392.5L1052.5 385.9"/><polygon class="bt" points="1121.2,425.2 1052.5,385.9 1046.4,389.5 1115.2,429.5"/><polygon class="bs" points="1046.4,396.1 1114.5,436.4 1115.2,429.5 1046.4,389.5"/>
<path class="bh" d="M881.1 407.9L873.2 411.8M881.1 407.9L949.7 462.5M881.1 407.9L879.7 401.1"/><polygon class="bs" points="873.2,411.8 941.5,467.4 940.4,460.4 871.7,405"/><polygon class="bt" points="948.7,455.4 879.7,401.1 871.7,405 940.4,460.4"/>
<path class="bh" d="M1052.5 392.5L935.4 462.5M1052.5 392.5L1058.7 396.1M1052.5 392.5L1052.5 385.9"/><polygon class="bt" points="940.4,460.4 1058.8,389.5 1052.5,385.9 934.3,455.4"/><polygon class="bs" points="941.5,467.4 1058.7,396.1 1058.8,389.5 940.4,460.4"/>
<path class="bh" d="M1113.1 427.8L995.6 511.5M1113.1 427.8L1120.5 432.1M1113.1 427.8L1113.8 420.9"/><polygon class="bs" points="1003,517.6 1120.5,432.1 1121.2,425.2 1002.5,510.3"/><polygon class="bt" points="1002.5,510.3 1121.2,425.2 1113.8,420.9 995,504.3"/>
<path class="bh" d="M943.6 457.6L935.4 462.5M943.6 457.6L1011.3 511.5M943.6 457.6L942.6 450.6"/><polygon class="bs" points="935.4,462.5 1003,517.6 1002.5,510.3 934.3,455.4"/><polygon class="bt" points="1010.9,504.3 942.6,450.6 934.3,455.4 1002.5,510.3"/>
<polygon class="cj" points="1059.5,278.4 1064,280.3 1064.2,274.8 1059.6,272.9"/><polygon class="cj" points="1064,280.3 1069.8,277.7 1069.9,272.3 1064.2,274.8"/><path class="cv" d="M1059.5 278.4L1059.6 272.9M1064 280.3L1064.2 274.8M1069.8 277.7L1069.9 272.3"/><path class="ch" d="M1065.3 275.9L1065.4 270.4"/><polygon class="cj" points="1104.5,297.1 1109.6,299.2 1110,293.5 1104.9,291.4"/><polygon class="cj" points="1109.6,299.2 1115.3,296.3 1115.8,290.7 1110,293.5"/><path class="cv" d="M1104.5 297.1L1104.9 291.4M1109.6 299.2L1110 293.5M1115.3 296.3L1115.8 290.7"/><path class="ch" d="M1110.2 294.3L1110.6 288.6"/><polygon class="cj" points="987,309.9 991.6,312.2 991.2,306.4 986.7,304.1"/><polygon class="cj" points="991.6,312.2 998.6,309.1 998.3,303.3 991.2,306.4"/><path class="cv" d="M987 309.9L986.7 304.1M991.6 312.2L991.2 306.4M998.6 309.1L998.3 303.3"/><path class="ch" d="M994.1 306.8L993.8 301.1"/><polygon class="cj" points="1167.9,323.5 1173.9,326 1174.9,320 1168.8,317.5"/><polygon class="cj" points="1173.9,326 1179.5,322.6 1180.5,316.7 1174.9,320"/><path class="cv" d="M1167.9 323.5L1168.8 317.5M1173.9 326L1174.9 320M1179.5 322.6L1180.5 316.7"/><path class="ch" d="M1173.5 320.2L1174.4 314.2"/><polygon class="cj" points="936.3,332 940.7,334.7 939.9,328.6 935.5,326"/><polygon class="cj" points="940.7,334.7 948.7,331.1 948,325 939.9,328.6"/><path class="cv" d="M936.3 332L935.5 326M940.7 334.7L939.9 328.6M948.7 331.1L948 325"/><path class="ch" d="M944.3 328.5L943.6 322.5"/><polygon class="cj" points="1225.8,347.6 1232.7,350.4 1234.1,344.2 1227.2,341.3"/><polygon class="cj" points="1232.7,350.4 1238,346.6 1239.4,340.4 1234.1,344.2"/><path class="cv" d="M1225.8 347.6L1227.2 341.3M1232.7 350.4L1234.1 344.2M1238 346.6L1239.4 340.4"/><path class="ch" d="M1231.1 343.7L1232.5 337.6"/><polygon class="cj" points="1032.1,333 1037.2,335.6 1037.2,329.5 1032,326.9"/><polygon class="cj" points="1037.2,335.6 1044.3,332.1 1044.3,326 1037.2,329.5"/><path class="cv" d="M1032.1 333L1032 326.9M1037.2 335.6L1037.2 329.5M1044.3 332.1L1044.3 326"/><path class="ch" d="M1039.2 329.5L1039.1 323.4"/><polygon class="cj" points="1121.3,351.4 1127.4,354.3 1128.1,348 1121.9,345.1"/><polygon class="cj" points="1127.4,354.3 1133.9,350.3 1134.6,344.1 1128.1,348"/><path class="cv" d="M1121.3 351.4L1121.9 345.1M1127.4 354.3L1128.1 348M1133.9 350.3L1134.6 344.1"/><path class="ch" d="M1127.8 347.5L1128.5 341.3"/><polygon class="cj" points="831.4,377.7 835.6,381 833.8,374.5 829.7,371.2"/><polygon class="cj" points="835.6,381 845.8,376.5 844.2,370 833.8,374.5"/><path class="cv" d="M831.4 377.7L829.7 371.2M835.6 381L833.8 374.5M845.8 376.5L844.2 370"/><path class="ch" d="M841.7 373.2L840 366.7"/><polygon class="cj" points="980.8,358.4 985.9,361.5 985.4,355.1 980.3,352.1"/><polygon class="cj" points="985.9,361.5 994,357.4 993.7,351.1 985.4,355.1"/><path class="cv" d="M980.8 358.4L980.3 352.1M985.9 361.5L985.4 355.1M994 357.4L993.7 351.1"/><path class="ch" d="M988.9 354.4L988.5 348.1"/><polygon class="cj" points="1180.7,379.7 1187.8,383.1 1189,376.5 1181.8,373.2"/><polygon class="cj" points="1187.8,383.1 1194.1,378.5 1195.3,372 1189,376.5"/><path class="cv" d="M1180.7 379.7L1181.8 373.2M1187.8 383.1L1189 376.5M1194.1 378.5L1195.3 372"/><path class="ch" d="M1187 375.2L1188.2 368.7"/><polygon class="cj" points="873.2,411.8 878.1,415.7 876.6,409 871.7,405"/><polygon class="cj" points="878.1,415.7 888.7,410.4 887.4,403.6 876.6,409"/><path class="cv" d="M873.2 411.8L871.7 405M878.1 415.7L876.6 409M888.7 410.4L887.4 403.6"/><path class="ch" d="M883.8 406.5L882.4 399.8"/><polygon class="cj" points="1045.3,396.8 1051.5,400.5 1051.6,393.8 1045.3,390.1"/><polygon class="cj" points="1051.5,400.5 1059.7,395.5 1059.9,388.9 1051.6,393.8"/><path class="cv" d="M1045.3 396.8L1045.3 390.1M1051.5 400.5L1051.6 393.8M1059.7 395.5L1059.9 388.9"/><path class="ch" d="M1053.5 391.9L1053.6 385.3"/><polygon class="cj" points="1106.1,432.8 1113.4,437.2 1114.1,430.3 1106.6,425.9"/><polygon class="cj" points="1113.4,437.2 1121.5,431.3 1122.3,424.4 1114.1,430.3"/><path class="cv" d="M1106.1 432.8L1106.6 425.9M1113.4 437.2L1114.1 430.3M1121.5 431.3L1122.3 424.4"/><path class="ch" d="M1114.2 427L1114.8 420.2"/><polygon class="cj" points="935.4,462.5 941.5,467.4 940.4,460.4 934.3,455.4"/><polygon class="cj" points="941.5,467.4 952.5,460.7 951.6,453.7 940.4,460.4"/><path class="cv" d="M935.4 462.5L934.3 455.4M941.5 467.4L940.4 460.4M952.5 460.7L951.6 453.7"/><path class="ch" d="M946.4 455.9L945.4 448.9"/><polygon class="cj" points="995.6,511.5 1003,517.6 1002.5,510.3 995,504.3"/><polygon class="cj" points="1003,517.6 1014.2,509.4 1013.8,502.2 1002.5,510.3"/><path class="cv" d="M995.6 511.5L995 504.3M1003 517.6L1002.5 510.3M1014.2 509.4L1013.8 502.2"/><path class="ch" d="M1006.8 503.6L1006.4 496.4"/>
<polygon class="cs" points="1059.6,272.9 1064.2,274.8 1065.2,230.5 1060.4,228.8"/><polygon class="ce" points="1064.2,274.8 1069.9,272.3 1071.2,228.3 1065.2,230.5"/><path class="cv" d="M1059.6 272.9L1060.4 228.8M1064.2 274.8L1065.2 230.5M1069.9 272.3L1071.2 228.3"/><path class="ch" d="M1065.4 270.4L1066.5 226.6"/>
<polygon class="cs" points="1104.9,291.4 1110,293.5 1113.6,247.2 1108.1,245.4"/><polygon class="ce" points="1110,293.5 1115.8,290.7 1119.6,244.7 1113.6,247.2"/><path class="cv" d="M1104.9 291.4L1108.1 245.4M1110 293.5L1113.6 247.2M1115.8 290.7L1119.6 244.7"/><path class="ch" d="M1110.6 288.6L1114.1 242.9"/>
<polygon class="cs" points="986.7,304.1 991.2,306.4 988.3,258.8 983.5,256.7"/><polygon class="ce" points="991.2,306.4 998.3,303.3 995.8,256 988.3,258.8"/><path class="cv" d="M986.7 304.1L983.5 256.7M991.2 306.4L988.3 258.8M998.3 303.3L995.8 256"/><path class="ch" d="M993.8 301.1L991 254"/>
<polygon class="cs" points="1168.8,317.5 1174.9,320 1182.5,271.1 1176,268.9"/><polygon class="ce" points="1174.9,320 1180.5,316.7 1188.3,268.1 1182.5,271.1"/><path class="cv" d="M1168.8 317.5L1176 268.9M1174.9 320L1182.5 271.1M1180.5 316.7L1188.3 268.1"/><path class="ch" d="M1174.4 314.2L1181.9 265.9"/>
<polygon class="cs" points="935.5,326 939.9,328.6 933.8,278.8 929.1,276.5"/><polygon class="ce" points="939.9,328.6 948,325 942.4,275.6 933.8,278.8"/><path class="cv" d="M935.5 326L929.1 276.5M939.9 328.6L933.8 278.8M948 325L942.4 275.6"/><path class="ch" d="M943.6 322.5L937.7 273.3"/>
<polygon class="cs" points="1227.2,341.3 1234.1,344.2 1246,293.1 1238.5,290.5"/><polygon class="ce" points="1234.1,344.2 1239.4,340.4 1251.5,289.6 1246,293.1"/><path class="cv" d="M1227.2 341.3L1238.5 290.5M1234.1 344.2L1246 293.1M1239.4 340.4L1251.5 289.6"/><path class="ch" d="M1232.5 337.6L1244.1 287.1"/>
<polygon class="cs" points="1032,326.9 1037.2,329.5 1036.8,279.7 1031.3,277.3"/><polygon class="ce" points="1037.2,329.5 1044.3,326 1044.4,276.5 1036.8,279.7"/><path class="cv" d="M1032 326.9L1031.3 277.3M1037.2 329.5L1036.8 279.7M1044.3 326L1044.4 276.5"/><path class="ch" d="M1039.1 323.4L1038.9 274.2"/>
<polygon class="cs" points="1121.9,345.1 1128.1,348 1133.4,296.6 1126.8,293.9"/><polygon class="ce" points="1128.1,348 1134.6,344.1 1140.3,293 1133.4,296.6"/><path class="cv" d="M1121.9 345.1L1126.8 293.9M1128.1 348L1133.4 296.6M1134.6 344.1L1140.3 293"/><path class="ch" d="M1128.5 341.3L1133.7 290.4"/>
<polygon class="cs" points="829.7,371.2 833.8,374.5 819.5,320.8 815.2,317.7"/><polygon class="ce" points="833.8,374.5 844.2,370 830.8,316.7 819.5,320.8"/><path class="cv" d="M829.7 371.2L815.2 317.7M833.8 374.5L819.5 320.8M844.2 370L830.8 316.7"/><path class="ch" d="M840 366.7L826.5 313.7"/>
<polygon class="cs" points="980.3,352.1 985.4,355.1 981.7,303 976.2,300.3"/><polygon class="ce" points="985.4,355.1 993.7,351.1 990.5,299.3 981.7,303"/><path class="cv" d="M980.3 352.1L976.2 300.3M985.4 355.1L981.7 303M993.7 351.1L990.5 299.3"/><path class="ch" d="M988.5 348.1L985 296.6"/>
<polygon class="cs" points="1181.8,373.2 1189,376.5 1198.9,322.8 1191.2,319.7"/><polygon class="ce" points="1189,376.5 1195.3,372 1205.6,318.6 1198.9,322.8"/><path class="cv" d="M1181.8 373.2L1191.2 319.7M1189 376.5L1198.9 322.8M1195.3 372L1205.6 318.6"/><path class="ch" d="M1188.2 368.7L1197.8 315.6"/>
<polygon class="cs" points="871.7,405 876.6,409 864.2,352.8 859,349.1"/><polygon class="ce" points="876.6,409 887.4,403.6 875.9,347.8 864.2,352.8"/><path class="cv" d="M871.7 405L859 349.1M876.6 409L864.2 352.8M887.4 403.6L875.9 347.8"/><path class="ch" d="M882.4 399.8L870.7 344.2"/>
<polygon class="cs" points="1045.3,390.1 1051.6,393.8 1052.2,338.7 1045.5,335.3"/><polygon class="ce" points="1051.6,393.8 1059.9,388.9 1061,334.1 1052.2,338.7"/><path class="cv" d="M1045.3 390.1L1045.5 335.3M1051.6 393.8L1052.2 338.7M1059.9 388.9L1061 334.1"/><path class="ch" d="M1053.6 385.3L1054.3 330.8"/>
<polygon class="cs" points="1106.6,425.9 1114.1,430.3 1119.6,372.8 1111.5,368.7"/><polygon class="ce" points="1114.1,430.3 1122.3,424.4 1128.3,367.3 1119.6,372.8"/><path class="cv" d="M1106.6 425.9L1111.5 368.7M1114.1 430.3L1119.6 372.8M1122.3 424.4L1128.3 367.3"/><path class="ch" d="M1114.8 420.2L1120.3 363.3"/>
<polygon class="cs" points="934.3,455.4 940.4,460.4 931.8,401.2 925.2,396.5"/><polygon class="ce" points="940.4,460.4 951.6,453.7 944,394.9 931.8,401.2"/><path class="cv" d="M934.3 455.4L925.2 396.5M940.4 460.4L931.8 401.2M951.6 453.7L944 394.9"/><path class="ch" d="M945.4 448.9L937.4 390.3"/>
<polygon class="cs" points="995,504.3 1002.5,510.3 998.6,449.1 990.5,443.3"/><polygon class="ce" points="1002.5,510.3 1013.8,502.2 1011.1,441.2 998.6,449.1"/><path class="cv" d="M995 504.3L990.5 443.3M1002.5 510.3L998.6 449.1M1013.8 502.2L1011.1 441.2"/><path class="ch" d="M1006.4 496.4L1002.9 435.6"/>
<clipPath id="k5"><polygon points="999.2,443.3 1245.7,289.6 1182.9,268.1 933,396.5"/><polygon points="933,396.5 1053.3,334.7 983.3,299.8 865.9,349.1"/><polygon points="1053.3,334.7 1133.6,293.5 1182.9,268.1 1114.6,244.7 1037.9,276.9 983.3,299.8"/><polygon points="865.9,349.1 983.3,299.8 935.8,276 821.6,317.7"/><polygon points="1037.9,276.9 1114.6,244.7 1066.6,228.3 989.7,256.4"/><polygon points="1011.3,288.1 1037.9,276.9 1016.5,267.8 990,278.3"/></clipPath>
<linearGradient id="g5" gradientUnits="userSpaceOnUse" x1="986.2" y1="257.6" x2="1065" y2="402.3"><stop offset="0" stop-color="#b4b4ba"/><stop offset=".55" stop-color="#85858a"/><stop offset="1" stop-color="#6a6a70"/></linearGradient>
<g class="sl" fill="url(#g5)"><polygon points="999.2,443.3 1245.7,289.6 1182.9,268.1 933,396.5"/><polygon points="933,396.5 1053.3,334.7 983.3,299.8 865.9,349.1"/><polygon points="1053.3,334.7 1133.6,293.5 1182.9,268.1 1114.6,244.7 1037.9,276.9 983.3,299.8"/><polygon points="865.9,349.1 983.3,299.8 935.8,276 821.6,317.7"/><polygon points="1037.9,276.9 1114.6,244.7 1066.6,228.3 989.7,256.4"/><polygon points="1011.3,288.1 1037.9,276.9 1016.5,267.8 990,278.3"/></g>
<g class="cg" clip-path="url(#k5)"><polygon points="1002.5,510.3 1013.8,502.2 1011.1,441.2 998.6,449.1"/><polygon points="995,504.3 1002.5,510.3 998.6,449.1 990.5,443.3"/><polygon points="940.4,460.4 951.6,453.7 944,394.9 931.8,401.2"/><polygon points="934.3,455.4 940.4,460.4 931.8,401.2 925.2,396.5"/><polygon points="876.6,409 887.4,403.6 875.9,347.8 864.2,352.8"/><polygon points="871.7,405 876.6,409 864.2,352.8 859,349.1"/><polygon points="833.8,374.5 844.2,370 830.8,316.7 819.5,320.8"/><polygon points="829.7,371.2 833.8,374.5 819.5,320.8 815.2,317.7"/><polygon points="1114.1,430.3 1122.3,424.4 1128.3,367.3 1119.6,372.8"/><polygon points="1106.6,425.9 1114.1,430.3 1119.6,372.8 1111.5,368.7"/><polygon points="1051.6,393.8 1059.9,388.9 1061,334.1 1052.2,338.7"/><polygon points="1045.3,390.1 1051.6,393.8 1052.2,338.7 1045.5,335.3"/><polygon points="985.4,355.1 993.7,351.1 990.5,299.3 981.7,303"/><polygon points="980.3,352.1 985.4,355.1 981.7,303 976.2,300.3"/><polygon points="939.9,328.6 948,325 942.4,275.6 933.8,278.8"/><polygon points="935.5,326 939.9,328.6 933.8,278.8 929.1,276.5"/><polygon points="1234.1,344.2 1239.4,340.4 1251.5,289.6 1246,293.1"/><polygon points="1227.2,341.3 1234.1,344.2 1246,293.1 1238.5,290.5"/><polygon points="1174.9,320 1180.5,316.7 1188.3,268.1 1182.5,271.1"/><polygon points="1168.8,317.5 1174.9,320 1182.5,271.1 1176,268.9"/><polygon points="1110,293.5 1115.8,290.7 1119.6,244.7 1113.6,247.2"/><polygon points="1104.9,291.4 1110,293.5 1113.6,247.2 1108.1,245.4"/><polygon points="1064.2,274.8 1069.9,272.3 1071.2,228.3 1065.2,230.5"/><polygon points="1059.6,272.9 1064.2,274.8 1065.2,230.5 1060.4,228.8"/><polygon points="1189,376.5 1195.3,372 1205.6,318.6 1198.9,322.8"/><polygon points="1181.8,373.2 1189,376.5 1198.9,322.8 1191.2,319.7"/><polygon points="1128.1,348 1134.6,344.1 1140.3,293 1133.4,296.6"/><polygon points="1121.9,345.1 1128.1,348 1133.4,296.6 1126.8,293.9"/><polygon points="1037.2,329.5 1044.3,326 1044.4,276.5 1036.8,279.7"/><polygon points="1032,326.9 1037.2,329.5 1036.8,279.7 1031.3,277.3"/><polygon points="991.2,306.4 998.3,303.3 995.8,256 988.3,258.8"/><polygon points="986.7,304.1 991.2,306.4 988.3,258.8 983.5,256.7"/></g>
<path class="bh" d="M1066.3 232.6L1061.9 234.3M1066.3 232.6L1119 251M1066.3 232.6L1066.5 226.6"/><polygon class="bt" points="1119.6,244.7 1066.5,226.6 1062,228.3 1115.1,246.6"/><polygon class="bs" points="1061.9,234.3 1114.6,252.9 1115.1,246.6 1062,228.3"/>
<path class="bh" d="M1066.3 232.6L984.9 262.8M1066.3 232.6L1071.1 234.3M1066.3 232.6L1066.5 226.6"/><polygon class="bt" points="989.3,258.4 1071.2,228.3 1066.5,226.6 984.5,256.4"/><polygon class="bs" points="989.7,264.9 1071.1,234.3 1071.2,228.3 989.3,258.4"/>
<path class="bh" d="M1113.6 249.1L1109.2 251M1113.6 249.1L1187.2 274.8M1113.6 249.1L1114.1 242.9"/><polygon class="bt" points="1188.3,268.1 1114.1,242.9 1109.7,244.7 1184,270.3"/><polygon class="bs" points="1109.2,251 1183,277 1184,270.3 1109.7,244.7"/>
<path class="bh" d="M1113.6 249.1L1032.4 283.7M1113.6 249.1L1119 251M1113.6 249.1L1114.1 242.9"/><polygon class="bt" points="1037.8,279.3 1119.6,244.7 1114.1,242.9 1032.3,276.9"/><polygon class="bs" points="1037.9,286.1 1119,251 1119.6,244.7 1037.8,279.3"/>
<path class="bh" d="M990.4 260.8L931.1 282.8M990.4 260.8L995.2 262.8M990.4 260.8L990.1 254.3"/><polygon class="bt" points="934.9,278.4 994.8,256.4 990.1,254.3 930.2,276"/><polygon class="bs" points="935.7,285.2 995.2,262.8 994.8,256.4 934.9,278.4"/>
<path class="bh" d="M990.4 260.8L984.9 262.8M990.4 260.8L1043.4 283.7M990.4 260.8L990.1 254.3"/><polygon class="bt" points="1043.4,276.9 990.1,254.3 984.5,256.4 1037.8,279.3"/><polygon class="bs" points="984.9,262.8 1037.9,286.1 1037.8,279.3 984.5,256.4"/>
<path class="bh" d="M1180.8 272.5L1176.6 274.8M1180.8 272.5L1249.9 296.6M1180.8 272.5L1181.9 265.9"/><polygon class="bt" points="1251.5,289.6 1181.9,265.9 1177.6,268.1 1247.4,292.2"/><polygon class="bs" points="1176.6,274.8 1245.8,299.2 1247.4,292.2 1177.6,268.1"/>
<path class="bh" d="M959 272.5L953 274.7M959 272.5L977.3 281.2M959 272.5L958.3 265.8"/><polygon class="bt" points="976.8,274.4 958.3,265.8 952.3,268 970.7,276.7"/><polygon class="bs" points="953,274.7 971.3,283.5 970.7,276.7 952.3,268"/>
<path class="bh" d="M1004 266.7L944.4 289.7M1004 266.7L1008.9 268.8M1004 266.7L1003.7 260.1"/><polygon class="bt" points="948.5,285.3 1008.7,262.2 1003.7,260.1 943.6,282.8"/><polygon class="bs" points="949.2,292.2 1008.9,268.8 1008.7,262.2 948.5,285.3"/>
<path class="bh" d="M1180.8 272.5L1127 300.5M1180.8 272.5L1187.2 274.8M1180.8 272.5L1181.9 265.9"/><polygon class="bt" points="1134.3,296.1 1188.3,268.1 1181.9,265.9 1127.7,293.5"/><polygon class="bs" points="1133.6,303.2 1187.2,274.8 1188.3,268.1 1134.3,296.1"/>
<path class="bh" d="M1035.8 281.5L1032.8 284.7M1035.8 281.5L1137.9 299.5M1035.8 281.5L1035.8 274.8"/><polygon class="bt" points="1032.7,277.8 1136.6,295.9 1138.6,292.4 1035.8,274.8"/><polygon class="bs" points="1032.8,284.7 1135.8,303 1136.6,295.9 1032.7,277.8"/>
<path class="bh" d="M937.4 280.5L931.1 282.8M937.4 280.5L989.8 306.9M937.4 280.5L936.6 273.7"/><polygon class="bt" points="989.3,299.8 936.6,273.7 930.2,276 982.8,302.6"/><polygon class="bs" points="931.1,282.8 983.3,309.7 982.8,302.6 930.2,276"/>
<path class="bh" d="M937.4 280.5L817.2 325.1M937.4 280.5L942.1 282.8M937.4 280.5L936.6 273.7"/><polygon class="bt" points="819.5,320.8 941.3,276 936.6,273.7 815.2,317.7"/><polygon class="bs" points="821.5,328.2 942.1,282.8 941.3,276 819.5,320.8"/>
<path class="bh" d="M1037.9 281.4L977.9 306.9M1037.9 281.4L1043.4 283.7M1037.9 281.4L1037.9 274.6"/><polygon class="bt" points="982.8,302.6 1043.4,276.9 1037.9,274.6 977.4,299.8"/><polygon class="bs" points="983.3,309.7 1043.4,283.7 1043.4,276.9 982.8,302.6"/>
<path class="bh" d="M1242.5 294L1190.7 326.5M1242.5 294L1249.9 296.6M1242.5 294L1244.1 287.1"/><polygon class="bs" points="1198.4,329.7 1249.9,296.6 1251.5,289.6 1199.8,322.2"/><polygon class="bt" points="1199.8,322.2 1251.5,289.6 1244.1,287.1 1192,319.1"/>
<path class="bh" d="M1132.1 297.9L1127 300.5M1132.1 297.9L1203.3 326.5M1132.1 297.9L1132.8 290.9"/><polygon class="bt" points="1204.7,319.1 1132.8,290.9 1127.7,293.5 1199.8,322.2"/><polygon class="bs" points="1127,300.5 1198.4,329.7 1199.8,322.2 1127.7,293.5"/>
<path class="bh" d="M1132.1 297.9L1046.6 342.3M1132.1 297.9L1138.6 300.5M1132.1 297.9L1132.8 290.9"/><polygon class="bt" points="1053.4,338.1 1139.4,293.5 1132.8,290.9 1046.6,334.7"/><polygon class="bs" points="1053.3,345.7 1138.6,300.5 1139.4,293.5 1053.4,338.1"/>
<path class="bh" d="M825.5 322.1L817.2 325.1M825.5 322.1L874.5 356.9M825.5 322.1L823.6 314.7"/><polygon class="bs" points="817.2,325.1 865.9,360.6 864.2,352.8 815.2,317.7"/><polygon class="bt" points="872.8,349.1 823.6,314.7 815.2,317.7 864.2,352.8"/>
<path class="bh" d="M984.3 304.2L977.9 306.9M984.3 304.2L1059.7 342.3M984.3 304.2L983.9 297.1"/><polygon class="bt" points="1059.9,334.7 983.9,297.1 977.4,299.8 1053.4,338.1"/><polygon class="bs" points="977.9,306.9 1053.3,345.7 1053.4,338.1 977.4,299.8"/>
<path class="bh" d="M984.3 304.2L860.8 356.9M984.3 304.2L989.8 306.9M984.3 304.2L983.9 297.1"/><polygon class="bt" points="864.2,352.8 989.3,299.8 983.9,297.1 859,349.1"/><polygon class="bs" points="865.9,360.6 989.8,306.9 989.3,299.8 864.2,352.8"/>
<path class="bh" d="M1195.6 323.4L1112 376M1195.6 323.4L1203.3 326.5M1195.6 323.4L1197 316.1"/><polygon class="bs" points="1120,380.1 1203.3,326.5 1204.7,319.1 1120.8,372.1"/><polygon class="bt" points="1120.8,372.1 1204.7,319.1 1197,316.1 1112.7,368"/>
<path class="bh" d="M1053.1 338.9L1046.6 342.3M1053.1 338.9L1126.4 376M1053.1 338.9L1053.2 331.4"/><polygon class="bt" points="1127.2,368 1053.2,331.4 1046.6,334.7 1120.8,372.1"/><polygon class="bs" points="1046.6,342.3 1120,380.1 1120.8,372.1 1046.6,334.7"/>
<path class="bh" d="M869.3 353.2L860.8 356.9M869.3 353.2L941.9 404.7M869.3 353.2L867.7 345.5"/><polygon class="bs" points="860.8,356.9 933,409.5 931.8,401.2 859,349.1"/><polygon class="bt" points="940.8,396.5 867.7,345.5 859,349.1 931.8,401.2"/>
<path class="bh" d="M1053.1 338.9L926.5 404.8M1053.1 338.9L1059.7 342.3M1053.1 338.9L1053.2 331.4"/><polygon class="bt" points="931.8,401.2 1059.9,334.7 1053.2,331.4 925.2,396.5"/><polygon class="bs" points="933,409.5 1059.7,342.3 1059.9,334.7 931.8,401.2"/>
<path class="bh" d="M1118.4 372L991.2 451.9M1118.4 372L1126.4 376M1118.4 372L1119.2 364"/><polygon class="bs" points="999.2,457.7 1126.4,376 1127.2,368 998.6,449.1"/><polygon class="bt" points="998.6,449.1 1127.2,368 1119.2,364 990.5,443.3"/>
<path class="bh" d="M935.4 400.1L926.5 404.8M935.4 400.1L1008.3 451.9M935.4 400.1L934.2 391.9"/><polygon class="bs" points="926.5,404.8 999.2,457.7 998.6,449.1 925.2,396.5"/><polygon class="bt" points="1007.9,443.3 934.2,391.9 925.2,396.5 998.6,449.1"/>
<polygon class="cj" points="1060.3,234.8 1065,236.5 1065.2,230.5 1060.4,228.8"/><polygon class="cj" points="1065,236.5 1071.1,234.3 1071.2,228.3 1065.2,230.5"/><path class="cv" d="M1060.3 234.8L1060.4 228.8M1065 236.5L1065.2 230.5M1071.1 234.3L1071.2 228.3"/><path class="ch" d="M1066.3 232.6L1066.5 226.6"/><polygon class="cj" points="1107.7,251.6 1113.1,253.6 1113.6,247.2 1108.1,245.4"/><polygon class="cj" points="1113.1,253.6 1119,251 1119.6,244.7 1113.6,247.2"/><path class="cv" d="M1107.7 251.6L1108.1 245.4M1113.1 253.6L1113.6 247.2M1119 251L1119.6 244.7"/><path class="ch" d="M1113.6 249.1L1114.1 242.9"/><polygon class="cj" points="983.9,263.2 988.7,265.3 988.3,258.8 983.5,256.7"/><polygon class="cj" points="988.7,265.3 996.1,262.5 995.8,256 988.3,258.8"/><path class="cv" d="M983.9 263.2L983.5 256.7M988.7 265.3L988.3 258.8M996.1 262.5L995.8 256"/><path class="ch" d="M991.4 260.4L991 254"/><polygon class="cj" points="1175,275.5 1181.4,277.8 1182.5,271.1 1176,268.9"/><polygon class="cj" points="1181.4,277.8 1187.2,274.8 1188.3,268.1 1182.5,271.1"/><path class="cv" d="M1175 275.5L1176 268.9M1181.4 277.8L1182.5 271.1M1187.2 274.8L1188.3 268.1"/><path class="ch" d="M1180.8 272.5L1181.9 265.9"/><polygon class="cj" points="930,283.3 934.6,285.7 933.8,278.8 929.1,276.5"/><polygon class="cj" points="934.6,285.7 943.2,282.4 942.4,275.6 933.8,278.8"/><path class="cv" d="M930 283.3L929.1 276.5M934.6 285.7L933.8 278.8M943.2 282.4L942.4 275.6"/><path class="ch" d="M938.5 280.1L937.7 273.3"/><polygon class="cj" points="1236.9,297.5 1244.3,300.1 1246,293.1 1238.5,290.5"/><polygon class="cj" points="1244.3,300.1 1249.9,296.6 1251.5,289.6 1246,293.1"/><path class="cv" d="M1236.9 297.5L1238.5 290.5M1244.3 300.1L1246 293.1M1249.9 296.6L1251.5 289.6"/><path class="ch" d="M1242.5 294L1244.1 287.1"/><polygon class="cj" points="1031.4,284.2 1036.9,286.6 1036.8,279.7 1031.3,277.3"/><polygon class="cj" points="1036.9,286.6 1044.4,283.3 1044.4,276.5 1036.8,279.7"/><path class="cv" d="M1031.4 284.2L1031.3 277.3M1036.9 286.6L1036.8 279.7M1044.4 283.3L1044.4 276.5"/><path class="ch" d="M1038.9 281L1038.9 274.2"/><polygon class="cj" points="1126.1,301 1132.7,303.7 1133.4,296.6 1126.8,293.9"/><polygon class="cj" points="1132.7,303.7 1139.5,300 1140.3,293 1133.4,296.6"/><path class="cv" d="M1126.1 301L1126.8 293.9M1132.7 303.7L1133.4 296.6M1139.5 300L1140.3 293"/><path class="ch" d="M1133 297.4L1133.7 290.4"/><polygon class="cj" points="817.2,325.1 821.5,328.2 819.5,320.8 815.2,317.7"/><polygon class="cj" points="821.5,328.2 832.7,324 830.8,316.7 819.5,320.8"/><path class="cv" d="M817.2 325.1L815.2 317.7M821.5 328.2L819.5 320.8M832.7 324L830.8 316.7"/><path class="ch" d="M828.3 321L826.5 313.7"/><polygon class="cj" points="976.8,307.4 982.2,310.2 981.7,303 976.2,300.3"/><polygon class="cj" points="982.2,310.2 990.9,306.5 990.5,299.3 981.7,303"/><path class="cv" d="M976.8 307.4L976.2 300.3M982.2 310.2L981.7 303M990.9 306.5L990.5 299.3"/><path class="ch" d="M985.5 303.7L985 296.6"/><polygon class="cj" points="1189.9,327.1 1197.6,330.2 1198.9,322.8 1191.2,319.7"/><polygon class="cj" points="1197.6,330.2 1204.1,326 1205.6,318.6 1198.9,322.8"/><path class="cv" d="M1189.9 327.1L1191.2 319.7M1197.6 330.2L1198.9 322.8M1204.1 326L1205.6 318.6"/><path class="ch" d="M1196.5 322.9L1197.8 315.6"/><polygon class="cj" points="860.8,356.9 865.9,360.6 864.2,352.8 859,349.1"/><polygon class="cj" points="865.9,360.6 877.5,355.6 875.9,347.8 864.2,352.8"/><path class="cv" d="M860.8 356.9L859 349.1M865.9 360.6L864.2 352.8M877.5 355.6L875.9 347.8"/><path class="ch" d="M872.3 351.9L870.7 344.2"/><polygon class="cj" points="1045.4,342.9 1052.1,346.4 1052.2,338.7 1045.5,335.3"/><polygon class="cj" points="1052.1,346.4 1060.9,341.7 1061,334.1 1052.2,338.7"/><path class="cv" d="M1045.4 342.9L1045.5 335.3M1052.1 346.4L1052.2 338.7M1060.9 341.7L1061 334.1"/><path class="ch" d="M1054.2 338.4L1054.3 330.8"/><polygon class="cj" points="1110.9,376.7 1118.8,380.8 1119.6,372.8 1111.5,368.7"/><polygon class="cj" points="1118.8,380.8 1127.5,375.3 1128.3,367.3 1119.6,372.8"/><path class="cv" d="M1110.9 376.7L1111.5 368.7M1118.8 380.8L1119.6 372.8M1127.5 375.3L1128.3 367.3"/><path class="ch" d="M1119.5 371.3L1120.3 363.3"/><polygon class="cj" points="926.5,404.8 933,409.5 931.8,401.2 925.2,396.5"/><polygon class="cj" points="933,409.5 945,403.1 944,394.9 931.8,401.2"/><path class="cv" d="M926.5 404.8L925.2 396.5M933 409.5L931.8 401.2M945 403.1L944 394.9"/><path class="ch" d="M938.5 398.5L937.4 390.3"/><polygon class="cj" points="991.2,451.9 999.2,457.7 998.6,449.1 990.5,443.3"/><polygon class="cj" points="999.2,457.7 1011.5,449.8 1011.1,441.2 998.6,449.1"/><path class="cv" d="M991.2 451.9L990.5 443.3M999.2 457.7L998.6 449.1M1011.5 449.8L1011.1 441.2"/><path class="ch" d="M1003.4 444.2L1002.9 435.6"/>
<polygon class="cs" points="1060.4,228.8 1065.2,230.5 1066.3,181.6 1061.3,180.2"/><polygon class="ce" points="1065.2,230.5 1071.2,228.3 1072.7,179.7 1066.3,181.6"/><path class="cv" d="M1060.4 228.8L1061.3 180.2M1065.2 230.5L1066.3 181.6M1071.2 228.3L1072.7 179.7"/><path class="ch" d="M1066.5 226.6L1067.6 178.3"/>
<polygon class="cs" points="1108.1,245.4 1113.6,247.2 1117.5,195.8 1111.7,194.2"/><polygon class="ce" points="1113.6,247.2 1119.6,244.7 1123.8,193.6 1117.5,195.8"/><path class="cv" d="M1108.1 245.4L1111.7 194.2M1113.6 247.2L1117.5 195.8M1119.6 244.7L1123.8 193.6"/><path class="ch" d="M1114.1 242.9L1118 192"/>
<polygon class="cs" points="983.5,256.7 988.3,258.8 985,205.6 980,203.8"/><polygon class="ce" points="988.3,258.8 995.8,256 993,203.2 985,205.6"/><path class="cv" d="M983.5 256.7L980 203.8M988.3 258.8L985 205.6M995.8 256L993 203.2"/><path class="ch" d="M991 254L988 201.5"/>
<polygon class="cs" points="1176,268.9 1182.5,271.1 1191,216.2 1184.1,214.3"/><polygon class="ce" points="1182.5,271.1 1188.3,268.1 1197.1,213.6 1191,216.2"/><path class="cv" d="M1176 268.9L1184.1 214.3M1182.5 271.1L1191 216.2M1188.3 268.1L1197.1 213.6"/><path class="ch" d="M1181.9 265.9L1190.2 211.7"/>
<polygon class="cs" points="929.1,276.5 933.8,278.8 926.8,222.8 921.9,220.7"/><polygon class="ce" points="933.8,278.8 942.4,275.6 936.1,220 926.8,222.8"/><path class="cv" d="M929.1 276.5L921.9 220.7M933.8 278.8L926.8 222.8M942.4 275.6L936.1 220"/><path class="ch" d="M937.7 273.3L931.1 218"/>
<polygon class="cs" points="1238.5,290.5 1246,293.1 1259.4,235.2 1251.3,233"/><polygon class="ce" points="1246,293.1 1251.5,289.6 1265.2,232.2 1259.4,235.2"/><path class="cv" d="M1238.5 290.5L1251.3 233M1246 293.1L1259.4 235.2M1251.5 289.6L1265.2 232.2"/><path class="ch" d="M1244.1 287.1L1257.1 230"/>
<polygon class="cs" points="1031.3,277.3 1036.8,279.7 1036.4,223.6 1030.5,221.5"/><polygon class="ce" points="1036.8,279.7 1044.4,276.5 1044.4,220.8 1036.4,223.6"/><path class="cv" d="M1031.3 277.3L1030.5 221.5M1036.8 279.7L1036.4 223.6M1044.4 276.5L1044.4 220.8"/><path class="ch" d="M1038.9 274.2L1038.6 218.8"/>
<polygon class="cs" points="1126.8,293.9 1133.4,296.6 1139.5,238.2 1132.3,235.9"/><polygon class="ce" points="1133.4,296.6 1140.3,293 1146.7,235.1 1139.5,238.2"/><path class="cv" d="M1126.8 293.9L1132.3 235.9M1133.4 296.6L1139.5 238.2M1140.3 293L1146.7 235.1"/><path class="ch" d="M1133.7 290.4L1139.6 232.8"/>
<polygon class="cs" points="815.2,317.7 819.5,320.8 803.2,259.3 798.7,256.6"/><polygon class="ce" points="819.5,320.8 830.8,316.7 815.5,255.6 803.2,259.3"/><path class="cv" d="M815.2 317.7L798.7 256.6M819.5 320.8L803.2 259.3M830.8 316.7L815.5 255.6"/><path class="ch" d="M826.5 313.7L811 253"/>
<polygon class="cs" points="976.2,300.3 981.7,303 977.4,243.8 971.6,241.4"/><polygon class="ce" points="981.7,303 990.5,299.3 986.8,240.5 977.4,243.8"/><path class="cv" d="M976.2 300.3L971.6 241.4M981.7 303L977.4 243.8M990.5 299.3L986.8 240.5"/><path class="ch" d="M985 296.6L981 238.2"/>
<polygon class="cs" points="1191.2,319.7 1198.9,322.8 1210.3,261.1 1201.9,258.4"/><polygon class="ce" points="1198.9,322.8 1205.6,318.6 1217.3,257.4 1210.3,261.1"/><path class="cv" d="M1191.2 319.7L1201.9 258.4M1198.9 322.8L1210.3 261.1M1205.6 318.6L1217.3 257.4"/><path class="ch" d="M1197.8 315.6L1208.9 254.8"/>
<polygon class="cs" points="859,349.1 864.2,352.8 849.7,287.5 844.3,284.3"/><polygon class="ce" points="864.2,352.8 875.9,347.8 862.6,283.1 849.7,287.5"/><path class="cv" d="M859 349.1L844.3 284.3M864.2 352.8L849.7 287.5M875.9 347.8L862.6 283.1"/><path class="ch" d="M870.7 344.2L857.1 280"/>
<polygon class="cs" points="1045.5,335.3 1052.2,338.7 1052.8,275.1 1045.6,272.1"/><polygon class="ce" points="1052.2,338.7 1061,334.1 1062.3,271.1 1052.8,275.1"/><path class="cv" d="M1045.5 335.3L1045.6 272.1M1052.2 338.7L1052.8 275.1M1061 334.1L1062.3 271.1"/><path class="ch" d="M1054.3 330.8L1055.1 268.1"/>
<polygon class="cs" points="1111.5,368.7 1119.6,372.8 1126.1,305.5 1117.2,301.9"/><polygon class="ce" points="1119.6,372.8 1128.3,367.3 1135.4,300.6 1126.1,305.5"/><path class="cv" d="M1111.5 368.7L1117.2 301.9M1119.6 372.8L1126.1 305.5M1128.3 367.3L1135.4 300.6"/><path class="ch" d="M1120.3 363.3L1126.6 297.1"/>
<polygon class="cs" points="925.2,396.5 931.8,401.2 921.5,331.1 914.4,326.9"/><polygon class="ce" points="931.8,401.2 944,394.9 934.9,325.4 921.5,331.1"/><path class="cv" d="M925.2 396.5L914.4 326.9M931.8 401.2L921.5 331.1M944 394.9L934.9 325.4"/><path class="ch" d="M937.4 390.3L927.9 321.3"/>
<polygon class="cs" points="990.5,443.3 998.6,449.1 994,375.2 985.1,369.8"/><polygon class="ce" points="998.6,449.1 1011.1,441.2 1007.8,367.9 994,375.2"/><path class="cv" d="M990.5 443.3L985.1 369.8M998.6 449.1L994 375.2M1011.1 441.2L1007.8 367.9"/><path class="ch" d="M1002.9 435.6L998.9 362.7"/>
<clipPath id="k6"><polygon points="994.7,369.8 1259,232.2 1191.4,213.6 923,326.9"/><polygon points="923,326.9 1054,271.6 979.2,241 851.8,284.3"/><polygon points="1054,271.6 1139.5,235.5 1191.4,213.6 1118.6,193.6 1037.5,221.2 979.2,241"/><polygon points="851.8,284.3 979.2,241 929,220.4 805.5,256.6"/><polygon points="1037.5,221.2 1118.6,193.6 1067.8,179.7 986.5,203.5"/><polygon points="1009.2,230.8 1037.5,221.2 1014.9,213.3 986.7,222.3"/></clipPath>
<linearGradient id="g6" gradientUnits="userSpaceOnUse" x1="982.9" y1="204.6" x2="1066.9" y2="332.2"><stop offset="0" stop-color="#b4b4ba"/><stop offset=".55" stop-color="#85858a"/><stop offset="1" stop-color="#6a6a70"/></linearGradient>
<g class="sl" fill="url(#g6)"><polygon points="994.7,369.8 1259,232.2 1191.4,213.6 923,326.9"/><polygon points="923,326.9 1054,271.6 979.2,241 851.8,284.3"/><polygon points="1054,271.6 1139.5,235.5 1191.4,213.6 1118.6,193.6 1037.5,221.2 979.2,241"/><polygon points="851.8,284.3 979.2,241 929,220.4 805.5,256.6"/><polygon points="1037.5,221.2 1118.6,193.6 1067.8,179.7 986.5,203.5"/><polygon points="1009.2,230.8 1037.5,221.2 1014.9,213.3 986.7,222.3"/></g>
<g class="cg" clip-path="url(#k6)"><polygon points="998.6,449.1 1011.1,441.2 1007.8,367.9 994,375.2"/><polygon points="990.5,443.3 998.6,449.1 994,375.2 985.1,369.8"/><polygon points="931.8,401.2 944,394.9 934.9,325.4 921.5,331.1"/><polygon points="925.2,396.5 931.8,401.2 921.5,331.1 914.4,326.9"/><polygon points="864.2,352.8 875.9,347.8 862.6,283.1 849.7,287.5"/><polygon points="859,349.1 864.2,352.8 849.7,287.5 844.3,284.3"/><polygon points="819.5,320.8 830.8,316.7 815.5,255.6 803.2,259.3"/><polygon points="815.2,317.7 819.5,320.8 803.2,259.3 798.7,256.6"/><polygon points="1119.6,372.8 1128.3,367.3 1135.4,300.6 1126.1,305.5"/><polygon points="1111.5,368.7 1119.6,372.8 1126.1,305.5 1117.2,301.9"/><polygon points="1052.2,338.7 1061,334.1 1062.3,271.1 1052.8,275.1"/><polygon points="1045.5,335.3 1052.2,338.7 1052.8,275.1 1045.6,272.1"/><polygon points="981.7,303 990.5,299.3 986.8,240.5 977.4,243.8"/><polygon points="976.2,300.3 981.7,303 977.4,243.8 971.6,241.4"/><polygon points="933.8,278.8 942.4,275.6 936.1,220 926.8,222.8"/><polygon points="929.1,276.5 933.8,278.8 926.8,222.8 921.9,220.7"/><polygon points="1246,293.1 1251.5,289.6 1265.2,232.2 1259.4,235.2"/><polygon points="1238.5,290.5 1246,293.1 1259.4,235.2 1251.3,233"/><polygon points="1182.5,271.1 1188.3,268.1 1197.1,213.6 1191,216.2"/><polygon points="1176,268.9 1182.5,271.1 1191,216.2 1184.1,214.3"/><polygon points="1113.6,247.2 1119.6,244.7 1123.8,193.6 1117.5,195.8"/><polygon points="1108.1,245.4 1113.6,247.2 1117.5,195.8 1111.7,194.2"/><polygon points="1065.2,230.5 1071.2,228.3 1072.7,179.7 1066.3,181.6"/><polygon points="1060.4,228.8 1065.2,230.5 1066.3,181.6 1061.3,180.2"/><polygon points="1198.9,322.8 1205.6,318.6 1217.3,257.4 1210.3,261.1"/><polygon points="1191.2,319.7 1198.9,322.8 1210.3,261.1 1201.9,258.4"/><polygon points="1133.4,296.6 1140.3,293 1146.7,235.1 1139.5,238.2"/><polygon points="1126.8,293.9 1133.4,296.6 1139.5,238.2 1132.3,235.9"/><polygon points="1036.8,279.7 1044.4,276.5 1044.4,220.8 1036.4,223.6"/><polygon points="1031.3,277.3 1036.8,279.7 1036.4,223.6 1030.5,221.5"/><polygon points="988.3,258.8 995.8,256 993,203.2 985,205.6"/><polygon points="983.5,256.7 988.3,258.8 985,205.6 980,203.8"/></g>
<path class="bh" d="M1067.5 184.9L1062.8 186.3M1067.5 184.9L1123.2 200.6M1067.5 184.9L1067.6 178.3"/><polygon class="bt" points="1123.8,193.6 1067.6,178.3 1062.9,179.7 1119.1,195.2"/><polygon class="bs" points="1062.8,186.3 1118.6,202.2 1119.1,195.2 1062.9,179.7"/>
<path class="bh" d="M1067.5 184.9L981.5 210.8M1067.5 184.9L1072.5 186.3M1067.5 184.9L1067.6 178.3"/><polygon class="bt" points="986.1,205.3 1072.7,179.7 1067.6,178.3 981.1,203.5"/><polygon class="bs" points="986.5,212.5 1072.5,186.3 1072.7,179.7 986.1,205.3"/>
<path class="bh" d="M1117.5 199L1112.9 200.6M1117.5 199L1195.9 221.1M1117.5 199L1118 192"/><polygon class="bt" points="1197.1,213.6 1118,192 1113.4,193.6 1192.6,215.5"/><polygon class="bs" points="1112.9,200.6 1191.4,223.1 1192.6,215.5 1113.4,193.6"/>
<path class="bh" d="M1117.5 199L1031.7 228.8M1117.5 199L1123.2 200.6M1117.5 199L1118 192"/><polygon class="bt" points="1037.4,223.2 1123.8,193.6 1118,192 1031.6,221.2"/><polygon class="bs" points="1037.5,230.9 1123.2,200.6 1123.8,193.6 1037.4,223.2"/>
<path class="bh" d="M987.4 209L924.1 228M987.4 209L992.4 210.8M987.4 209L987 201.8"/><polygon class="bt" points="928,222.4 992,203.5 987,201.8 923.1,220.4"/><polygon class="bs" points="929,230.1 992.4,210.8 992,203.5 928,222.4"/>
<path class="bh" d="M987.4 209L981.5 210.8M987.4 209L1043.4 228.9M987.4 209L987 201.8"/><polygon class="bt" points="1043.4,221.2 987,201.8 981.1,203.5 1037.4,223.2"/><polygon class="bs" points="981.5,210.8 1037.5,230.9 1037.4,223.2 981.1,203.5"/>
<path class="bh" d="M1189.1 219.2L1184.6 221.1M1189.1 219.2L1263.3 240.1M1189.1 219.2L1190.2 211.7"/><polygon class="bt" points="1265.2,232.2 1190.2,211.7 1185.7,213.6 1260.9,234.4"/><polygon class="bs" points="1184.6,221.1 1259.1,242.4 1260.9,234.4 1185.7,213.6"/>
<path class="bh" d="M953.9 219.1L947.5 221M953.9 219.1L973.2 226.6M953.9 219.1L953.2 211.6"/><polygon class="bt" points="972.6,219 953.2,211.6 946.7,213.5 966.2,221"/><polygon class="bs" points="947.5,221 966.8,228.7 966.2,221 946.7,213.5"/>
<path class="bh" d="M1001.7 214.1L938.1 234M1001.7 214.1L1006.9 215.9M1001.7 214.1L1001.3 206.7"/><polygon class="bt" points="942.3,228.3 1006.6,208.5 1001.3,206.7 937.2,226.2"/><polygon class="bs" points="943.2,236.2 1006.9,215.9 1006.6,208.5 942.3,228.3"/>
<path class="bh" d="M1189.1 219.2L1132.5 243.5M1189.1 219.2L1195.9 221.1M1189.1 219.2L1190.2 211.7"/><polygon class="bt" points="1140.4,237.8 1197.1,213.6 1190.2,211.7 1133.3,235.5"/><polygon class="bs" points="1139.6,245.8 1195.9,221.1 1197.1,213.6 1140.4,237.8"/>
<path class="bh" d="M1035.3 227L1032.1 229.7M1035.3 227L1144.1 242.6M1035.3 227L1035.3 219.3"/><polygon class="bt" points="1032,222 1142.8,237.6 1144.9,234.6 1035.3,219.3"/><polygon class="bs" points="1032.1,229.7 1141.9,245.7 1142.8,237.6 1032,222"/>
<path class="bh" d="M930.9 226L924.1 228M930.9 226L986.1 249.1M930.9 226L929.9 218.4"/><polygon class="bt" points="985.6,241 929.9,218.4 923.1,220.4 978.6,243.4"/><polygon class="bs" points="924.1,228 979.2,251.6 978.6,243.4 923.1,220.4"/>
<path class="bh" d="M930.9 226L801 265.1M930.9 226L935.7 228M930.9 226L929.9 218.4"/><polygon class="bt" points="803.2,259.3 934.9,220.4 929.9,218.4 798.7,256.6"/><polygon class="bs" points="805.4,267.8 935.7,228 934.9,220.4 803.2,259.3"/>
<path class="bh" d="M1037.6 226.8L973.5 249.1M1037.6 226.8L1043.4 228.9M1037.6 226.8L1037.5 219.2"/><polygon class="bt" points="978.6,243.4 1043.4,221.2 1037.5,219.2 972.8,241"/><polygon class="bs" points="979.2,251.6 1043.4,228.9 1043.4,221.2 978.6,243.4"/>
<path class="bh" d="M1255.3 237.9L1201.3 266.4M1255.3 237.9L1263.3 240.1M1255.3 237.9L1257.1 230"/><polygon class="bt" points="1211.2,260.6 1265.2,232.2 1257.1,230 1202.8,257.9"/><polygon class="bs" points="1209.6,269.2 1263.3,240.1 1265.2,232.2 1211.2,260.6"/>
<path class="bh" d="M1137.9 241.2L1132.5 243.5M1137.9 241.2L1214.8 266.4M1137.9 241.2L1138.7 233.2"/><polygon class="bt" points="1216.4,257.9 1138.7,233.2 1133.3,235.5 1211.2,260.6"/><polygon class="bs" points="1132.5,243.5 1209.6,269.2 1211.2,260.6 1133.3,235.5"/>
<path class="bh" d="M1137.9 241.2L1046.8 280.4M1137.9 241.2L1144.9 243.5M1137.9 241.2L1138.7 233.2"/><polygon class="bt" points="1054.1,274.6 1145.8,235.5 1138.7,233.2 1046.8,271.6"/><polygon class="bs" points="1054,283.4 1144.9,243.5 1145.8,235.5 1054.1,274.6"/>
<path class="bh" d="M810 262.4L801 265.1M810 262.4L861.1 293.3M810 262.4L807.8 253.9"/><polygon class="bs" points="801,265.1 851.7,296.7 849.7,287.5 798.7,256.6"/><polygon class="bt" points="859.2,284.3 807.8,253.9 798.7,256.6 849.7,287.5"/>
<path class="bh" d="M980.4 246.7L973.5 249.1M980.4 246.7L1061 280.4M980.4 246.7L979.8 238.6"/><polygon class="bt" points="1061.1,271.6 979.8,238.6 972.8,241 1054.1,274.6"/><polygon class="bs" points="973.5,249.1 1054,283.4 1054.1,274.6 972.8,241"/>
<path class="bh" d="M980.4 246.7L846.4 293.3M980.4 246.7L986.1 249.1M980.4 246.7L979.8 238.6"/><polygon class="bt" points="849.7,287.5 985.6,241 979.8,238.6 844.3,284.3"/><polygon class="bs" points="851.7,296.7 986.1,249.1 985.6,241 849.7,287.5"/>
<path class="bh" d="M1206.5 263.7L1117.7 310.6M1206.5 263.7L1214.8 266.4M1206.5 263.7L1208 255.2"/><polygon class="bt" points="1127.3,304.9 1216.4,257.9 1208,255.2 1118.5,301.2"/><polygon class="bs" points="1126.4,314.3 1214.8,266.4 1216.4,257.9 1127.3,304.9"/>
<path class="bh" d="M1053.8 277.4L1046.8 280.4M1053.8 277.4L1133.2 310.6M1053.8 277.4L1053.9 268.7"/><polygon class="bt" points="1134.2,301.2 1053.9,268.7 1046.8,271.6 1127.3,304.9"/><polygon class="bs" points="1046.8,280.4 1126.4,314.3 1127.3,304.9 1046.8,271.6"/>
<path class="bh" d="M855.7 290.1L846.4 293.3M855.7 290.1L932.8 336.7M855.7 290.1L853.8 281.1"/><polygon class="bs" points="846.4,293.3 922.9,341 921.5,331.1 844.3,284.3"/><polygon class="bt" points="931.5,326.9 853.8,281.1 844.3,284.3 921.5,331.1"/>
<path class="bh" d="M1053.8 277.4L916 336.7M1053.8 277.4L1061 280.4M1053.8 277.4L1053.9 268.7"/><polygon class="bt" points="921.5,331.1 1061.1,271.6 1053.9,268.7 914.4,326.9"/><polygon class="bs" points="922.9,341 1061,280.4 1061.1,271.6 921.5,331.1"/>
<path class="bh" d="M1124.5 307L985.9 380.2M1124.5 307L1133.2 310.6M1124.5 307L1125.4 297.7"/><polygon class="bt" points="994,375.2 1134.2,301.2 1125.4,297.7 985.1,369.8"/><polygon class="bs" points="994.6,385.7 1133.2,310.6 1134.2,301.2 994,375.2"/>
<path class="bh" d="M925.8 332.4L916 336.7M925.8 332.4L1004.7 380.2M925.8 332.4L924.4 322.7"/><polygon class="bs" points="916,336.7 994.6,385.7 994,375.2 914.4,326.9"/><polygon class="bt" points="1004.2,369.8 924.4,322.7 914.4,326.9 994,375.2"/>

<polygon class="cs" points="980,203.8 985,205.6 981.3,145.7 976.1,144.3"/><polygon class="ce" points="985,205.6 993,203.2 989.9,143.9 981.3,145.7"/><path class="cv" d="M980 203.8L976.1 144.3M985 205.6L981.3 145.7M993 203.2L989.9 143.9"/><path class="ch" d="M988 201.5L984.6 142.5"/>
<polygon class="cs" points="921.9,220.7 926.8,222.8 918.9,159.1 913.7,157.5"/><polygon class="ce" points="926.8,222.8 936.1,220 928.9,157 918.9,159.1"/><path class="cv" d="M921.9 220.7L913.7 157.5M926.8 222.8L918.9 159.1M936.1 220L928.9 157"/><path class="ch" d="M931.1 218L923.7 155.4"/>
<polygon class="cs" points="1030.5,221.5 1036.4,223.6 1035.9,159.8 1029.6,158.2"/><polygon class="ce" points="1036.4,223.6 1044.4,220.8 1044.5,157.6 1035.9,159.8"/><path class="cv" d="M1030.5 221.5L1029.6 158.2M1036.4 223.6L1035.9 159.8M1044.4 220.8L1044.5 157.6"/><path class="ch" d="M1038.6 218.8L1038.2 156.1"/>
<polygon class="cs" points="971.6,241.4 977.4,243.8 972.5,175.8 966.3,173.8"/><polygon class="ce" points="977.4,243.8 986.8,240.5 982.7,173.2 972.5,175.8"/><path class="cv" d="M971.6 241.4L966.3 173.8M977.4 243.8L972.5 175.8M986.8 240.5L982.7 173.2"/><path class="ch" d="M981 238.2L976.5 171.3"/>
<clipPath id="k7"><polygon points="974.5,173.5 1037.1,157.9 983,144.1 921.3,157.3"/></clipPath>
<linearGradient id="g7" gradientUnits="userSpaceOnUse" x1="979.1" y1="144.9" x2="1069.3" y2="247.8"><stop offset="0" stop-color="#b4b4ba"/><stop offset=".55" stop-color="#85858a"/><stop offset="1" stop-color="#6a6a70"/></linearGradient>
<g class="sl" fill="url(#g7)"><polygon points="974.5,173.5 1037.1,157.9 983,144.1 921.3,157.3"/></g>
<g class="cg" clip-path="url(#k7)"><polygon points="977.4,243.8 986.8,240.5 982.7,173.2 972.5,175.8"/><polygon points="971.6,241.4 977.4,243.8 972.5,175.8 966.3,173.8"/><polygon points="926.8,222.8 936.1,220 928.9,157 918.9,159.1"/><polygon points="921.9,220.7 926.8,222.8 918.9,159.1 913.7,157.5"/><polygon points="1036.4,223.6 1044.4,220.8 1044.5,157.6 1035.9,159.8"/><polygon points="1030.5,221.5 1036.4,223.6 1035.9,159.8 1029.6,158.2"/><polygon points="985,205.6 993,203.2 989.9,143.9 981.3,145.7"/><polygon points="980,203.8 985,205.6 981.3,145.7 976.1,144.3"/></g>
<path class="bh" d="M984 150.9L916.1 166M984 150.9L989.2 152.3M984 150.9L983.5 142.8"/><polygon class="bt" points="920.2,158.8 988.8,144.1 983.5,142.8 915,157.2"/><polygon class="bs" points="921.3,167.6 989.2,152.3 988.8,144.1 920.2,158.8"/>
<path class="bh" d="M984 150.9L977.7 152.3M984 150.9L1043.4 166.7M984 150.9L983.5 142.8"/><polygon class="bt" points="1043.4,157.9 983.5,142.8 977.2,144.1 1037,159.5"/><polygon class="bs" points="977.7,152.3 1037.1,168.3 1037,159.5 977.2,144.1"/>
<path class="bh" d="M923.4 164.4L916.1 166M923.4 164.4L982 182.9M923.4 164.4L922.4 155.7"/><polygon class="bt" points="981.4,173.5 922.4,155.7 915,157.2 973.8,175.4"/><polygon class="bs" points="916.1,166 974.5,184.9 973.8,175.4 915,157.2"/>
<path class="bh" d="M1037.2 165L968.4 182.9M1037.2 165L1043.4 166.7M1037.2 165L1037.1 156.3"/><polygon class="bt" points="973.8,175.4 1043.4,157.9 1037.1,156.3 967.7,173.5"/><polygon class="bs" points="974.5,184.9 1043.4,166.7 1043.4,157.9 973.8,175.4"/>

<path d="M1013.3 671.2L1039.3 646.5M1035.5 654.2L1039.3 646.5L1031.4 649.8" fill="none" stroke="#ff2010" stroke-width="1.3"/>
<path d="M1013.3 671.2L989.5 646.6M997.2 650.2L989.5 646.6L992.9 654.4" fill="none" stroke="#10e020" stroke-width="1.3"/>
<path d="M1013.3 671.2L1012.1 652.1M1015.6 659.9L1012.1 652.1L1009.6 660.3" fill="none" stroke="#2050ff" stroke-width="1.3"/>
<text class="ax" x="1042" y="645" fill="#ff2010">X</text><text class="ax" x="977.5" y="645.5" fill="#10e020">Y</text><text class="ax" x="1006.5" y="649" fill="#2a6cff">Z</text>
</svg></div>
<div class="abs" style="left:1365px;top:75px;width:1px;height:627px;background:#e8e8e8"></div>
<div id="status" class="abs"><span class="abs" style="left:15px;top:4.5px;font-size:10.7px">Elevation View - A</span>
<div class="abs cb" style="left:1134px;width:86px">One Story</div><div class="abs cb" style="left:1222px;width:88px">Global</div><div class="abs cb" style="left:1312px;width:52px;background:#e4e4e4;padding-left:9px">Units...</div>
<svg class="abs" style="left:1206px;top:7px" width="12" height="8"><path d="M1.5 1.5l4 4l4-4" fill="none" stroke="#333" stroke-width="1.1"/></svg>
<svg class="abs" style="left:1294px;top:7px" width="12" height="8"><path d="M1.5 1.5l4 4l4-4" fill="none" stroke="#333" stroke-width="1.1"/></svg>
</div>
<div id="task" class="abs"><svg class="abs" style="left:0;top:0" width="1366" height="40" viewBox="0 728 1366 40" font-family="Liberation Sans, sans-serif"><path d="M16.300 741.600l6.500-.9v6.600h-6.500zM23.800 740.500l8.600-1.200v8h-8.600zM16.300 748.300h6.500v6.600l-6.500-.9zM23.800 748.300h8.600v8l-8.600-1.200z" fill="#fff"/><rect x="48" y="729" width="343" height="38" fill="#f3f3f3"/><circle cx="71" cy="745" r="4.700" fill="none" stroke="#222" stroke-width="1.300"/><path d="M67.700 748.500l-7 7" stroke="#222" stroke-width="1.300"/><text x="88.500" y="754" font-size="15" fill="#3b3b3b" textLength="127.500" lengthAdjust="spacingAndGlyphs">Type here to search</text><path d="M407 743.500h23.300v13.300a2 2 0 0 1 -2 2h-19.300a2 2 0 0 1 -2 -2z" fill="#fff"/><path d="M414 743.500v-2.300c0-5.500 9.300-5.500 9.300 0v2.300" fill="none" stroke="#fff" stroke-width="1.500"/><rect x="413.300" y="746" width="4.800" height="4.800" fill="#f25022"/><rect x="419.200" y="746" width="4.800" height="4.800" fill="#7fba00"/><rect x="413.300" y="751.800" width="4.800" height="4.800" fill="#00a4ef"/><rect x="419.200" y="751.800" width="4.800" height="4.800" fill="#ffb900"/><defs><linearGradient id="eg" x1="0" y1="0" x2="1" y2="1"><stop offset="0" stop-color="#35c1f1"/><stop offset=".5" stop-color="#1b9de2"/><stop offset="1" stop-color="#0c59a4"/></linearGradient><linearGradient id="eg2" x1="0" y1="1" x2="1" y2="0"><stop offset="0" stop-color="#2bc3d2"/><stop offset="1" stop-color="#6cdb52"/></linearGradient></defs><circle cx="467.800" cy="747.700" r="12" fill="url(#eg)"/><path d="M456 746c1-8 9-11.500 15.500-9.800c6 1.600 9 7 8 11.500c-.8 3.500-5 4.500-7.500 3c-1.500-1-1.300-2.500-.5-3.500c1.500-2.500-1-6-5-6c-5 0-9 2.500-10.500 4.800z" fill="url(#eg2)"/><path d="M461 752c0-4 3-6.500 6.500-6.500c-3 2-2.500 7.500 2.500 9.500c3 1 6-.2 7.500-1.500c-2 4-6 6-10 5.800c-4-.2-6.500-3.300-6.500-7.300z" fill="#0f4f9a"/><path d="M506 741.500a1 1 0 0 1 1-1h6.500l2 2h11.500a1 1 0 0 1 1 1v12.500h-22z" fill="#f9c13a"/><path d="M506 744.500h22v11.500a.8 .8 0 0 1 -.8 .8h-20.400a.8 .8 0 0 1 -.8 -.8z" fill="#fdd866"/><path d="M511 756.800v-6.300h12v6.300h-3v-3.300h-6v3.300z" fill="#3a8ee6"/><rect x="497" y="766" width="40" height="2" fill="#f5cfae"/><path d="M554 746.300l12.300-8.300l12.300 8.300v11h-24.600z" fill="#fff"/><path d="M556 746.500l20.500 0l-8.500 5.200l3 3.300z" fill="#1e1e1e"/><rect x="603" y="735.800" width="24" height="24" fill="#f3dcd9"/><path d="M607 757l6.500-18h3.500l6.500 18h-3.800l-1.300-4h-6.500l-1.300 4zM613 750h4.300l-2.100-6.800z" fill="#c4202b"/><path d="M607 757l6.500-18h1.700l-4.700 18z" fill="#8e1820"/><defs><radialGradient id="fg" cx=".7" cy=".15" r="1"><stop offset="0" stop-color="#fff36a"/><stop offset=".35" stop-color="#ff9a1f"/><stop offset=".7" stop-color="#ff4a39"/><stop offset="1" stop-color="#e31587"/></radialGradient><radialGradient id="fp" cx=".5" cy=".4" r=".6"><stop offset="0" stop-color="#9059ff"/><stop offset="1" stop-color="#5b3bd1"/></radialGradient></defs><circle cx="664.500" cy="748" r="11.800" fill="url(#fg)"/><path d="M668 734.500c2 2.500 2.500 4.500 2.300 6c2.500 1 5 4 5.700 7.500c-1-6.500-4-11-8-13.500z" fill="#ffbd4f"/><circle cx="665" cy="746.500" r="6" fill="url(#fp)"/><path d="M656 741c1.500-1 3.500-1 5-.3c1 1.800 3 2.800 5.500 2.800c-1 1.800-3 2-4.500 2c-2.500 0-2.500 3.500 1.500 4.500c-3 1-7.500-1-8.500-5c-.3-1.500 0-3 1-4z" fill="#ff7139"/><circle cx="713" cy="748" r="12" fill="#fff"/><path d="M713 748l-10.400-6a12 12 0 0 1 20.800 0z" fill="#ea4335"/><path d="M713 748l10.400-6a12 12 0 0 1 -10.400 18z" fill="#fbbc05"/><path d="M713 748v12a12 12 0 0 1 -10.400-18z" fill="#34a853"/><circle cx="713" cy="748" r="5.500" fill="#fff"/><circle cx="713" cy="748" r="4.400" fill="#4285f4"/><defs><radialGradient id="vg" cx=".4" cy=".35" r=".8"><stop offset="0" stop-color="#3aa0da"/><stop offset="1" stop-color="#135a8c"/></radialGradient></defs><circle cx="762" cy="748" r="12" fill="url(#vg)"/><path d="M754.500 743.500h5l1.800 7.500l6.500-10h3.500l-9.500 14.500h-3.500z" fill="#fff"/><rect x="799" y="736" width="24" height="24" rx="5.500" fill="#f58220"/><path d="M805 755c-4-5-1.500-13 5.500-14c6-.8 10 3 9.500 7c-.5 4-5 6-8.500 6c2-1 4.500-3 4.500-5.500c0-2.500-2.500-4-5-3.500c-3.500 .7-5 4.500-3 8z" fill="#fff"/><path d="M808.500 756.500l11-9" stroke="#fff" stroke-width="1.400"/><rect x="836" y="728" width="48" height="40" fill="#4a4c4a"/><rect x="836" y="766" width="48" height="2" fill="#f5cfae"/><svg x="848" y="736" width="24" height="24" viewBox="0 0 16 16"><linearGradient id="ai" x1="0" y1="0" x2="0" y2="1"><stop offset="0" stop-color="#fdf0f4"/><stop offset=".45" stop-color="#f6b6c8"/><stop offset="1" stop-color="#de3f74"/></linearGradient><linearGradient id="aj" x1="0" y1="0" x2="0" y2="1"><stop offset="0" stop-color="#dfe8f6"/><stop offset=".5" stop-color="#8d93aa"/><stop offset="1" stop-color="#33363f"/></linearGradient><rect width="16" height="16" fill="url(#ai)"/><rect x="8" y="0" width="8" height="9" fill="#fbeaf1" opacity=".7"/><rect x="2.300" y="10" width="3.400" height="6" fill="#bfe8f2"/><rect x="6.300" y="2" width="4.200" height="14" fill="url(#aj)"/><rect x="10.800" y="7.500" width="5.200" height="8.500" fill="#343b3f"/><rect x="11.500" y="4.500" width="3" height="3" fill="#6c6f86"/><path d="M6.300 4.500h4.200M6.300 7h4.200M6.300 9.500h4.200" stroke="#3f4560" stroke-width=".9"/><path d="M10.800 9.700h5.200M10.800 12.500h5.200M6.300 12.500h4.200" stroke="#f2f4f8" stroke-width="1"/></svg><rect x="889" y="766" width="40" height="2" fill="#f5cfae"/><rect x="906" y="738.500" width="14" height="19" fill="#fff" stroke="#2b579a" stroke-width=".8"/><path d="M909 742h9M909 745h9M909 748h9M909 751h9M909 754h9" stroke="#2b579a" stroke-width="1.200"/><path d="M897.500 738l13-2v24l-13-2z" fill="#2b579a"/><text x="899.300" y="752.500" font-size="10" font-weight="bold" fill="#fff">W</text><path d="M1147.500 751l5.500-5.500l5.500 5.500" fill="none" stroke="#fff" stroke-width="1.300"/><rect x="1174.500" y="744.500" width="10" height="7.500" fill="none" stroke="#fff" stroke-width="1.100"/><rect x="1175.500" y="745.500" width="3" height="5.500" fill="#fff"/><path d="M1184.800 747v2.500M1171.500 742.500v2M1174 742.500v2M1170.300 745h5v2.500c0 2-5 2-5 0zM1172.800 749.500v3.500" stroke="#fff" stroke-width="1" fill="#1e1e1e"/><circle cx="1200.500" cy="748" r="7" fill="none" stroke="#fff" stroke-width="1.100"/><path d="M1193.500 748h14M1200.500 741v14M1194.500 744.500h12M1194.500 751.500h8" stroke="#fff" stroke-width=".9"/><ellipse cx="1200.500" cy="748" rx="3.300" ry="7" fill="none" stroke="#fff" stroke-width=".9"/><circle cx="1206" cy="753" r="3.600" fill="#1e1e1e" stroke="#fff" stroke-width="1"/><path d="M1203.700 755.300l4.600-4.600" stroke="#fff" stroke-width="1"/><text x="1219.500" y="752.200" font-size="12" fill="#fff" textLength="22.500" lengthAdjust="spacingAndGlyphs">ENG</text><text x="1261" y="742.800" font-size="12" fill="#fff" textLength="40.700" lengthAdjust="spacingAndGlyphs">1:29 PM</text><text x="1253" y="760.400" font-size="12" fill="#fff" textLength="56.700" lengthAdjust="spacingAndGlyphs">10/17/2017</text><path d="M1325 740.500h16.300v11h-11l-3 3v-3h-2.300z" fill="#fff"/><path d="M1328 743.500h10.500M1328 746h10.500M1328 748.500h7" stroke="#1e1e1e" stroke-width="1"/><circle cx="1341" cy="755" r="8.600" fill="#1e1e1e" stroke="#9a9a9a" stroke-width="1.200"/><text x="1335.700" y="759" font-size="11" fill="#fff" textLength="10.500" lengthAdjust="spacingAndGlyphs">15</text><path d="M1361.500 728v40" stroke="#6a6a6a" stroke-width="1"/></svg></div>
</body></html>
